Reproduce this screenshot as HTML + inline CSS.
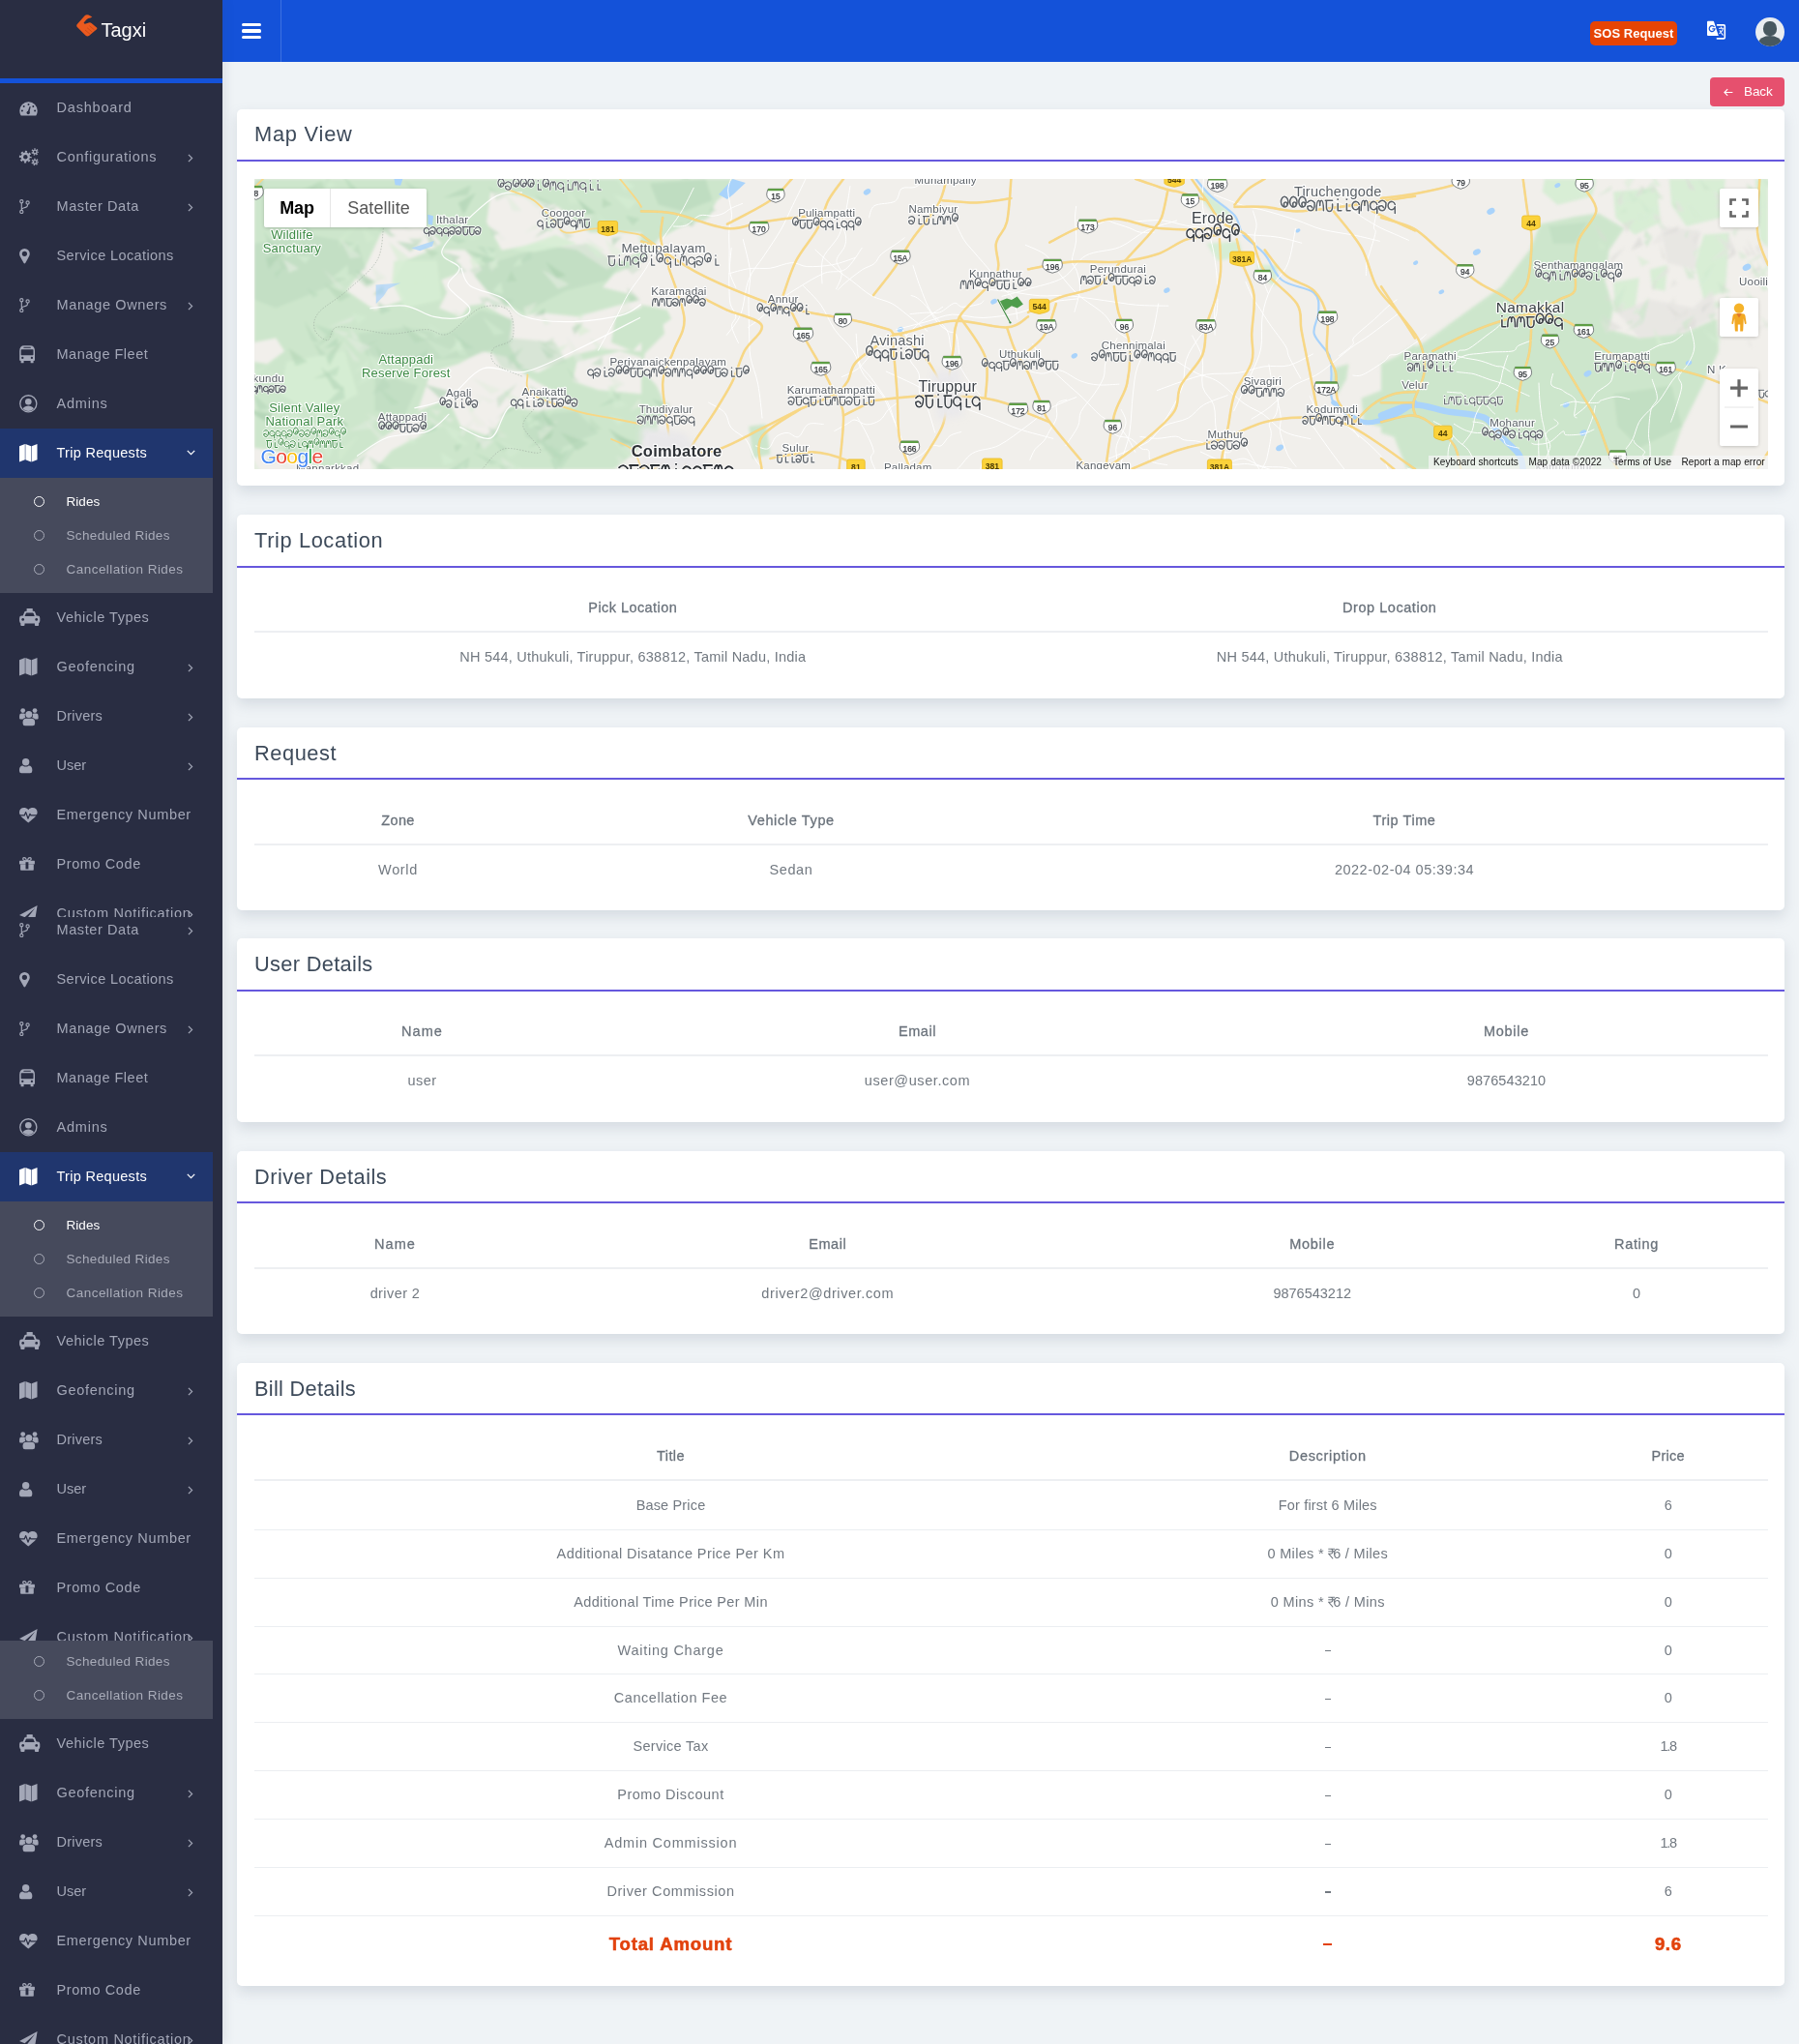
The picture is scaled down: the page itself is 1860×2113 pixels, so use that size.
<!DOCTYPE html>
<html><head><meta charset="utf-8"><title>Tagxi</title>
<style>
*{box-sizing:border-box}
html,body{margin:0;padding:0}
body{width:1860px;height:2113px;overflow:hidden;background:#eff3f6;font-family:"Liberation Sans",sans-serif;font-size:15px;color:#6c757d}
#page{will-change:transform;opacity:.999;position:relative;width:1860px;height:2113px;overflow:hidden;background:#eff3f6}
/* sidebar */
#sb{position:absolute;left:0;top:0;width:230px;height:2113px;background:#292d42;overflow:hidden;box-shadow:0 0 12px rgba(60,70,90,.16)}
.seg{position:absolute;left:0;width:230px;overflow:hidden}
.segin{position:absolute;left:0;width:230px;height:960px}
.act{position:absolute;left:0;top:443px;width:220px;height:51px;background:#20366e}
.subbg{position:absolute;left:0;top:494px;width:220px;height:119px;background:#464a5c}
.mi{position:absolute;left:58.5px;height:24px;line-height:24px;font-size:14.5px;color:#a3a7b7;white-space:nowrap}
.mi.on{color:#fff}
.ic{position:absolute;left:19.5px;width:24px;height:24px;color:#a3a7b7}
.ic.on{color:#fff}
.ic svg{position:absolute;left:0;top:0;overflow:visible}
.chev{position:absolute}
.si{position:absolute;left:68.5px;height:20px;line-height:20px;font-size:13.5px;color:#a9acb9;white-space:nowrap}
.si.on{color:#fff}
.circ{position:absolute;left:35px;width:11px;height:11px;border:1.3px solid #a9acb9;border-radius:50%}
.logoline{position:absolute;left:0;top:81px;width:230px;height:5px;background:#1452d9}
.logot{position:absolute;left:104.5px;top:18.5px;font-size:20px;line-height:24px;color:#fff;white-space:nowrap}
/* header */
#hd{position:absolute;left:230px;top:0;width:1630px;height:64px;background:#1452d9}
/* cards */
.card{position:absolute;left:245px;width:1600px;background:#fff;border-radius:5px;box-shadow:0 6px 14px rgba(120,132,150,.22)}
.ct{position:absolute;left:18px;height:28px;line-height:28px;font-size:21.8px;color:#3d4a5a;white-space:nowrap}
.cl{position:absolute;left:0;width:1600px;height:2.2px;background:#6658dd}
.th,.td,.tt{position:absolute;height:49px;line-height:49px;text-align:center;white-space:nowrap}
.th{font-size:14.5px;color:#6a727b;-webkit-text-stroke:.28px #6a727b}
.td{font-size:14.5px;color:#727981}
.tt{font-weight:bold;font-size:18.6px;color:#e2420d;height:55px;line-height:55px;-webkit-text-stroke:.55px #e2420d}
.hb{position:absolute;left:18px;width:1565px;height:2px;background:#edeff2}
.rb{position:absolute;left:18px;width:1565px;height:1px;background:#ebeef1}
.tk{display:inline-block;vertical-align:-1.5px;margin:0 -3.2px 0 0}
#map{position:absolute;left:18px;top:71.7px;width:1565px;height:300px;overflow:hidden;background:#f1efeb}
.ds{position:absolute;left:50%;margin-left:-3.2px;top:24.6px;width:6.4px;height:1.3px;background:#727981}
.dt{position:absolute;left:50%;margin-left:-4.5px;top:26.6px;width:9px;height:2.4px;background:#e2420d}

</style></head>
<body>
<div id="page">
<div class="card" style="top:113px;height:388.7px"><div class="ct" style="top:12.4px;letter-spacing:0.79px;">Map View</div><div class="cl" style="top:51.7px"></div><div id="map"><svg width="1565" height="300" viewBox="0 0 1565 300" style="position:absolute;left:0;top:0">
<defs><filter id="bl" x="-5%" y="-5%" width="110%" height="110%"><feGaussianBlur stdDeviation="1.6"/></filter><filter id="bl2" x="-5%" y="-5%" width="110%" height="110%"><feGaussianBlur stdDeviation="3.5"/></filter></defs>
<rect width="1565" height="300" fill="#f1efeb"/>
<g filter="url(#bl)">
<polygon points="0.0,0.0 495.0,0.0 478.0,22.0 470.0,40.0 440.0,50.0 418.0,62.0 400.0,86.0 372.0,98.0 360.0,112.0 392.0,120.0 400.0,130.0 420.0,134.0 424.0,160.0 404.0,180.0 400.0,196.0 416.0,214.0 426.0,236.0 410.0,262.0 392.0,284.0 372.0,300.0 0.0,300.0" fill="#cde6cc" />
<polygon points="95.6,115.6 115.6,88.9 133.4,51.1 177.9,50.0 193.4,66.7 177.9,75.6 155.6,84.5 144.5,104.5 155.6,124.5 124.5,135.6" fill="#f1efeb" />
<polygon points="193.4,104.5 222.3,93.4 240.1,115.6 277.9,142.3 293.5,137.9 333.5,142.3 400.0,124.5 400.0,177.9 355.8,175.7 329.1,182.3 293.5,200.1 275.7,195.7 262.4,169.0 266.8,146.7 235.7,129.0 206.8,133.4" fill="#f1efeb" />
<polygon points="182.3,200.1 211.2,191.2 235.7,177.9 262.4,184.5 282.4,204.6 333.5,233.5 293.5,240.1 262.4,235.7 244.6,266.8 213.5,255.7 200.1,226.8 169.0,240.1" fill="#f1efeb" />
<polygon points="244.6,13.3 277.9,17.8 311.3,26.7 346.9,55.6 400.0,55.6 400.0,73.4 364.6,93.4 333.5,73.4 293.5,66.7 255.7,73.4 240.1,44.5" fill="#f1efeb" />
<polygon points="193.4,73.4 213.5,88.9 200.1,115.6 191.2,133.4 213.5,142.3 226.8,124.5 222.3,104.5 235.7,93.4 217.9,73.4" fill="#f1efeb" />
<polygon points="97.8,295.7 133.4,266.8 169.0,244.6 177.9,262.4 142.3,280.2 124.5,299.9 95.6,299.9" fill="#f1efeb" />
<polygon points="0.0,277.9 44.5,284.6 66.7,299.9 0.0,299.9" fill="#f1efeb" />
<polygon points="0.0,169.0 22.2,164.5 31.1,177.9 13.3,191.2 0.0,189.0" fill="#f1efeb" />
<polygon points="333.5,189.0 378.0,177.9 400.0,184.5 400.0,222.3 355.8,217.9 329.1,209.0" fill="#f1efeb" />
<polygon points="222.3,93.4 289.0,73.4 344.6,66.7 378.0,88.9 364.6,104.5 322.4,115.6 277.9,137.9 244.6,120.1" fill="#b5d7b9" opacity=".42"/>
<polygon points="106.7,160.1 155.6,153.4 200.1,160.1 233.5,135.6 266.8,144.5 266.8,169.0 222.3,184.5 155.6,189.0 115.6,182.3" fill="#b5d7b9" opacity=".42"/>
<polygon points="244.6,177.9 266.8,164.5 311.3,169.0 322.4,189.0 277.9,200.1 255.7,195.7" fill="#b5d7b9" opacity=".42"/>
<polygon points="0.0,66.7 57.8,57.8 106.7,66.7 115.6,93.4 66.7,115.6 22.2,133.4 0.0,124.5" fill="#b5d7b9" opacity=".42"/>
<polygon points="124.5,200.1 169.0,213.5 155.6,244.6 124.5,240.1" fill="#b5d7b9" opacity=".42"/>
<polygon points="277.9,244.6 333.5,240.1 355.8,262.4 311.3,280.2 280.2,266.8" fill="#b5d7b9" opacity=".42"/>
<polygon points="144.5,84.5 189.0,84.5 193.4,124.5 155.6,133.4 142.3,106.7" fill="#d6edd4" opacity=".9"/>
<polygon points="33.4,189.0 93.4,177.9 106.7,222.3 66.7,244.6 26.7,222.3" fill="#d6edd4" opacity=".9"/>
<polygon points="266.8,73.4 311.3,57.8 333.5,66.7 289.0,75.6" fill="#d6edd4" opacity=".9"/>
<polygon points="68.5,193.8 93.0,217.4 82.3,217.4" fill="#b5d7b9" opacity="0.69"/>
<polygon points="78.6,154.7 98.5,159.3 92.9,162.9" fill="#e4ebe0" opacity="0.61"/>
<polygon points="194.8,305.7 222.7,287.6 220.5,298.4" fill="#b5d7b9" opacity="0.59"/>
<polygon points="305.5,278.7 319.9,278.4 312.4,288.6" fill="#b5d7b9" opacity="0.51"/>
<polygon points="260.7,106.3 265.5,94.9 271.2,105.4" fill="#a9cfae" opacity="0.43"/>
<polygon points="380.2,59.5 370.8,69.3 369.1,60.8" fill="#b5d7b9" opacity="0.64"/>
<polygon points="108.1,265.3 87.9,291.6 86.5,280.9" fill="#d6edd4" opacity="0.46"/>
<polygon points="217.2,72.7 249.7,82.9 240.0,87.8" fill="#a9cfae" opacity="0.52"/>
<polygon points="256.0,216.2 275.9,229.3 265.8,232.8" fill="#d6edd4" opacity="0.41"/>
<polygon points="70.7,92.6 94.9,114.2 86.0,113.7" fill="#e4ebe0" opacity="0.41"/>
<polygon points="193.0,37.5 221.0,55.5 211.0,57.2" fill="#a9cfae" opacity="0.70"/>
<polygon points="171.7,68.5 191.0,76.6 183.3,80.7" fill="#b5d7b9" opacity="0.61"/>
<polygon points="22.0,78.1 35.5,93.2 28.6,92.9" fill="#b5d7b9" opacity="0.37"/>
<polygon points="158.7,265.5 167.9,272.3 162.4,274.0" fill="#d6edd4" opacity="0.58"/>
<polygon points="169.3,37.4 186.8,51.4 174.4,55.0" fill="#d6edd4" opacity="0.52"/>
<polygon points="60.5,169.1 74.7,182.3 68.3,182.6" fill="#b5d7b9" opacity="0.60"/>
<polygon points="120.9,89.8 137.0,102.8 126.5,105.7" fill="#e4ebe0" opacity="0.61"/>
<polygon points="383.6,37.8 398.6,41.1 391.0,48.0" fill="#b5d7b9" opacity="0.63"/>
<polygon points="22.2,25.1 49.3,43.5 39.4,45.0" fill="#e4ebe0" opacity="0.66"/>
<polygon points="288.9,61.5 306.1,45.7 305.1,52.0" fill="#a9cfae" opacity="0.60"/>
<polygon points="411.1,227.2 430.2,233.4 422.1,239.2" fill="#b5d7b9" opacity="0.65"/>
<polygon points="117.3,283.3 108.7,296.9 106.8,290.9" fill="#b5d7b9" opacity="0.60"/>
<polygon points="388.8,142.4 385.9,154.4 379.7,147.0" fill="#e4ebe0" opacity="0.46"/>
<polygon points="253.5,82.6 245.8,95.9 241.7,86.8" fill="#e4ebe0" opacity="0.46"/>
<polygon points="86.8,27.8 103.4,7.7 105.6,18.4" fill="#b5d7b9" opacity="0.63"/>
<polygon points="342.8,137.1 336.1,146.9 334.8,142.3" fill="#d6edd4" opacity="0.58"/>
<polygon points="28.6,77.1 14.8,92.9 12.0,81.4" fill="#a9cfae" opacity="0.49"/>
<polygon points="147.0,64.4 169.3,67.4 161.4,75.6" fill="#b5d7b9" opacity="0.66"/>
<polygon points="384.8,179.9 366.7,200.2 364.7,188.9" fill="#e4ebe0" opacity="0.44"/>
<polygon points="287.1,243.8 304.6,247.7 298.3,253.1" fill="#b5d7b9" opacity="0.40"/>
<polygon points="257.6,12.5 276.9,32.9 267.0,33.0" fill="#d6edd4" opacity="0.39"/>
<polygon points="103.6,97.0 95.3,105.9 94.6,101.1" fill="#d6edd4" opacity="0.53"/>
<polygon points="106.1,213.0 120.3,196.7 121.9,205.6" fill="#d6edd4" opacity="0.57"/>
<polygon points="128.1,55.4 138.6,43.5 141.3,56.2" fill="#b5d7b9" opacity="0.36"/>
<polygon points="379.6,273.1 400.8,284.8 392.4,287.8" fill="#e4ebe0" opacity="0.50"/>
<polygon points="220.3,291.5 214.3,305.3 210.3,298.5" fill="#d6edd4" opacity="0.35"/>
<polygon points="72.1,175.3 85.7,163.7 86.2,172.2" fill="#b5d7b9" opacity="0.66"/>
<polygon points="128.4,166.0 107.3,181.0 109.4,174.4" fill="#b5d7b9" opacity="0.50"/>
<polygon points="305.1,49.5 325.2,37.8 323.8,47.3" fill="#e4ebe0" opacity="0.59"/>
<polygon points="314.7,37.9 335.7,52.2 329.2,52.2" fill="#d6edd4" opacity="0.63"/>
<polygon points="313.5,50.0 330.2,59.1 322.8,62.2" fill="#b5d7b9" opacity="0.41"/>
<polygon points="274.8,87.4 284.8,74.9 286.8,82.5" fill="#b5d7b9" opacity="0.44"/>
<polygon points="106.1,47.6 87.0,70.7 87.1,62.3" fill="#d6edd4" opacity="0.36"/>
<polygon points="159.6,154.4 180.0,162.7 173.5,165.3" fill="#d6edd4" opacity="0.65"/>
<polygon points="373.0,264.9 403.4,275.0 393.8,280.1" fill="#a9cfae" opacity="0.67"/>
<polygon points="372.0,-4.9 393.8,7.6 382.9,12.3" fill="#d6edd4" opacity="0.58"/>
<polygon points="83.0,274.2 76.4,289.1 69.8,277.5" fill="#d6edd4" opacity="0.54"/>
<polygon points="367.8,213.2 379.2,229.5 372.4,228.5" fill="#b5d7b9" opacity="0.54"/>
<polygon points="46.7,12.6 77.7,-1.6 74.1,10.5" fill="#b5d7b9" opacity="0.61"/>
<polygon points="98.2,152.1 108.4,166.1 102.0,165.6" fill="#e4ebe0" opacity="0.58"/>
<polygon points="287.5,142.1 300.5,134.0 299.8,140.3" fill="#a9cfae" opacity="0.64"/>
<polygon points="100.6,138.8 116.0,143.0 107.1,150.3" fill="#d6edd4" opacity="0.47"/>
<polygon points="205.2,83.3 220.4,95.4 212.2,97.4" fill="#b5d7b9" opacity="0.35"/>
<polygon points="325.1,170.4 314.4,181.0 313.5,174.3" fill="#d6edd4" opacity="0.61"/>
<polygon points="379.7,140.9 401.7,145.0 394.7,151.0" fill="#b5d7b9" opacity="0.49"/>
<polygon points="294.9,172.8 310.6,184.0 303.5,185.8" fill="#b5d7b9" opacity="0.62"/>
<polygon points="369.6,267.2 393.2,288.0 385.5,286.8" fill="#d6edd4" opacity="0.46"/>
<polygon points="297.6,38.3 312.6,47.1 306.2,49.4" fill="#e4ebe0" opacity="0.42"/>
<polygon points="224.9,206.0 254.9,218.1 245.1,222.5" fill="#d6edd4" opacity="0.35"/>
<polygon points="114.2,242.3 138.6,250.7 132.2,252.5" fill="#e4ebe0" opacity="0.60"/>
<polygon points="292.5,126.9 281.5,143.0 277.9,133.2" fill="#e4ebe0" opacity="0.57"/>
<polygon points="163.2,109.6 186.0,94.0 184.9,104.7" fill="#d6edd4" opacity="0.50"/>
<polygon points="96.6,260.8 124.8,245.5 122.3,257.7" fill="#e4ebe0" opacity="0.47"/>
<polygon points="68.2,-2.2 84.6,5.9 73.0,12.1" fill="#d6edd4" opacity="0.51"/>
<polygon points="89.9,-6.2 106.1,10.7 98.9,10.3" fill="#b5d7b9" opacity="0.58"/>
<polygon points="294.9,33.4 309.3,38.1 304.8,40.5" fill="#a9cfae" opacity="0.62"/>
<polygon points="93.5,162.2 120.8,173.5 109.1,180.4" fill="#e4ebe0" opacity="0.59"/>
<polygon points="385.4,111.8 399.4,125.2 388.0,127.5" fill="#a9cfae" opacity="0.36"/>
<polygon points="251.0,256.4 229.1,280.2 230.6,272.3" fill="#b5d7b9" opacity="0.69"/>
<polygon points="380.2,210.9 367.7,225.1 365.3,214.7" fill="#d6edd4" opacity="0.58"/>
<polygon points="181.3,237.9 193.8,239.6 188.8,245.0" fill="#e4ebe0" opacity="0.63"/>
<polygon points="353.1,35.1 373.2,51.8 363.8,53.3" fill="#d6edd4" opacity="0.43"/>
<polygon points="168.6,265.5 188.7,250.0 188.2,259.6" fill="#b5d7b9" opacity="0.54"/>
<polygon points="166.5,63.3 181.6,53.1 180.7,59.8" fill="#e4ebe0" opacity="0.67"/>
<polygon points="190.4,53.2 219.6,63.8 211.0,67.3" fill="#b5d7b9" opacity="0.58"/>
<polygon points="101.5,201.8 117.7,185.6 118.3,194.2" fill="#d6edd4" opacity="0.45"/>
<polygon points="279.3,242.2 295.9,253.1 284.1,257.8" fill="#d6edd4" opacity="0.58"/>
<polygon points="128.5,215.3 150.1,232.3 141.5,233.2" fill="#b5d7b9" opacity="0.55"/>
<polygon points="388.0,240.4 398.1,226.9 400.0,233.9" fill="#e4ebe0" opacity="0.63"/>
<polygon points="283.5,212.6 309.1,229.2 295.8,234.0" fill="#b5d7b9" opacity="0.52"/>
<polygon points="330.3,147.1 347.8,157.0 336.1,162.6" fill="#d6edd4" opacity="0.62"/>
<polygon points="241.4,7.6 260.7,17.4 250.3,22.7" fill="#b5d7b9" opacity="0.37"/>
<polygon points="313.5,26.7 301.0,44.0 297.5,33.4" fill="#a9cfae" opacity="0.49"/>
<polygon points="176.2,212.2 202.6,219.8 192.4,227.4" fill="#b5d7b9" opacity="0.69"/>
<polygon points="116.4,174.1 132.7,199.8 125.3,196.8" fill="#d6edd4" opacity="0.47"/>
<polygon points="300.9,241.2 309.0,248.2 301.9,249.9" fill="#b5d7b9" opacity="0.41"/>
<polygon points="159.4,61.4 174.3,62.2 168.3,69.7" fill="#b5d7b9" opacity="0.54"/>
<polygon points="419.1,245.7 397.8,264.4 399.5,257.1" fill="#e4ebe0" opacity="0.68"/>
<polygon points="138.6,64.8 161.9,83.1 149.2,86.2" fill="#d6edd4" opacity="0.61"/>
<polygon points="339.8,63.4 362.3,81.0 354.3,81.2" fill="#d6edd4" opacity="0.68"/>
<polygon points="282.5,278.0 309.3,259.5 306.4,267.6" fill="#a9cfae" opacity="0.60"/>
<polygon points="195.2,19.6 224.2,6.2 220.8,16.6" fill="#b5d7b9" opacity="0.67"/>
<polygon points="-3.5,220.0 15.8,236.9 5.1,238.9" fill="#a9cfae" opacity="0.37"/>
<polygon points="205.5,159.1 221.4,183.6 211.3,181.9" fill="#d6edd4" opacity="0.44"/>
<polygon points="266.0,187.6 279.4,192.9 272.5,197.4" fill="#b5d7b9" opacity="0.46"/>
<polygon points="134.9,99.1 117.6,114.2 118.7,107.9" fill="#d6edd4" opacity="0.38"/>
<polygon points="87.5,60.4 110.4,80.6 98.9,82.2" fill="#e4ebe0" opacity="0.52"/>
<polygon points="360.6,195.7 383.1,212.8 372.9,214.9" fill="#e4ebe0" opacity="0.61"/>
<polygon points="291.5,266.9 318.9,286.6 308.1,288.4" fill="#b5d7b9" opacity="0.67"/>
<polygon points="40.6,208.2 54.2,223.8 44.5,224.5" fill="#d6edd4" opacity="0.44"/>
<polygon points="111.5,248.0 137.3,269.2 128.5,268.7" fill="#e4ebe0" opacity="0.54"/>
<polygon points="340.2,147.9 331.2,161.3 328.2,153.4" fill="#a9cfae" opacity="0.50"/>
<polygon points="322.4,194.2 335.7,209.6 330.0,208.7" fill="#b5d7b9" opacity="0.45"/>
<polygon points="175.2,47.4 190.0,69.1 180.9,67.7" fill="#a9cfae" opacity="0.45"/>
<polygon points="343.5,61.3 362.7,74.2 353.5,77.1" fill="#d6edd4" opacity="0.44"/>
<polygon points="64.7,261.1 91.0,273.8 82.9,275.9" fill="#a9cfae" opacity="0.62"/>
<polygon points="91.7,166.2 77.4,193.3 74.2,183.5" fill="#b5d7b9" opacity="0.65"/>
<polygon points="279.5,56.2 296.2,43.1 295.0,49.0" fill="#d6edd4" opacity="0.41"/>
<polygon points="82.2,181.4 93.4,166.2 96.8,176.4" fill="#d6edd4" opacity="0.42"/>
<polygon points="242.5,49.1 253.8,56.2 246.5,59.2" fill="#b5d7b9" opacity="0.58"/>
<polygon points="250.5,247.9 275.4,227.7 272.7,235.0" fill="#a9cfae" opacity="0.62"/>
<polygon points="61.4,149.8 81.6,156.7 74.2,161.4" fill="#b5d7b9" opacity="0.51"/>
<polygon points="236.5,80.4 226.7,94.3 222.6,82.4" fill="#d6edd4" opacity="0.62"/>
<polygon points="346.8,164.3 367.4,177.0 357.8,180.5" fill="#d6edd4" opacity="0.43"/>
<polygon points="197.5,259.4 221.8,273.9 213.4,275.7" fill="#d6edd4" opacity="0.51"/>
<polygon points="449.3,17.0 477.9,32.3 465.0,37.9" fill="#b5d7b9" opacity="0.51"/>
<polygon points="374.0,285.6 388.9,294.1 378.4,299.0" fill="#e4ebe0" opacity="0.40"/>
<polygon points="253.6,271.7 275.2,281.2 263.7,288.2" fill="#d6edd4" opacity="0.53"/>
<polygon points="227.2,266.0 247.3,270.7 237.4,279.5" fill="#e4ebe0" opacity="0.69"/>
<polygon points="232.5,121.8 243.8,123.8 236.5,130.6" fill="#b5d7b9" opacity="0.42"/>
<polygon points="154.3,113.3 167.9,123.4 162.1,124.5" fill="#d6edd4" opacity="0.55"/>
<polygon points="117.0,286.2 145.2,302.4 133.1,306.9" fill="#b5d7b9" opacity="0.50"/>
<polygon points="17.2,285.1 43.3,302.7 35.7,302.3" fill="#e4ebe0" opacity="0.52"/>
<polygon points="360.1,19.4 370.2,26.5 359.8,29.8" fill="#a9cfae" opacity="0.46"/>
<polygon points="350.0,36.8 342.3,45.1 340.9,38.5" fill="#e4ebe0" opacity="0.65"/>
<polygon points="179.7,149.3 197.0,161.2 187.0,164.7" fill="#d6edd4" opacity="0.38"/>
<polygon points="246.2,116.3 254.9,106.2 257.2,118.9" fill="#d6edd4" opacity="0.61"/>
<polygon points="152.7,149.9 177.4,166.2 166.1,169.7" fill="#b5d7b9" opacity="0.57"/>
<polygon points="175.9,164.4 206.9,178.6 194.2,184.9" fill="#d6edd4" opacity="0.38"/>
<polygon points="78.5,240.2 97.7,254.8 88.4,257.0" fill="#a9cfae" opacity="0.57"/>
<polygon points="396.0,55.7 403.7,64.4 397.9,64.9" fill="#d6edd4" opacity="0.58"/>
<polygon points="129.1,194.6 146.5,204.1 135.4,209.6" fill="#d6edd4" opacity="0.56"/>
<polygon points="409.7,1.0 431.0,15.4 420.9,18.4" fill="#d6edd4" opacity="0.49"/>
<polygon points="301.3,85.8 322.0,99.7 312.1,102.8" fill="#a9cfae" opacity="0.63"/>
<polygon points="61.1,206.7 88.1,192.9 85.2,203.1" fill="#b5d7b9" opacity="0.50"/>
<polygon points="318.0,37.2 305.9,56.2 300.9,43.9" fill="#d6edd4" opacity="0.69"/>
<polygon points="197.5,75.8 213.4,80.5 207.3,84.9" fill="#b5d7b9" opacity="0.64"/>
<polygon points="79.8,102.5 96.5,88.8 97.5,102.2" fill="#d6edd4" opacity="0.65"/>
<polygon points="167.2,240.4 179.8,248.9 170.6,252.5" fill="#e4ebe0" opacity="0.44"/>
<polygon points="286.4,253.3 303.7,260.4 297.8,263.1" fill="#b5d7b9" opacity="0.51"/>
<polygon points="266.8,90.8 275.0,81.3 276.9,88.9" fill="#d6edd4" opacity="0.55"/>
<polygon points="385.2,147.7 403.1,162.4 394.9,163.6" fill="#a9cfae" opacity="0.57"/>
<polygon points="71.3,235.4 92.0,214.3 93.7,227.1" fill="#b5d7b9" opacity="0.59"/>
<polygon points="343.5,4.9 354.9,10.6 346.2,15.1" fill="#d6edd4" opacity="0.49"/>
<polygon points="289.7,16.7 310.1,25.8 301.0,30.9" fill="#a9cfae" opacity="0.40"/>
<polygon points="316.4,262.1 345.5,273.1 333.4,280.7" fill="#a9cfae" opacity="0.55"/>
<polygon points="296.9,93.7 325.6,108.9 313.9,113.6" fill="#e4ebe0" opacity="0.65"/>
<polygon points="241.9,92.4 249.2,82.2 252.3,91.3" fill="#d6edd4" opacity="0.62"/>
<polygon points="253.3,123.0 267.6,125.0 258.9,133.7" fill="#b5d7b9" opacity="0.57"/>
<polygon points="228.9,14.2 216.2,36.7 210.7,24.7" fill="#a9cfae" opacity="0.56"/>
<polygon points="9.7,54.6 28.6,78.9 19.2,77.4" fill="#b5d7b9" opacity="0.65"/>
<polygon points="63.5,174.5 81.4,154.6 81.0,162.1" fill="#a9cfae" opacity="0.46"/>
<polygon points="54.4,113.5 66.7,119.7 61.0,122.5" fill="#b5d7b9" opacity="0.51"/>
<polygon points="314.1,231.5 302.2,252.0 300.7,245.0" fill="#d6edd4" opacity="0.36"/>
<polygon points="371.1,16.4 396.4,23.2 386.2,31.4" fill="#d6edd4" opacity="0.63"/>
<polygon points="108.2,64.2 100.0,76.4 97.6,69.7" fill="#d6edd4" opacity="0.65"/>
<polygon points="82.5,261.1 94.4,263.6 85.0,271.1" fill="#d6edd4" opacity="0.63"/>
<polygon points="122.8,120.1 132.8,109.5 134.8,119.3" fill="#a9cfae" opacity="0.65"/>
<polygon points="397.6,31.1 412.6,15.3 415.2,28.0" fill="#a9cfae" opacity="0.68"/>
<polygon points="374.8,84.3 400.4,91.9 390.9,98.6" fill="#b5d7b9" opacity="0.37"/>
<polygon points="-4.4,285.8 11.9,309.3 1.4,308.1" fill="#d6edd4" opacity="0.47"/>
<polygon points="235.1,142.3 259.1,159.0 248.4,161.8" fill="#d6edd4" opacity="0.50"/>
<polygon points="161.1,188.8 178.9,176.7 178.7,190.3" fill="#b5d7b9" opacity="0.67"/>
<polygon points="241.2,255.7 257.7,262.1 247.2,269.1" fill="#b5d7b9" opacity="0.40"/>
<polygon points="113.7,39.5 126.2,47.7 118.7,50.6" fill="#a9cfae" opacity="0.53"/>
<polygon points="64.0,70.1 55.0,79.2 54.1,73.3" fill="#d6edd4" opacity="0.51"/>
<polygon points="369.1,203.5 376.4,195.1 377.4,199.9" fill="#d6edd4" opacity="0.57"/>
<polygon points="247.6,270.5 262.8,278.6 256.1,281.5" fill="#b5d7b9" opacity="0.47"/>
<polygon points="254.7,287.7 269.4,296.9 259.7,301.0" fill="#e4ebe0" opacity="0.60"/>
<polygon points="-10.4,14.2 9.2,-0.7 8.2,7.5" fill="#b5d7b9" opacity="0.69"/>
<polygon points="146.8,278.8 162.8,267.1 161.7,273.1" fill="#d6edd4" opacity="0.43"/>
<polygon points="-7.8,238.2 19.3,243.3 10.7,250.6" fill="#a9cfae" opacity="0.68"/>
<polygon points="194.6,244.4 206.7,248.8 201.4,252.3" fill="#e4ebe0" opacity="0.68"/>
<polygon points="229.6,69.6 250.3,71.8 242.7,80.4" fill="#b5d7b9" opacity="0.49"/>
<polygon points="237.2,121.2 257.3,128.5 248.6,134.3" fill="#b5d7b9" opacity="0.43"/>
<polygon points="245.3,289.0 277.4,298.4 268.1,303.2" fill="#d6edd4" opacity="0.38"/>
<polygon points="225.7,282.2 252.3,293.4 244.8,295.1" fill="#b5d7b9" opacity="0.56"/>
<polygon points="82.1,23.0 62.7,40.5 62.3,30.4" fill="#d6edd4" opacity="0.43"/>
<polygon points="431.5,8.9 449.3,-8.5 449.9,0.9" fill="#a9cfae" opacity="0.43"/>
<polygon points="422.6,247.7 401.7,269.4 402.2,260.6" fill="#a9cfae" opacity="0.52"/>
<polygon points="296.5,171.7 309.5,163.7 308.9,171.3" fill="#b5d7b9" opacity="0.38"/>
<polygon points="156.9,42.2 169.7,48.6 158.4,54.1" fill="#e4ebe0" opacity="0.67"/>
<polygon points="362.5,61.7 382.8,77.3 370.1,81.1" fill="#d6edd4" opacity="0.36"/>
<polygon points="35.9,241.9 51.0,246.6 40.4,254.3" fill="#d6edd4" opacity="0.51"/>
<polygon points="279.5,256.4 300.3,236.1 299.7,244.7" fill="#b5d7b9" opacity="0.46"/>
<polygon points="160.7,27.6 171.2,32.0 164.0,36.4" fill="#b5d7b9" opacity="0.70"/>
<polygon points="30.6,70.7 40.5,78.4 32.3,80.8" fill="#d6edd4" opacity="0.69"/>
<polygon points="128.5,47.4 146.5,59.0 140.3,59.8" fill="#b5d7b9" opacity="0.58"/>
<polygon points="435.6,38.5 448.6,38.4 440.7,48.3" fill="#a9cfae" opacity="0.39"/>
<polygon points="219.2,234.8 240.5,255.1 229.8,256.0" fill="#e4ebe0" opacity="0.42"/>
<polygon points="253.1,294.9 265.8,297.3 256.7,305.2" fill="#b5d7b9" opacity="0.37"/>
<polygon points="204.7,134.4 217.7,140.3 210.3,144.6" fill="#e4ebe0" opacity="0.60"/>
<polygon points="219.2,48.7 234.6,58.9 223.5,63.3" fill="#d6edd4" opacity="0.39"/>
<polygon points="335.7,273.8 316.2,301.2 312.9,288.5" fill="#b5d7b9" opacity="0.43"/>
<polygon points="35.3,175.0 55.1,188.8 42.6,193.3" fill="#a9cfae" opacity="0.44"/>
<polygon points="442.1,11.1 464.1,36.0 455.7,34.0" fill="#d6edd4" opacity="0.41"/>
<polygon points="333.6,20.5 352.8,35.2 344.2,36.8" fill="#a9cfae" opacity="0.64"/>
<polygon points="65.5,264.4 83.7,269.6 75.6,276.0" fill="#e4ebe0" opacity="0.68"/>
<polygon points="194.1,253.1 216.1,263.4 205.9,268.9" fill="#d6edd4" opacity="0.61"/>
<polygon points="46.1,41.9 61.7,55.7 54.8,56.2" fill="#b5d7b9" opacity="0.59"/>
<polygon points="373.0,139.5 386.6,124.0 389.4,135.9" fill="#e4ebe0" opacity="0.47"/>
<polygon points="235.0,227.3 224.1,242.2 222.5,235.4" fill="#d6edd4" opacity="0.60"/>
<polygon points="273.1,13.2 302.6,24.9 292.2,30.2" fill="#d6edd4" opacity="0.43"/>
<polygon points="366.0,257.8 390.0,272.6 379.6,276.0" fill="#a9cfae" opacity="0.57"/>
<polygon points="28.0,288.6 36.2,274.8 41.0,285.7" fill="#a9cfae" opacity="0.44"/>
<polygon points="155.1,1.2 178.4,17.1 167.4,20.3" fill="#b5d7b9" opacity="0.49"/>
<polygon points="124.4,171.5 141.5,194.0 134.0,192.0" fill="#a9cfae" opacity="0.51"/>
<polygon points="445.4,28.4 429.9,42.8 428.9,32.9" fill="#b5d7b9" opacity="0.59"/>
<polygon points="315.2,248.6 295.3,272.5 293.2,260.6" fill="#e4ebe0" opacity="0.41"/>
<polygon points="230.2,244.9 214.4,267.6 213.6,259.7" fill="#e4ebe0" opacity="0.59"/>
<polygon points="17.8,189.4 -3.8,209.6 -3.7,199.5" fill="#d6edd4" opacity="0.37"/>
<polygon points="75.5,16.6 84.4,10.4 84.4,16.2" fill="#e4ebe0" opacity="0.49"/>
<polygon points="31.1,91.0 21.9,102.2 21.0,96.7" fill="#b5d7b9" opacity="0.51"/>
<polygon points="393.3,137.3 409.4,128.8 407.7,134.7" fill="#e4ebe0" opacity="0.35"/>
<polygon points="111.2,50.9 126.8,61.7 115.9,65.7" fill="#d6edd4" opacity="0.48"/>
<polygon points="322.4,162.6 342.7,189.2 331.9,187.8" fill="#e4ebe0" opacity="0.56"/>
<polygon points="241.2,246.1 261.9,267.6 252.8,267.0" fill="#e4ebe0" opacity="0.38"/>
<polygon points="323.1,9.4 335.7,25.3 325.6,25.7" fill="#d6edd4" opacity="0.44"/>
<polygon points="121.6,222.4 135.4,202.5 140.1,215.5" fill="#b5d7b9" opacity="0.42"/>
<polygon points="85.5,14.5 96.7,21.0 86.4,25.3" fill="#a9cfae" opacity="0.51"/>
<polygon points="247.3,53.3 259.9,62.1 254.5,63.3" fill="#e4ebe0" opacity="0.48"/>
<polygon points="347.9,192.1 359.9,183.2 360.1,193.1" fill="#b5d7b9" opacity="0.52"/>
<polygon points="271.8,211.5 252.1,237.1 250.5,226.5" fill="#b5d7b9" opacity="0.48"/>
<polygon points="236.7,68.6 249.7,79.1 242.6,80.8" fill="#d6edd4" opacity="0.58"/>
<polygon points="148.7,45.1 158.6,35.8 159.8,44.2" fill="#b5d7b9" opacity="0.48"/>
<polygon points="154.5,51.1 166.4,34.9 169.6,44.9" fill="#b5d7b9" opacity="0.61"/>
<polygon points="355.1,235.8 379.0,221.2 376.7,229.4" fill="#b5d7b9" opacity="0.56"/>
<polygon points="30.1,82.9 46.0,92.6 36.0,96.9" fill="#e4ebe0" opacity="0.66"/>
<polygon points="43.0,79.0 58.4,80.7 52.4,87.4" fill="#d6edd4" opacity="0.64"/>
<polygon points="32.0,236.9 16.7,263.7 12.1,251.8" fill="#d6edd4" opacity="0.45"/>
<polygon points="14.9,281.9 26.3,290.8 14.2,294.0" fill="#a9cfae" opacity="0.66"/>
<polygon points="51.2,146.3 67.0,169.4 59.5,167.2" fill="#a9cfae" opacity="0.39"/>
<polygon points="193.0,282.2 207.6,291.9 195.5,296.5" fill="#d6edd4" opacity="0.58"/>
<polygon points="201.3,179.0 212.1,165.6 215.4,177.2" fill="#d6edd4" opacity="0.63"/>
<polygon points="201.2,156.2 227.0,175.5 218.9,175.0" fill="#b5d7b9" opacity="0.67"/>
<polygon points="99.3,36.4 108.0,25.9 110.6,35.7" fill="#b5d7b9" opacity="0.69"/>
<polygon points="367.2,244.2 382.7,249.3 376.2,253.9" fill="#d6edd4" opacity="0.66"/>
<polygon points="278.3,174.1 264.0,194.0 261.4,184.3" fill="#b5d7b9" opacity="0.44"/>
<polygon points="405.4,14.2 420.0,0.4 419.4,6.1" fill="#b5d7b9" opacity="0.55"/>
<polygon points="292.5,166.1 315.1,180.0 307.0,181.7" fill="#b5d7b9" opacity="0.38"/>
<polygon points="294.5,281.0 309.5,274.6 307.6,280.2" fill="#b5d7b9" opacity="0.36"/>
<polygon points="346.8,246.5 359.2,258.3 347.6,260.6" fill="#b5d7b9" opacity="0.38"/>
<polygon points="67.2,5.0 49.7,25.5 48.6,16.2" fill="#b5d7b9" opacity="0.67"/>
<polygon points="175.9,242.8 195.8,255.1 188.2,257.1" fill="#e4ebe0" opacity="0.56"/>
<polygon points="227.3,221.9 249.6,229.5 243.3,232.0" fill="#e4ebe0" opacity="0.55"/>
<polygon points="75.1,153.9 104.5,141.4 100.0,147.8" fill="#e4ebe0" opacity="0.66"/>
<polygon points="445.6,42.3 455.8,46.4 451.1,49.4" fill="#a9cfae" opacity="0.53"/>
<polygon points="93.2,170.0 109.5,189.0 102.8,187.6" fill="#e4ebe0" opacity="0.59"/>
<polygon points="14.6,197.5 27.6,214.2 21.6,213.0" fill="#e4ebe0" opacity="0.57"/>
<polygon points="54.9,251.3 73.4,257.5 63.7,264.6" fill="#e4ebe0" opacity="0.65"/>
<polygon points="100.3,97.8 124.0,107.6 115.5,111.9" fill="#b5d7b9" opacity="0.51"/>
<polygon points="369.6,221.1 385.0,234.5 372.1,237.7" fill="#d6edd4" opacity="0.49"/>
<polygon points="296.2,239.9 312.2,255.1 304.2,255.8" fill="#a9cfae" opacity="0.67"/>
<polygon points="72.2,108.6 99.9,120.5 88.4,126.7" fill="#b5d7b9" opacity="0.61"/>
<polygon points="215.4,273.8 208.7,282.6 206.4,275.5" fill="#a9cfae" opacity="0.43"/>
<polygon points="324.6,279.2 311.6,302.8 305.9,290.5" fill="#b5d7b9" opacity="0.51"/>
<polygon points="104.7,94.2 124.8,105.9 116.1,109.1" fill="#a9cfae" opacity="0.63"/>
<polygon points="118.8,287.7 131.5,307.4 123.5,305.9" fill="#d6edd4" opacity="0.51"/>
<polygon points="126.8,126.2 141.4,135.4 130.9,139.9" fill="#b5d7b9" opacity="0.59"/>
<polygon points="296.6,141.3 307.0,149.2 299.7,151.5" fill="#d6edd4" opacity="0.40"/>
<polygon points="400.0,0.0 495.6,0.0 488.9,13.3 473.4,26.7 466.7,42.2 433.4,46.7 413.3,35.6 400.0,33.4" fill="#cde6cc" />
<polygon points="408.9,4.4 466.7,0.0 473.4,22.2 444.5,33.4 417.8,26.7" fill="#b5d7b9" opacity=".6"/>
<polygon points="373.3,142.3 404.4,131.2 426.7,135.6 431.1,144.5 408.9,160.1 391.1,177.9 368.9,169.0" fill="#cde6cc" />
<polygon points="511.2,255.7 529.0,253.5 533.4,284.6 515.6,289.0" fill="#cde6cc" />
<polygon points="382.2,244.6 413.3,235.7 417.8,262.4 386.7,269.0" fill="#cde6cc" />
</g>
<g filter="url(#bl)">
<polygon points="1165.0,191.2 1209.5,169.0 1258.4,133.4 1289.5,111.2 1318.4,73.4 1329.5,46.7 1365.1,38.9 1389.6,35.6 1416.3,51.1 1400.7,73.4 1396.2,104.5 1405.1,133.4 1400.7,155.6 1431.8,164.5 1476.3,160.1 1511.9,144.5 1514.1,177.9 1498.5,211.2 1476.3,255.7 1460.7,299.9 1191.7,299.9 1178.3,266.8 1165.0,262.4" fill="#cde6cc" />
<polygon points="1115.7,195.7 1131.3,191.2 1129.1,206.8 1120.2,222.3 1113.5,220.1" fill="#cde6cc" />
<polygon points="1144.6,226.8 1178.0,213.5 1200.0,200.1 1200.0,262.4 1178.0,260.1 1146.9,251.3" fill="#cde6cc" />
<polygon points="1164.6,200.1 1189.1,177.9 1200.0,171.2 1200.0,200.1 1178.0,213.5" fill="#cde6cc" />
<polygon points="977.9,8.9 1000.1,26.7 1013.5,40.0 1009.0,51.1 991.2,35.6 977.9,20.0" fill="#d6edd4" />
<polygon points="984.5,66.7 1017.9,64.5 1022.3,80.0 995.7,84.5" fill="#d6edd4" />
<polygon points="1035.7,88.9 1057.9,88.9 1055.7,111.2 1044.6,104.5" fill="#d6edd4" />
<polygon points="1334.0,0.0 1387.3,0.0 1382.9,17.8 1347.3,26.7 1331.8,13.3" fill="#d6edd4" opacity=".95"/>
<polygon points="1405.1,13.3 1449.6,8.9 1454.0,44.5 1427.4,57.8 1407.4,40.0" fill="#d6edd4" opacity=".95"/>
<polygon points="1462.9,0.0 1520.8,0.0 1516.3,40.0 1480.7,48.9 1465.2,26.7" fill="#d6edd4" opacity=".95"/>
<polygon points="1498.5,57.8 1525.2,55.6 1520.8,115.6 1498.5,124.5 1489.6,88.9" fill="#d6edd4" opacity=".95"/>
<polygon points="1405.1,106.7 1431.8,102.3 1427.4,133.4 1407.4,137.9" fill="#d6edd4" opacity=".95"/>
<polygon points="1551.9,0.0 1565.0,0.0 1565.0,71.2 1556.3,62.3" fill="#d6edd4" opacity=".95"/>
<polygon points="1442.9,93.4 1460.7,88.9 1458.5,115.6 1445.2,113.4" fill="#d6edd4" opacity=".95"/>
<polygon points="1409.6,137.9 1442.9,124.5 1487.4,133.4 1507.4,115.6 1511.9,142.3 1476.3,160.1 1431.8,164.5" fill="#e6e5e1" opacity=".8"/>
<polygon points="1454.0,48.9 1494.1,53.4 1489.6,93.4 1460.7,86.7" fill="#e6e5e1" opacity=".8"/>
<polygon points="1505.9,84.8 1523.6,67.2 1524.8,78.0" fill="#e3e2de" opacity="0.46"/>
<polygon points="1470.1,21.5 1478.2,33.3 1470.6,33.2" fill="#e3e2de" opacity="0.78"/>
<polygon points="1461.4,130.5 1468.0,122.3 1470.2,130.8" fill="#e3e2de" opacity="0.45"/>
<polygon points="1556.1,106.0 1564.7,114.6 1558.9,115.5" fill="#cde6cc" opacity="0.59"/>
<polygon points="1554.1,85.4 1565.4,102.2 1557.9,101.3" fill="#cde6cc" opacity="0.47"/>
<polygon points="1534.8,50.9 1530.8,59.8 1527.3,53.7" fill="#cde6cc" opacity="0.48"/>
<polygon points="1404.3,123.0 1414.5,137.7 1406.1,137.4" fill="#cde6cc" opacity="0.68"/>
<polygon points="1540.2,113.9 1552.6,126.9 1547.4,126.3" fill="#d6edd4" opacity="0.78"/>
<polygon points="1507.0,132.7 1511.6,125.2 1513.2,129.1" fill="#d6edd4" opacity="0.48"/>
<polygon points="1431.6,33.6 1438.8,42.2 1430.5,42.9" fill="#d6edd4" opacity="0.76"/>
<polygon points="1496.9,154.5 1517.7,169.3 1510.6,169.8" fill="#d6edd4" opacity="0.54"/>
<polygon points="1445.8,59.0 1439.8,70.6 1436.7,64.4" fill="#cde6cc" opacity="0.77"/>
<polygon points="1444.2,31.6 1460.1,51.9 1453.0,50.3" fill="#cde6cc" opacity="0.40"/>
<polygon points="1521.5,107.8 1519.5,118.2 1515.0,113.5" fill="#dcdbd7" opacity="0.57"/>
<polygon points="1524.6,18.0 1538.7,28.3 1529.5,31.4" fill="#dcdbd7" opacity="0.75"/>
<polygon points="1452.5,64.6 1459.5,84.4 1455.4,81.2" fill="#dcdbd7" opacity="0.57"/>
<polygon points="1549.4,19.6 1558.5,37.5 1550.9,35.7" fill="#e3e2de" opacity="0.54"/>
<polygon points="1453.0,59.2 1473.2,47.9 1471.0,54.7" fill="#dcdbd7" opacity="0.61"/>
<polygon points="1410.6,35.7 1418.2,29.8 1418.3,34.4" fill="#cde6cc" opacity="0.56"/>
<polygon points="1417.4,126.7 1412.8,141.7 1406.5,133.6" fill="#e3e2de" opacity="0.60"/>
<polygon points="1433.5,15.8 1446.6,1.7 1448.3,11.0" fill="#cde6cc" opacity="0.45"/>
<polygon points="1531.6,144.7 1521.4,160.7 1521.0,155.6" fill="#d6edd4" opacity="0.68"/>
<polygon points="1510.7,126.2 1519.3,130.5 1510.1,134.4" fill="#cde6cc" opacity="0.60"/>
<polygon points="1395.8,119.8 1402.9,125.0 1399.1,126.1" fill="#dcdbd7" opacity="0.62"/>
<polygon points="1534.1,74.3 1544.0,80.5 1537.3,83.3" fill="#cde6cc" opacity="0.52"/>
<polygon points="1424.1,22.0 1436.2,6.6 1437.0,13.0" fill="#dcdbd7" opacity="0.61"/>
<polygon points="1521.7,134.1 1536.9,145.0 1528.7,147.6" fill="#e3e2de" opacity="0.63"/>
<polygon points="1554.5,31.6 1564.8,23.3 1564.7,28.4" fill="#d6edd4" opacity="0.59"/>
<polygon points="1431.3,19.7 1444.9,34.6 1438.9,33.9" fill="#cde6cc" opacity="0.45"/>
<polygon points="1511.3,138.4 1507.0,147.9 1502.8,140.2" fill="#cde6cc" opacity="0.57"/>
<polygon points="1478.6,-4.7 1489.7,11.6 1483.5,10.4" fill="#dcdbd7" opacity="0.79"/>
<polygon points="1392.1,140.7 1414.1,154.0 1405.5,156.4" fill="#dcdbd7" opacity="0.56"/>
<polygon points="1560.7,66.4 1555.3,76.7 1552.0,70.3" fill="#e3e2de" opacity="0.74"/>
<polygon points="1509.3,93.6 1495.0,112.3 1493.7,104.3" fill="#d6edd4" opacity="0.66"/>
<polygon points="1526.0,48.1 1533.0,35.5 1537.3,44.7" fill="#e3e2de" opacity="0.68"/>
<polygon points="1477.3,88.9 1490.4,102.6 1482.7,103.2" fill="#cde6cc" opacity="0.68"/>
<polygon points="1449.3,5.0 1446.1,15.2 1443.8,11.7" fill="#dcdbd7" opacity="0.68"/>
<polygon points="1459.6,129.6 1474.7,140.9 1468.8,141.6" fill="#dcdbd7" opacity="0.69"/>
<polygon points="1419.5,12.5 1432.4,21.7 1423.9,24.7" fill="#cde6cc" opacity="0.47"/>
<polygon points="1438.2,52.1 1444.8,60.8 1436.9,61.0" fill="#cde6cc" opacity="0.76"/>
<polygon points="1389.0,64.3 1397.8,70.4 1391.6,72.7" fill="#d6edd4" opacity="0.48"/>
<polygon points="1509.0,57.5 1530.0,69.5 1522.1,71.9" fill="#e3e2de" opacity="0.63"/>
<polygon points="1427.6,41.6 1418.5,56.0 1414.5,46.3" fill="#dcdbd7" opacity="0.49"/>
<polygon points="1417.6,149.9 1425.0,145.2 1424.6,149.2" fill="#cde6cc" opacity="0.75"/>
<polygon points="1445.9,152.7 1458.2,173.6 1450.7,171.6" fill="#d6edd4" opacity="0.67"/>
<polygon points="1522.8,54.4 1532.1,76.4 1524.1,73.6" fill="#e3e2de" opacity="0.71"/>
<polygon points="1557.0,141.3 1568.1,154.0 1563.2,153.4" fill="#cde6cc" opacity="0.41"/>
<polygon points="1444.7,67.6 1453.7,55.6 1456.5,64.0" fill="#e3e2de" opacity="0.43"/>
<polygon points="1493.0,-0.8 1506.0,10.7 1499.7,11.5" fill="#cde6cc" opacity="0.71"/>
<polygon points="1452.7,24.1 1439.4,42.7 1439.0,36.3" fill="#d6edd4" opacity="0.56"/>
<polygon points="1521.6,83.9 1529.0,71.1 1531.9,77.8" fill="#dcdbd7" opacity="0.71"/>
<polygon points="1569.3,84.0 1561.9,98.9 1559.8,93.4" fill="#d6edd4" opacity="0.68"/>
<polygon points="1532.5,33.9 1542.3,38.3 1533.7,42.9" fill="#d6edd4" opacity="0.48"/>
<polygon points="1429.2,-5.7 1420.2,11.4 1415.8,2.4" fill="#d6edd4" opacity="0.45"/>
<polygon points="1522.5,156.9 1509.9,172.0 1509.4,165.7" fill="#cde6cc" opacity="0.46"/>
<polygon points="1496.7,54.1 1489.4,68.2 1486.4,61.8" fill="#e3e2de" opacity="0.71"/>
<polygon points="1417.5,70.1 1402.5,88.2 1402.3,81.3" fill="#dcdbd7" opacity="0.53"/>
<polygon points="1555.7,-3.9 1573.6,5.0 1565.8,8.8" fill="#cde6cc" opacity="0.65"/>
<polygon points="1423.1,73.9 1432.2,59.3 1435.9,68.2" fill="#dcdbd7" opacity="0.76"/>
<polygon points="1446.5,35.0 1455.6,40.5 1447.7,43.8" fill="#e3e2de" opacity="0.66"/>
<polygon points="1468.6,157.4 1490.9,143.9 1489.3,153.6" fill="#dcdbd7" opacity="0.61"/>
<polygon points="1501.5,160.0 1497.0,168.6 1494.8,164.2" fill="#cde6cc" opacity="0.48"/>
<polygon points="1475.3,152.8 1471.8,163.6 1469.9,160.2" fill="#cde6cc" opacity="0.70"/>
<polygon points="1448.2,10.0 1457.0,20.3 1450.6,20.7" fill="#cde6cc" opacity="0.60"/>
<polygon points="1383.8,44.3 1399.0,63.9 1392.8,62.1" fill="#dcdbd7" opacity="0.52"/>
<polygon points="1442.1,122.0 1436.6,147.0 1430.1,138.8" fill="#cde6cc" opacity="0.77"/>
<polygon points="1418.5,110.0 1410.1,134.8 1404.5,125.9" fill="#cde6cc" opacity="0.48"/>
<polygon points="1388.1,18.2 1403.5,7.1 1401.9,11.8" fill="#cde6cc" opacity="0.59"/>
<polygon points="1466.5,22.6 1472.2,30.3 1468.2,30.2" fill="#cde6cc" opacity="0.68"/>
<polygon points="1443.1,-7.8 1454.6,7.8 1448.8,6.7" fill="#d6edd4" opacity="0.72"/>
<polygon points="1542.4,4.8 1552.5,11.8 1546.3,14.0" fill="#cde6cc" opacity="0.80"/>
<polygon points="1541.7,88.3 1558.1,76.7 1556.3,81.6" fill="#cde6cc" opacity="0.55"/>
<polygon points="1553.8,71.5 1567.2,89.2 1562.1,87.3" fill="#dcdbd7" opacity="0.62"/>
<polygon points="1483.2,51.5 1480.9,61.8 1478.6,58.6" fill="#cde6cc" opacity="0.65"/>
<polygon points="1508.0,125.5 1496.9,139.2 1496.0,133.1" fill="#dcdbd7" opacity="0.76"/>
<polygon points="1424.4,140.5 1429.9,132.7 1431.6,137.7" fill="#d6edd4" opacity="0.68"/>
<polygon points="1392.2,84.6 1404.3,104.2 1397.6,102.2" fill="#cde6cc" opacity="0.54"/>
<polygon points="1432.2,6.1 1441.3,14.2 1435.6,15.4" fill="#cde6cc" opacity="0.55"/>
<polygon points="1464.7,147.8 1482.3,133.5 1481.7,141.1" fill="#e3e2de" opacity="0.69"/>
<polygon points="1548.7,158.2 1569.5,144.6 1567.3,151.0" fill="#e3e2de" opacity="0.46"/>
<polygon points="1512.8,106.1 1526.4,116.5 1516.4,119.6" fill="#cde6cc" opacity="0.60"/>
<polygon points="1520.2,13.4 1514.2,34.0 1511.3,28.2" fill="#e3e2de" opacity="0.64"/>
<polygon points="1444.4,107.5 1462.8,89.4 1462.2,97.0" fill="#e3e2de" opacity="0.70"/>
<polygon points="1510.5,87.1 1499.6,102.3 1499.0,96.7" fill="#cde6cc" opacity="0.49"/>
<polygon points="1416.3,10.8 1411.7,27.8 1408.6,22.7" fill="#dcdbd7" opacity="0.57"/>
<polygon points="1546.7,144.2 1553.0,136.1 1554.7,141.8" fill="#dcdbd7" opacity="0.48"/>
<polygon points="1533.4,24.0 1542.1,11.8 1544.7,19.5" fill="#d6edd4" opacity="0.63"/>
<polygon points="1499.5,65.5 1488.9,82.2 1487.4,75.8" fill="#d6edd4" opacity="0.51"/>
<polygon points="1542.1,61.0 1553.5,80.2 1548.5,77.8" fill="#e3e2de" opacity="0.72"/>
<polygon points="1543.3,162.7 1548.7,174.3 1545.0,172.8" fill="#e3e2de" opacity="0.46"/>
<polygon points="1489.2,140.4 1479.9,157.2 1476.1,148.7" fill="#cde6cc" opacity="0.77"/>
<polygon points="1480.2,23.8 1497.5,38.8 1488.0,40.6" fill="#d6edd4" opacity="0.71"/>
<polygon points="1515.0,126.8 1530.6,147.3 1524.2,145.3" fill="#dcdbd7" opacity="0.68"/>
<polygon points="1391.5,144.9 1406.9,156.2 1397.5,159.2" fill="#e3e2de" opacity="0.47"/>
<polygon points="1555.8,107.1 1566.5,112.2 1561.2,115.1" fill="#d6edd4" opacity="0.70"/>
<polygon points="1409.2,29.0 1413.8,20.1 1416.3,25.1" fill="#e3e2de" opacity="0.43"/>
<polygon points="1411.0,171.6 1416.7,164.4 1417.8,168.7" fill="#cde6cc" opacity="0.42"/>
<polygon points="1477.7,153.5 1487.0,141.2 1489.0,148.2" fill="#e3e2de" opacity="0.51"/>
<polygon points="1450.9,102.6 1446.4,116.0 1444.6,112.1" fill="#dcdbd7" opacity="0.55"/>
<polygon points="1544.1,98.6 1556.7,89.8 1555.8,94.7" fill="#dcdbd7" opacity="0.69"/>
<polygon points="1463.9,112.0 1467.8,103.4 1471.2,109.1" fill="#e3e2de" opacity="0.63"/>
<polygon points="1533.2,15.8 1545.5,31.0 1539.1,30.3" fill="#d6edd4" opacity="0.45"/>
<polygon points="1483.3,90.8 1491.5,97.3 1486.3,98.8" fill="#cde6cc" opacity="0.56"/>
<polygon points="1414.9,23.4 1429.2,13.5 1428.8,21.0" fill="#d6edd4" opacity="0.61"/>
<polygon points="1517.5,128.9 1523.2,119.7 1525.4,125.2" fill="#cde6cc" opacity="0.57"/>
<polygon points="1508.4,11.8 1518.9,19.8 1511.9,22.0" fill="#e3e2de" opacity="0.62"/>
<polygon points="1429.7,79.2 1443.0,86.3 1434.3,90.7" fill="#d6edd4" opacity="0.62"/>
<polygon points="1543.5,82.7 1559.4,102.1 1551.5,101.2" fill="#cde6cc" opacity="0.59"/>
<polygon points="1539.1,68.2 1548.3,79.0 1543.1,78.9" fill="#dcdbd7" opacity="0.49"/>
<polygon points="1418.6,157.7 1436.1,141.0 1436.1,149.2" fill="#cde6cc" opacity="0.43"/>
<polygon points="1405.1,222.3 1465.2,213.5 1476.3,255.7 1431.8,277.9 1409.6,255.7" fill="#b5d7b9" opacity=".45"/>
<polygon points="1338.4,48.9 1378.5,44.5 1365.1,66.7 1342.9,66.7" fill="#b5d7b9" opacity=".4"/>
</g>
<path d="M973.4 0.0 C976.0 3.0 982.3 11.5 989.0 17.8 C995.7 24.1 1007.9 31.1 1013.5 37.8 C1019.0 44.5 1017.2 51.1 1022.3 57.8 C1027.5 64.5 1037.9 70.0 1044.6 77.8 C1051.3 85.6 1053.8 97.8 1062.4 104.5 C1070.9 111.2 1089.4 112.3 1095.7 117.8 C1102.0 123.4 1100.2 130.8 1100.2 137.9 C1100.2 144.9 1093.9 152.7 1095.7 160.1 C1097.6 167.5 1108.3 175.7 1111.3 182.3 C1114.2 189.0 1112.8 192.0 1113.5 200.1 C1114.2 208.3 1110.2 222.7 1115.7 231.2 C1121.3 239.8 1136.5 249.0 1146.9 251.3 C1157.2 253.5 1169.1 247.9 1178.0 244.6 C1186.8 241.2 1196.3 233.5 1200.0 231.2" fill="none" stroke="#a9d3fb" stroke-width="2.2" stroke-linecap="round"/>
<path d="M1165.0 244.6 C1170.6 242.7 1187.2 234.2 1198.4 233.5 C1209.5 232.7 1219.5 237.9 1231.7 240.1 C1243.9 242.4 1262.1 242.4 1271.7 246.8 C1281.4 251.3 1283.6 260.5 1289.5 266.8 C1295.4 273.1 1303.6 279.1 1307.3 284.6 C1311.0 290.1 1311.0 297.4 1311.7 299.9" fill="none" stroke="#a9d3fb" stroke-width="6.5" stroke-linecap="round"/>
<path d="M1115.7 231.2 C1120.9 234.6 1136.5 249.0 1146.9 251.3 C1157.2 253.5 1169.1 247.9 1178.0 244.6 C1186.8 241.2 1196.3 233.5 1200.0 231.2" fill="none" stroke="#a9d3fb" stroke-width="5" stroke-linecap="round"/>
<polygon points="144.5,0.0 153.4,0.0 151.2,6.7 145.6,6.2" fill="#a9d3fb" />
<polygon points="179.2,36.7 185.0,38.2 184.1,47.8 179.7,46.7" fill="#a9d3fb" />
<polygon points="162.3,71.6 185.7,64.0 184.1,69.4 171.2,74.3" fill="#a9d3fb" opacity=".8"/>
<polygon points="125.6,109.4 151.2,107.6 138.3,113.8 133.4,121.2 125.8,129.0" fill="#a9d3fb" opacity=".7"/>
<polygon points="494.5,0.0 507.8,4.0 495.6,15.6 488.9,21.1 480.0,16.0" fill="#a9d3fb" />
<ellipse cx="633.5" cy="13.3" rx="4.0" ry="2.8" fill="#a9d3fb" transform="rotate(-30 633.5 13.3)"/>
<ellipse cx="667.9" cy="155.6" rx="3.4" ry="2.4" fill="#a9d3fb" transform="rotate(-30 667.9 155.6)"/>
<ellipse cx="764.6" cy="126.7" rx="3.6" ry="2.5" fill="#a9d3fb" transform="rotate(-30 764.6 126.7)"/>
<ellipse cx="943.4" cy="115.2" rx="3.4" ry="2.4" fill="#a9d3fb" transform="rotate(-30 943.4 115.2)"/>
<ellipse cx="847.8" cy="182.8" rx="3.4" ry="2.4" fill="#a9d3fb" transform="rotate(-30 847.8 182.8)"/>
<ellipse cx="1079.0" cy="53.4" rx="2.6" ry="1.8" fill="#a9d3fb" transform="rotate(-30 1079.0 53.4)"/>
<ellipse cx="1278.4" cy="33.4" rx="4.4" ry="3.1" fill="#a9d3fb" transform="rotate(-30 1278.4 33.4)"/>
<ellipse cx="1263.9" cy="75.6" rx="4.2" ry="2.9" fill="#a9d3fb" transform="rotate(-30 1263.9 75.6)"/>
<ellipse cx="1378.5" cy="201.2" rx="4.2" ry="2.9" fill="#a9d3fb" transform="rotate(-30 1378.5 201.2)"/>
<ellipse cx="1543.0" cy="91.2" rx="4.6" ry="3.2" fill="#a9d3fb" transform="rotate(-30 1543.0 91.2)"/>
<ellipse cx="1060.1" cy="277.9" rx="4.2" ry="2.9" fill="#a9d3fb" transform="rotate(-30 1060.1 277.9)"/>
<ellipse cx="1374.0" cy="262.4" rx="3.8" ry="2.7" fill="#a9d3fb" transform="rotate(-30 1374.0 262.4)"/>
<ellipse cx="1356.2" cy="233.5" rx="3.6" ry="2.5" fill="#a9d3fb" transform="rotate(-30 1356.2 233.5)"/>
<ellipse cx="1347.3" cy="6.7" rx="3.2" ry="2.2" fill="#a9d3fb" transform="rotate(-30 1347.3 6.7)"/>
<ellipse cx="1227.3" cy="116.7" rx="3.0" ry="2.1" fill="#a9d3fb" transform="rotate(-30 1227.3 116.7)"/>
<ellipse cx="1200.6" cy="86.7" rx="2.8" ry="2.0" fill="#a9d3fb" transform="rotate(-30 1200.6 86.7)"/>
<ellipse cx="1483.0" cy="190.1" rx="3.4" ry="2.4" fill="#a9d3fb" transform="rotate(-30 1483.0 190.1)"/>
<g fill="none" stroke="#fff" stroke-width="1" stroke-linejoin="round" opacity=".95">
<path d="M622.1 159.8 C622.7 164.8 623.0 182.0 625.6 189.6 C628.1 197.3 632.8 199.0 637.6 205.7 C642.4 212.5 650.4 222.4 654.5 230.2 C658.7 238.0 659.9 245.5 662.5 252.4 C665.1 259.2 667.2 263.2 670.1 271.2 C673.0 279.2 678.0 295.6 679.6 300.5"/>
<path d="M840.2 228.1 C838.5 228.8 831.5 229.3 829.7 232.4 C827.9 235.5 830.8 242.0 829.5 246.7 C828.2 251.4 824.3 256.6 822.1 260.6 C819.9 264.6 818.7 267.7 816.2 270.9 C813.7 274.0 809.5 276.2 807.1 279.5 C804.7 282.9 802.6 288.9 801.7 290.8"/>
<path d="M1112.6 20.5 C1114.3 21.4 1119.1 23.4 1122.9 25.4 C1126.7 27.4 1131.3 30.0 1135.4 32.5 C1139.5 35.1 1142.9 37.8 1147.6 40.8 C1152.3 43.7 1158.5 47.5 1163.6 50.2 C1168.7 52.8 1173.3 54.5 1178.3 56.7 C1183.3 58.9 1191.2 62.4 1193.8 63.5"/>
<path d="M954.2 42.9 C949.0 44.6 932.8 48.5 922.9 53.1 C912.9 57.7 905.1 66.1 894.6 70.5 C884.1 74.8 869.5 73.9 859.7 79.2 C849.9 84.5 846.1 96.4 835.9 102.2 C825.8 108.0 809.4 110.9 798.8 114.1 C788.3 117.3 777.0 120.2 772.6 121.4"/>
<path d="M664.5 231.5 C663.0 232.7 658.3 235.6 655.4 238.6 C652.4 241.6 650.6 246.9 646.8 249.4 C643.1 251.9 637.3 254.0 632.9 253.9 C628.6 253.8 624.0 249.1 620.8 249.0 C617.6 248.8 617.1 250.8 613.5 252.8 C610.0 254.8 601.7 259.5 599.4 260.8"/>
<path d="M902.1 44.6 C908.1 44.3 927.7 42.2 937.9 42.8 C948.1 43.4 953.9 46.5 963.5 48.2 C973.1 49.9 985.2 51.5 995.3 53.0 C1005.5 54.5 1014.0 56.1 1024.5 57.3 C1035.0 58.5 1048.5 58.6 1058.3 60.2 C1068.0 61.7 1079.0 65.3 1083.1 66.3"/>
<path d="M621.1 81.5 C617.2 82.7 605.9 87.2 597.6 88.7 C589.4 90.2 578.6 90.9 571.6 90.6 C564.6 90.2 562.0 86.3 555.6 86.6 C549.3 86.8 540.7 91.2 533.5 92.2 C526.2 93.2 519.1 91.6 511.9 92.6 C504.6 93.6 493.7 97.1 490.0 98.0"/>
<path d="M454.4 8.9 C452.1 13.3 446.2 26.2 440.7 35.2 C435.2 44.2 427.4 53.1 421.4 62.8 C415.3 72.5 410.2 83.9 404.4 93.3 C398.6 102.6 391.6 110.4 386.6 118.7 C381.6 127.0 379.5 133.0 374.3 142.8 C369.1 152.6 358.4 171.8 355.2 177.6"/>
<path d="M672.5 60.6 C671.2 61.5 668.9 63.4 664.9 66.2 C660.9 69.1 652.4 74.0 648.4 77.6 C644.4 81.1 644.2 84.9 640.8 87.6 C637.5 90.3 633.4 90.6 628.3 93.9 C623.3 97.3 614.6 104.2 610.5 107.7 C606.3 111.2 604.4 113.6 603.2 114.7"/>
<path d="M614.1 32.1 C612.8 33.5 607.0 36.4 606.5 40.9 C606.1 45.3 610.8 54.0 611.4 58.9 C612.0 63.8 611.6 66.1 610.1 70.3 C608.5 74.5 602.4 79.5 601.9 84.2 C601.5 88.8 607.3 93.3 607.2 98.4 C607.2 103.4 602.4 111.6 601.4 114.2"/>
<path d="M754.1 125.5 C753.3 126.1 753.3 128.1 749.6 129.3 C745.9 130.4 736.3 132.4 731.9 132.3 C727.6 132.1 727.5 127.4 723.6 128.4 C719.8 129.3 713.5 136.3 708.6 137.9 C703.8 139.5 699.7 137.8 694.6 138.1 C689.4 138.4 680.4 139.4 677.6 139.7"/>
<path d="M616.0 7.2 C615.4 11.0 613.7 23.0 612.3 29.8 C611.0 36.5 609.5 42.7 607.9 47.9 C606.4 53.0 606.1 55.6 603.1 60.7 C600.0 65.8 592.4 73.6 589.6 78.4 C586.9 83.3 587.1 85.1 586.6 90.0 C586.2 95.0 586.9 105.3 587.0 108.4"/>
<path d="M752.0 294.1 C751.3 296.8 749.9 305.7 748.0 310.2 C746.1 314.7 742.5 315.5 740.6 321.2 C738.6 326.9 738.6 337.6 736.2 344.2 C733.8 350.9 727.8 355.3 726.4 360.9 C724.9 366.5 728.6 373.5 727.7 377.9 C726.7 382.2 721.7 385.3 720.5 386.7"/>
<path d="M915.4 266.3 C918.4 266.6 926.9 268.3 933.1 268.3 C939.3 268.3 948.0 265.9 952.8 266.1 C957.5 266.4 957.4 269.0 961.7 269.9 C966.0 270.9 971.6 269.8 978.5 271.9 C985.4 274.0 997.8 280.7 1003.1 282.3 C1008.5 283.9 1009.2 281.5 1010.4 281.3"/>
<path d="M680.9 89.3 C682.2 93.0 685.3 103.6 688.3 111.4 C691.3 119.2 694.3 128.5 698.9 136.0 C703.6 143.6 712.5 149.8 716.1 156.7 C719.8 163.5 717.9 169.2 721.1 177.1 C724.3 184.9 730.4 195.9 735.3 203.7 C740.3 211.5 748.2 220.5 750.7 223.9"/>
<path d="M1048.8 191.4 C1049.4 194.4 1050.8 204.2 1052.1 209.5 C1053.3 214.9 1054.9 217.2 1056.5 223.3 C1058.0 229.4 1060.5 239.7 1061.2 246.1 C1061.9 252.5 1059.4 255.2 1060.5 261.6 C1061.7 268.0 1065.3 278.4 1068.1 284.4 C1070.8 290.4 1075.6 295.4 1077.2 297.6"/>
<path d="M1118.6 246.2 C1121.9 248.9 1132.3 257.4 1138.1 262.2 C1144.0 267.1 1148.8 270.8 1153.6 275.3 C1158.4 279.9 1163.6 284.6 1167.2 289.6 C1170.7 294.5 1171.5 300.7 1175.0 305.1 C1178.5 309.5 1182.4 311.7 1188.2 315.9 C1194.0 320.1 1206.4 327.8 1210.0 330.2"/>
<path d="M505.0 25.2 C503.0 26.1 496.1 28.7 492.8 30.4 C489.5 32.1 488.1 34.2 485.1 35.5 C482.1 36.8 478.9 37.8 474.7 38.2 C470.5 38.6 464.7 36.3 460.0 37.9 C455.3 39.6 451.0 46.0 446.5 47.9 C441.9 49.7 435.1 48.9 432.8 49.0"/>
<path d="M1009.9 292.3 C1012.2 291.8 1018.7 288.4 1023.9 289.2 C1029.1 290.0 1034.6 295.5 1041.2 296.9 C1047.8 298.4 1057.5 297.3 1063.5 298.1 C1069.4 298.8 1071.8 300.3 1076.9 301.4 C1081.9 302.6 1088.7 303.7 1093.9 305.0 C1099.2 306.3 1106.1 308.5 1108.5 309.2"/>
<path d="M1181.4 124.7 C1179.8 125.9 1175.2 129.0 1171.6 132.1 C1168.1 135.2 1162.9 140.5 1160.1 143.1 C1157.2 145.8 1158.4 144.6 1154.6 148.0 C1150.7 151.4 1140.1 159.9 1136.9 163.8 C1133.7 167.7 1138.1 168.1 1135.5 171.3 C1132.8 174.5 1123.5 181.1 1121.1 183.1"/>
<path d="M579.6 72.9 C583.4 76.4 596.2 88.5 602.5 93.9 C608.9 99.4 611.8 100.9 617.8 105.3 C623.7 109.8 631.2 116.8 638.1 120.7 C645.0 124.6 652.9 125.4 659.0 128.7 C665.1 131.9 668.3 135.3 674.5 140.1 C680.7 144.9 692.7 154.6 696.3 157.5"/>
<path d="M567.3 110.3 C570.4 113.6 580.1 122.5 585.6 130.1 C591.1 137.8 594.8 148.4 600.4 156.3 C605.9 164.1 613.8 169.6 618.8 177.3 C623.8 185.0 625.2 195.1 630.3 202.7 C635.3 210.4 643.5 215.0 648.9 223.3 C654.3 231.6 660.3 247.8 662.6 252.7"/>
<path d="M797.0 68.1 C800.6 69.9 812.8 74.1 818.6 78.9 C824.3 83.7 826.2 90.3 831.7 97.0 C837.2 103.8 843.8 112.4 851.5 119.5 C859.2 126.5 871.3 133.2 878.0 139.4 C884.7 145.7 886.1 151.9 891.7 157.1 C897.4 162.3 908.7 168.4 912.1 170.6"/>
<path d="M991.9 16.1 C997.1 18.0 1014.1 24.9 1023.0 27.7 C1032.0 30.5 1036.4 30.2 1045.5 32.8 C1054.7 35.3 1068.3 39.5 1078.0 42.7 C1087.8 45.9 1093.7 49.5 1104.0 52.2 C1114.3 54.8 1129.7 56.6 1139.7 58.7 C1149.6 60.7 1159.8 63.5 1163.8 64.4"/>
<path d="M652.9 198.9 C657.8 201.1 672.7 207.7 682.0 212.3 C691.4 217.0 700.6 222.7 709.1 226.8 C717.7 230.8 723.8 233.0 733.2 236.6 C742.6 240.2 756.0 244.8 765.6 248.5 C775.1 252.2 780.4 255.3 790.5 258.6 C800.6 261.9 820.3 266.8 826.2 268.4"/>
<path d="M849.7 28.0 C849.5 30.2 848.5 35.3 848.5 41.3 C848.5 47.3 850.2 56.7 849.6 64.0 C849.1 71.2 845.2 79.6 845.3 84.8 C845.5 90.0 849.1 90.5 850.4 95.3 C851.8 100.2 854.0 106.7 853.6 113.7 C853.1 120.8 848.8 133.7 847.9 137.7"/>
<path d="M892.2 164.3 C890.2 168.3 882.8 181.5 880.5 188.2 C878.1 195.0 880.1 199.4 878.1 205.0 C876.1 210.6 872.6 215.8 868.7 221.7 C864.8 227.6 857.6 234.8 854.7 240.4 C851.9 246.0 854.2 249.6 851.6 255.5 C848.9 261.4 840.8 272.6 838.6 276.0"/>
<path d="M1024.8 106.0 C1026.1 109.0 1030.1 118.8 1032.6 123.6 C1035.2 128.3 1037.1 130.2 1039.9 134.6 C1042.8 139.0 1045.2 143.5 1049.6 149.8 C1053.9 156.2 1062.7 167.0 1066.1 172.8 C1069.5 178.5 1067.2 178.6 1069.9 184.2 C1072.5 189.8 1079.9 202.8 1081.9 206.5"/>
<path d="M1059.0 226.5 C1058.5 229.3 1058.0 238.7 1056.4 243.1 C1054.8 247.5 1050.2 249.4 1049.3 252.8 C1048.5 256.2 1051.6 258.1 1051.3 263.5 C1051.1 268.8 1048.7 280.1 1047.7 284.9 C1046.7 289.8 1047.0 289.0 1045.4 292.7 C1043.7 296.5 1038.9 305.1 1037.6 307.6"/>
<path d="M925.2 302.5 C923.2 305.2 917.7 313.9 913.2 319.1 C908.6 324.2 900.8 329.3 897.8 333.6 C894.8 338.0 897.3 340.8 895.0 345.0 C892.7 349.2 888.1 354.1 884.2 358.8 C880.3 363.6 875.5 368.9 871.5 373.7 C867.6 378.5 862.4 385.2 860.5 387.5"/>
<path d="M934.8 128.5 C933.6 134.6 930.8 154.1 927.2 165.1 C923.6 176.0 916.3 184.5 913.1 194.1 C909.9 203.8 909.7 211.5 908.3 223.0 C906.9 234.5 906.7 251.3 904.7 263.2 C902.6 275.1 897.8 285.0 895.8 294.3 C893.9 303.5 893.4 314.5 892.9 318.6"/>
<path d="M1094.7 180.8 C1090.5 182.8 1077.8 190.6 1069.4 192.8 C1060.9 194.9 1052.7 192.6 1043.9 193.9 C1035.2 195.2 1026.8 199.1 1016.9 200.4 C1006.9 201.8 994.2 200.5 984.4 202.1 C974.6 203.6 966.6 206.9 958.1 209.7 C949.5 212.5 937.1 217.3 932.9 218.8"/>
<path d="M969.5 161.6 C971.3 165.6 978.3 176.5 980.1 185.4 C981.9 194.3 978.5 206.7 980.4 214.8 C982.4 222.8 989.6 226.3 991.9 233.8 C994.3 241.4 992.7 252.0 994.5 259.9 C996.4 267.8 1001.5 273.6 1002.9 281.2 C1004.3 288.8 1003.0 301.4 1003.0 305.5"/>
<path d="M1032.3 32.6 C1032.9 35.0 1035.8 42.3 1036.1 47.0 C1036.4 51.8 1033.9 55.5 1034.1 60.9 C1034.4 66.2 1036.7 74.5 1037.4 79.1 C1038.0 83.8 1037.0 84.2 1038.1 88.9 C1039.2 93.6 1042.1 102.3 1043.8 107.2 C1045.5 112.1 1047.5 116.3 1048.2 118.1"/>
<path d="M743.7 112.9 C749.5 113.4 767.2 115.0 778.7 116.3 C790.1 117.6 802.3 120.1 812.6 120.8 C822.8 121.5 829.0 119.8 840.0 120.6 C851.0 121.4 866.5 124.0 878.4 125.6 C890.4 127.1 900.3 129.2 911.5 130.2 C922.6 131.1 939.7 131.1 945.3 131.2"/>
<path d="M628.4 71.0 C625.6 74.7 617.6 89.0 611.2 93.3 C604.7 97.7 597.6 94.2 589.7 97.2 C581.7 100.3 571.0 107.1 563.4 111.7 C555.9 116.3 551.1 119.2 544.2 124.7 C537.4 130.2 528.1 139.7 522.5 144.5 C516.8 149.3 512.3 152.0 510.3 153.5"/>
<path d="M1184.5 137.9 C1179.2 141.9 1161.1 155.7 1152.6 161.8 C1144.0 168.0 1141.9 168.4 1133.4 174.8 C1124.8 181.3 1111.1 194.1 1101.2 200.6 C1091.3 207.2 1082.3 208.4 1073.8 214.2 C1065.3 220.0 1057.6 229.6 1050.4 235.3 C1043.2 241.0 1034.0 246.2 1030.7 248.4"/>
<path d="M1006.5 223.5 C1002.3 225.2 988.3 229.5 981.5 233.5 C974.6 237.4 972.1 243.6 965.2 247.3 C958.3 251.0 946.9 251.5 940.2 255.5 C933.4 259.5 930.7 267.0 924.8 271.2 C918.8 275.3 911.8 277.3 904.7 280.3 C897.7 283.3 886.3 287.8 882.6 289.3"/>
<path d="M981.9 -6.7 C981.6 -0.8 979.5 17.8 980.4 28.3 C981.3 38.8 985.3 47.7 987.3 56.2 C989.3 64.8 991.1 70.5 992.5 79.5 C993.9 88.4 995.5 100.8 995.6 109.9 C995.6 118.9 993.2 125.2 992.8 133.8 C992.4 142.4 993.0 157.0 993.1 161.6"/>
<path d="M1162.1 25.1 C1162.0 26.1 1161.8 27.3 1161.0 31.4 C1160.3 35.4 1157.8 45.6 1157.5 49.6 C1157.1 53.6 1159.9 50.9 1159.1 55.5 C1158.3 60.2 1154.3 72.4 1152.8 77.4 C1151.3 82.4 1150.6 81.8 1150.0 85.6 C1149.4 89.4 1149.4 97.7 1149.3 100.1"/>
<path d="M896.1 238.2 C896.9 240.6 901.8 246.5 901.0 252.8 C900.2 259.0 892.9 269.6 891.4 275.6 C889.8 281.7 892.0 285.3 891.5 289.2 C891.1 293.1 889.3 294.6 888.8 299.2 C888.3 303.9 888.2 312.1 888.6 317.2 C888.9 322.2 890.5 327.5 890.9 329.6"/>
<path d="M1018.1 265.1 C1020.6 269.4 1028.9 283.9 1033.2 291.2 C1037.6 298.5 1041.0 301.7 1044.2 308.6 C1047.4 315.5 1049.1 325.6 1052.6 332.5 C1056.2 339.4 1062.3 342.8 1065.7 350.0 C1069.1 357.1 1070.5 367.5 1073.1 375.3 C1075.7 383.2 1080.1 393.7 1081.5 397.3"/>
<path d="M996.0 123.8 C995.5 127.4 996.2 138.5 992.9 145.2 C989.7 152.0 981.4 157.4 976.4 164.3 C971.5 171.2 966.3 178.4 963.5 186.6 C960.7 194.9 962.3 205.3 959.7 213.8 C957.2 222.4 952.5 230.5 948.3 238.0 C944.2 245.5 937.1 255.5 934.9 259.0"/>
<path d="M851.6 123.8 C846.2 124.6 829.4 125.7 819.2 128.1 C809.1 130.5 801.8 135.7 790.8 138.3 C779.8 140.9 764.7 143.2 753.1 143.5 C741.5 143.8 730.9 139.5 721.4 140.1 C711.9 140.8 705.7 144.6 696.1 147.2 C686.4 149.8 668.8 154.3 663.4 155.7"/>
<path d="M469.3 230.9 C472.1 232.7 482.4 237.3 486.3 241.6 C490.2 246.0 489.1 252.3 492.9 257.1 C496.6 261.8 504.5 264.3 508.9 270.2 C513.4 276.1 514.5 285.7 519.4 292.4 C524.2 299.0 532.1 304.5 537.8 309.8 C543.5 315.1 551.0 321.7 553.6 324.1"/>
<path d="M723.4 42.1 C725.1 45.4 729.9 56.8 733.3 62.4 C736.8 68.1 739.5 70.1 744.2 75.8 C748.9 81.5 757.9 91.1 761.8 96.5 C765.7 101.9 763.8 103.7 767.5 108.2 C771.2 112.6 780.6 116.9 784.2 123.1 C787.8 129.4 788.2 141.9 789.0 145.6"/>
<path d="M849.9 42.7 C852.7 43.6 861.4 48.2 866.6 48.2 C871.8 48.3 877.6 43.5 881.2 43.0 C884.7 42.5 883.9 43.8 887.8 45.1 C891.8 46.4 900.2 49.0 904.9 50.7 C909.5 52.4 911.3 54.4 915.6 55.1 C919.9 55.8 928.1 55.1 930.6 55.1"/>
<path d="M623.3 246.0 C625.0 249.0 630.4 258.2 633.3 264.0 C636.1 269.8 639.5 276.6 640.2 280.9 C640.9 285.1 636.5 284.5 637.6 289.7 C638.7 294.8 645.0 305.4 646.8 311.8 C648.6 318.1 647.4 323.4 648.4 327.7 C649.4 332.1 652.2 336.1 652.9 337.8"/>
<path d="M572.3 -4.9 C569.7 0.5 561.1 18.1 556.5 27.6 C551.8 37.1 549.4 43.6 544.5 52.2 C539.6 60.8 532.6 70.6 527.1 79.2 C521.5 87.8 515.2 93.6 511.2 103.7 C507.2 113.8 506.7 130.0 502.9 139.7 C499.0 149.3 490.5 158.0 488.1 161.7"/>
<path d="M712.0 132.1 C708.2 134.7 695.3 142.6 688.9 147.7 C682.4 152.9 677.8 158.3 673.1 162.9 C668.4 167.6 665.7 173.1 660.5 175.7 C655.2 178.3 647.6 175.2 641.6 178.6 C635.6 181.9 630.3 191.3 624.5 195.7 C618.7 200.1 609.8 203.4 606.9 204.9"/>
<path d="M977.9 281.9 C982.8 284.0 998.8 292.3 1007.4 294.4 C1015.9 296.6 1021.0 293.5 1029.2 294.9 C1037.3 296.3 1048.5 299.1 1056.2 302.8 C1063.9 306.6 1068.0 314.5 1075.1 317.4 C1082.2 320.2 1089.7 317.0 1098.7 319.9 C1107.8 322.8 1124.3 332.3 1129.4 334.8"/>
<path d="M678.7 120.4 C679.8 120.8 682.6 121.2 685.3 123.0 C688.0 124.9 691.3 127.4 694.8 131.6 C698.3 135.9 702.5 144.1 706.3 148.4 C710.1 152.7 714.4 155.3 717.7 157.4 C720.9 159.5 723.9 157.3 725.7 161.3 C727.6 165.2 728.2 177.7 728.7 180.9"/>
<path d="M493.2 71.1 C492.8 75.3 491.3 89.6 491.0 96.4 C490.6 103.3 490.7 106.7 490.9 112.1 C491.1 117.6 491.0 124.3 492.1 129.2 C493.3 134.2 497.7 138.2 498.0 142.0 C498.2 145.9 493.1 147.7 493.5 152.3 C494.0 156.9 499.4 166.9 500.6 169.8"/>
<path d="M588.7 253.6 C586.0 253.6 577.0 251.4 572.6 253.6 C568.2 255.8 566.0 265.2 562.4 266.7 C558.8 268.1 554.9 262.4 551.0 262.4 C547.2 262.4 542.7 263.9 539.4 266.6 C536.1 269.3 534.7 277.2 531.2 278.8 C527.6 280.3 520.3 276.3 518.1 275.8"/>
<path d="M1152.4 313.5 C1150.0 313.3 1143.3 313.3 1138.0 312.0 C1132.7 310.8 1126.1 305.8 1120.6 306.2 C1115.1 306.6 1109.7 313.2 1105.2 314.5 C1100.8 315.7 1098.9 313.7 1093.9 313.7 C1088.8 313.6 1080.8 314.1 1075.0 314.3 C1069.2 314.6 1061.7 315.1 1059.1 315.3"/>
<path d="M1076.5 50.9 C1075.2 57.1 1072.6 77.7 1068.4 87.9 C1064.2 98.2 1055.6 103.8 1051.2 112.6 C1046.8 121.4 1044.0 130.5 1042.3 140.8 C1040.5 151.2 1042.7 164.5 1040.7 174.8 C1038.8 185.0 1035.1 191.3 1030.4 202.2 C1025.7 213.1 1015.5 233.8 1012.6 240.1"/>
<path d="M1046.1 303.2 C1043.7 306.9 1036.7 318.3 1031.6 325.3 C1026.5 332.3 1019.9 339.2 1015.4 345.5 C1011.0 351.8 1008.6 357.4 1004.9 363.1 C1001.2 368.8 997.2 373.5 993.2 379.8 C989.2 386.2 983.9 394.0 980.8 401.2 C977.7 408.4 975.8 419.5 974.8 423.2"/>
<path d="M1093.0 253.5 C1096.7 258.8 1108.7 275.9 1115.6 285.3 C1122.5 294.7 1128.0 301.2 1134.4 310.1 C1140.8 319.1 1147.2 330.8 1154.2 339.1 C1161.1 347.3 1169.0 351.5 1176.2 359.9 C1183.4 368.3 1189.7 380.9 1197.4 389.5 C1205.0 398.2 1218.1 408.1 1222.3 411.8"/>
<path d="M779.1 190.5 C781.0 191.3 784.9 193.8 790.6 195.5 C796.3 197.3 806.3 200.7 813.3 201.1 C820.3 201.5 825.9 196.5 832.6 197.8 C839.4 199.0 847.3 206.2 853.9 208.7 C860.5 211.3 865.4 212.3 872.2 212.9 C878.9 213.4 890.7 212.3 894.4 212.1"/>
<path d="M670.0 155.5 C670.8 157.2 673.9 160.8 675.1 165.9 C676.4 171.0 675.3 180.0 677.3 185.9 C679.3 191.8 685.4 195.5 687.1 201.4 C688.8 207.2 686.2 215.2 687.6 221.0 C689.0 226.7 692.7 228.9 695.4 235.8 C698.2 242.7 702.4 258.0 703.8 262.5"/>
<path d="M850.2 225.4 C845.6 227.4 831.1 232.4 822.6 237.3 C814.1 242.3 808.0 248.8 799.2 255.1 C790.4 261.4 779.2 270.6 769.8 275.4 C760.4 280.1 750.4 279.0 742.6 283.5 C734.7 288.1 731.4 298.0 722.6 302.8 C713.8 307.6 695.3 310.7 689.8 312.3"/>
<path d="M704.7 -8.7 C703.0 -7.4 698.3 -3.9 694.7 -1.1 C691.2 1.7 687.8 6.5 683.6 8.3 C679.3 10.2 672.8 7.5 669.3 9.9 C665.7 12.3 667.1 20.1 662.4 23.0 C657.6 26.0 645.5 24.8 641.0 27.7 C636.6 30.6 636.3 38.3 635.4 40.4"/>
<path d="M494.1 -3.7 C493.4 -1.1 489.8 5.3 489.7 12.0 C489.6 18.7 493.3 29.9 493.5 36.5 C493.7 43.1 491.3 45.2 490.9 51.4 C490.5 57.6 490.9 66.2 491.1 73.7 C491.2 81.2 490.5 89.9 491.7 96.4 C492.8 102.9 496.9 109.9 497.9 112.6"/>
<path d="M505.2 62.2 C506.4 67.8 511.6 86.0 512.6 95.8 C513.5 105.6 511.1 110.7 511.0 121.1 C510.8 131.4 511.3 147.4 511.6 157.9 C511.9 168.4 511.4 175.0 512.9 184.1 C514.4 193.1 518.7 201.6 520.7 212.2 C522.7 222.8 524.4 241.7 525.1 247.6"/>
<path d="M1091.1 224.3 C1092.2 226.3 1095.1 233.6 1097.8 236.7 C1100.5 239.8 1102.9 242.0 1107.2 243.0 C1111.5 244.0 1119.3 241.2 1123.5 242.8 C1127.8 244.3 1130.6 250.0 1132.4 252.3 C1134.3 254.7 1133.0 254.6 1134.6 257.0 C1136.2 259.5 1140.7 265.3 1142.0 267.0"/>
<path d="M731.1 261.4 C729.1 262.1 722.6 263.2 719.1 265.6 C715.6 268.0 713.1 274.1 710.1 275.8 C707.1 277.4 704.4 274.1 701.1 275.6 C697.7 277.1 693.0 282.5 690.1 284.6 C687.2 286.7 686.2 286.8 683.7 288.3 C681.2 289.8 676.7 292.8 675.2 293.7"/>
<path d="M948.8 185.4 C953.0 187.9 966.3 196.7 974.2 200.7 C982.1 204.7 988.0 204.2 996.1 209.4 C1004.2 214.6 1015.1 226.2 1023.0 231.9 C1030.9 237.6 1036.5 238.7 1043.5 243.5 C1050.4 248.4 1056.5 257.0 1064.7 261.2 C1072.8 265.4 1087.7 267.6 1092.3 268.8"/>
<path d="M1061.1 302.3 C1064.1 307.5 1073.3 322.9 1078.9 333.4 C1084.5 343.8 1090.4 355.1 1094.5 365.2 C1098.7 375.3 1098.4 384.5 1103.7 394.1 C1109.1 403.7 1120.7 412.6 1126.6 423.0 C1132.5 433.4 1134.5 446.4 1139.0 456.3 C1143.4 466.1 1151.1 477.7 1153.5 482.0"/>
<path d="M885.5 254.2 C886.4 255.9 887.3 262.4 890.7 264.8 C894.2 267.2 901.9 266.2 906.4 268.6 C910.8 270.9 914.1 276.8 917.2 278.8 C920.2 280.8 922.9 278.4 924.6 280.6 C926.2 282.7 923.7 289.2 927.0 291.7 C930.2 294.2 941.2 295.0 944.0 295.7"/>
<path d="M804.5 170.4 C806.8 173.7 812.8 183.8 818.5 190.6 C824.3 197.4 832.9 205.0 839.2 210.9 C845.5 216.8 850.4 220.5 856.4 226.2 C862.3 231.8 868.3 239.2 875.2 244.9 C882.1 250.6 891.6 254.1 897.6 260.4 C903.5 266.7 908.7 279.0 911.0 282.7"/>
<path d="M1232.9 220.2 C1234.9 220.3 1242.1 220.8 1244.7 221.1 C1247.3 221.3 1246.7 220.2 1248.5 221.5 C1250.4 222.8 1252.1 227.2 1255.8 228.9 C1259.6 230.7 1267.0 230.0 1271.0 231.9 C1275.0 233.8 1277.6 238.5 1279.6 240.4 C1281.6 242.3 1282.4 242.7 1283.0 243.2"/>
<path d="M1484.4 152.6 C1485.2 156.1 1489.0 167.5 1488.8 173.9 C1488.5 180.2 1485.3 185.5 1482.7 190.6 C1480.0 195.6 1473.9 200.1 1472.8 204.2 C1471.6 208.2 1476.3 209.3 1475.7 215.0 C1475.1 220.6 1471.1 232.0 1469.2 238.1 C1467.4 244.2 1465.2 249.3 1464.4 251.5"/>
<path d="M1219.1 250.5 C1221.5 251.9 1229.3 255.5 1233.4 258.8 C1237.4 262.0 1239.8 266.4 1243.4 270.0 C1247.0 273.5 1251.9 276.0 1255.1 280.2 C1258.4 284.5 1260.3 291.8 1263.1 295.4 C1266.0 299.1 1269.2 297.9 1272.1 302.0 C1275.0 306.1 1279.1 316.9 1280.5 319.9"/>
<path d="M1239.3 266.3 C1238.4 269.0 1234.8 274.5 1234.2 282.1 C1233.6 289.7 1234.9 304.0 1235.7 311.8 C1236.5 319.6 1239.7 321.0 1239.0 329.0 C1238.2 336.9 1231.4 351.4 1231.0 359.4 C1230.6 367.4 1235.6 370.9 1236.5 377.0 C1237.3 383.2 1236.2 393.1 1236.1 396.3"/>
<path d="M1343.6 248.3 C1344.3 249.2 1349.0 251.1 1347.7 253.6 C1346.3 256.1 1336.8 259.4 1335.4 263.2 C1334.1 267.1 1340.2 271.6 1339.8 276.5 C1339.4 281.4 1334.5 289.5 1333.0 292.7 C1331.6 295.9 1331.9 293.9 1331.1 295.6 C1330.4 297.3 1329.0 301.9 1328.6 303.2"/>
<path d="M1259.5 251.0 C1261.5 251.4 1268.6 251.7 1271.6 253.3 C1274.6 254.9 1275.2 258.6 1277.5 260.6 C1279.8 262.7 1282.8 264.3 1285.1 265.7 C1287.4 267.1 1289.8 267.5 1291.3 269.1 C1292.9 270.6 1291.7 273.3 1294.5 274.8 C1297.2 276.4 1305.6 277.7 1307.8 278.3"/>
<path d="M1242.7 199.5 C1244.9 199.7 1252.2 200.4 1255.5 200.8 C1258.7 201.2 1258.5 200.9 1262.2 202.0 C1266.0 203.2 1272.8 205.9 1277.8 207.6 C1282.9 209.3 1287.8 210.2 1292.6 212.2 C1297.5 214.1 1302.7 217.3 1307.0 219.4 C1311.4 221.5 1316.6 223.8 1318.5 224.6"/>
<path d="M1342.7 201.0 C1342.4 203.0 1339.6 210.2 1341.0 213.0 C1342.4 215.7 1348.7 216.4 1351.1 217.6 C1353.4 218.8 1352.4 218.5 1354.9 220.3 C1357.3 222.0 1364.1 224.3 1365.7 228.3 C1367.4 232.3 1364.4 241.2 1364.7 244.3 C1365.0 247.4 1367.0 246.5 1367.5 246.9"/>
<path d="M1320.8 166.8 C1318.4 167.7 1309.9 170.7 1306.6 172.5 C1303.3 174.4 1305.7 176.9 1301.1 177.9 C1296.5 179.0 1284.4 178.6 1278.7 179.0 C1273.1 179.5 1271.5 179.9 1267.2 180.4 C1262.9 180.9 1258.0 180.8 1253.0 182.2 C1248.0 183.6 1239.8 187.7 1237.2 188.8"/>
<path d="M1191.6 299.0 C1196.3 300.3 1211.2 304.9 1219.7 306.6 C1228.2 308.4 1235.2 309.2 1242.5 309.5 C1249.9 309.8 1256.3 307.4 1263.7 308.4 C1271.1 309.5 1278.6 314.9 1286.7 315.8 C1294.8 316.7 1305.7 312.6 1312.2 313.9 C1318.7 315.2 1323.6 322.1 1325.8 323.7"/>
<path d="M1474.2 199.8 C1472.8 201.3 1469.6 203.8 1466.0 208.6 C1462.4 213.5 1456.7 223.8 1452.7 228.9 C1448.7 234.0 1445.5 235.7 1441.9 239.5 C1438.4 243.2 1434.4 246.6 1431.6 251.5 C1428.9 256.3 1427.5 264.0 1425.3 268.6 C1423.0 273.2 1419.2 277.3 1418.0 279.1"/>
<path d="M1233.8 185.1 C1235.2 184.8 1239.0 183.0 1242.1 183.0 C1245.2 183.0 1248.0 184.3 1252.4 185.2 C1256.7 186.0 1262.9 186.7 1268.1 188.1 C1273.3 189.5 1280.0 192.4 1283.7 193.4 C1287.3 194.4 1287.5 193.2 1290.0 194.2 C1292.5 195.2 1297.2 198.6 1298.7 199.4"/>
<path d="M1413.8 186.4 C1412.4 188.6 1407.5 195.6 1405.5 199.6 C1403.5 203.6 1404.7 206.8 1401.9 210.2 C1399.0 213.6 1391.4 217.5 1388.4 220.0 C1385.4 222.6 1386.1 223.0 1384.1 225.6 C1382.0 228.2 1379.4 232.4 1376.2 235.6 C1373.1 238.8 1367.0 243.1 1365.1 244.6"/>
<path d="M1385.3 258.9 C1383.2 259.7 1377.6 262.7 1372.7 263.7 C1367.8 264.6 1359.4 265.0 1356.1 264.6 C1352.8 264.2 1355.7 259.7 1352.9 261.0 C1350.0 262.3 1343.6 270.0 1339.0 272.2 C1334.4 274.4 1328.2 274.1 1325.1 274.3 C1322.0 274.4 1321.2 273.3 1320.4 273.0"/>
<path d="M1211.8 160.4 C1210.7 161.3 1210.0 162.6 1205.3 166.0 C1200.6 169.3 1188.8 177.7 1183.6 180.4 C1178.4 183.1 1176.6 180.8 1174.0 182.2 C1171.3 183.6 1172.5 185.3 1167.9 188.7 C1163.3 192.0 1151.8 199.8 1146.4 202.2 C1141.0 204.6 1137.2 202.9 1135.4 203.0"/>
<path d="M1477.1 160.7 C1475.4 162.0 1470.9 166.4 1466.8 168.3 C1462.8 170.1 1457.4 170.0 1452.7 171.8 C1448.1 173.6 1442.4 177.4 1439.0 179.2 C1435.7 180.9 1436.0 182.3 1432.7 182.4 C1429.3 182.5 1424.2 179.2 1418.9 179.7 C1413.5 180.1 1403.5 184.2 1400.5 185.1"/>
<path d="M1217.4 300.2 C1213.7 301.1 1201.5 303.6 1195.1 306.0 C1188.6 308.4 1186.0 311.0 1178.8 314.6 C1171.5 318.2 1159.7 324.6 1151.5 327.9 C1143.3 331.1 1136.6 332.4 1129.6 334.1 C1122.6 335.8 1116.8 335.9 1109.6 338.0 C1102.4 340.1 1090.3 345.3 1086.5 346.8"/>
<path d="M1296.1 181.8 C1295.3 184.2 1292.9 190.6 1291.3 196.1 C1289.6 201.5 1289.5 208.9 1286.2 214.5 C1282.8 220.1 1275.1 224.5 1271.1 229.6 C1267.2 234.6 1264.6 239.5 1262.5 244.7 C1260.5 249.9 1261.1 255.8 1258.8 260.9 C1256.5 265.9 1250.4 272.6 1248.7 274.9"/>
<path d="M1327.8 264.2 C1327.9 268.6 1327.3 284.0 1328.5 290.9 C1329.8 297.8 1333.6 299.2 1335.5 305.7 C1337.4 312.2 1338.6 323.4 1339.7 329.8 C1340.8 336.3 1341.1 339.4 1342.2 344.5 C1343.2 349.6 1344.4 353.7 1345.9 360.4 C1347.5 367.1 1350.6 380.6 1351.6 384.6"/>
<path d="M1328.0 210.6 C1328.1 213.6 1328.4 222.4 1328.9 228.5 C1329.4 234.5 1330.3 241.7 1331.1 246.7 C1331.9 251.8 1332.5 252.2 1333.6 258.6 C1334.8 265.0 1336.6 277.5 1338.1 285.2 C1339.6 292.8 1341.5 299.5 1342.8 304.5 C1344.1 309.6 1345.3 313.5 1345.8 315.3"/>
<path d="M1294.4 143.3 C1293.0 144.8 1289.5 149.5 1286.1 152.6 C1282.7 155.7 1279.2 158.0 1274.0 161.8 C1268.9 165.7 1260.1 173.0 1255.2 175.7 C1250.3 178.5 1246.8 175.7 1244.5 178.2 C1242.1 180.7 1243.7 187.2 1241.0 190.7 C1238.3 194.1 1230.6 197.3 1228.5 198.6"/>
<path d="M1240.0 253.1 C1242.3 254.3 1248.8 258.8 1253.5 260.3 C1258.3 261.9 1263.3 263.0 1268.6 262.4 C1273.9 261.8 1280.7 256.5 1285.2 256.8 C1289.8 257.0 1290.3 262.9 1296.1 263.9 C1301.8 264.9 1313.8 262.6 1319.7 262.6 C1325.7 262.5 1329.8 263.4 1331.8 263.6"/>
<path d="M1445.1 206.9 C1445.9 210.1 1450.6 221.2 1450.4 226.5 C1450.2 231.8 1445.4 232.4 1444.0 238.6 C1442.5 244.8 1441.7 257.2 1441.5 263.6 C1441.4 269.9 1442.8 271.0 1443.0 276.8 C1443.2 282.6 1443.2 292.2 1442.6 298.2 C1441.9 304.2 1439.8 310.5 1439.3 312.9"/>
<path d="M1426.0 269.9 C1426.3 270.6 1426.3 272.2 1428.3 274.2 C1430.2 276.2 1436.3 280.0 1437.6 282.0 C1438.8 284.0 1434.9 283.5 1435.8 286.3 C1436.6 289.1 1440.6 294.9 1442.8 298.8 C1444.9 302.8 1446.2 307.6 1448.5 309.9 C1450.9 312.1 1455.6 312.1 1457.0 312.5"/>
<path d="M1386.4 234.2 C1386.0 236.2 1385.3 241.4 1383.8 245.9 C1382.4 250.5 1379.5 257.0 1377.7 261.7 C1375.8 266.4 1375.0 269.0 1372.6 274.2 C1370.2 279.3 1365.4 287.4 1363.3 292.6 C1361.2 297.7 1362.1 300.5 1359.9 304.8 C1357.6 309.2 1351.4 316.5 1349.7 318.9"/>
<path d="M1350.1 234.1 C1352.3 233.5 1359.8 230.7 1363.6 230.2 C1367.5 229.7 1368.7 231.0 1373.0 231.2 C1377.2 231.4 1386.0 231.7 1389.2 231.3 C1392.4 230.9 1389.0 230.0 1392.1 229.0 C1395.2 228.0 1403.0 225.3 1408.0 225.1 C1413.0 224.9 1419.7 227.4 1422.0 227.8"/>
<path d="M119.4 133.8 C125.5 133.3 144.9 129.7 155.9 131.2 C166.9 132.6 176.1 140.4 185.6 142.4 C195.1 144.4 206.8 144.8 213.0 143.2 C219.1 141.7 224.6 138.4 222.5 133.0 C220.4 127.6 202.0 117.5 200.2 110.7 C198.5 103.9 212.9 98.4 212.0 92.0 C211.0 85.6 189.0 84.1 194.6 72.2 C200.2 60.2 231.9 30.0 245.6 20.3 C259.4 10.6 271.9 15.0 277.1 14.0" stroke-width="1.2"/>
<path d="M213.9 92.1 C215.4 95.1 215.9 105.1 223.1 110.4 C230.3 115.6 248.2 118.2 257.2 123.4 C266.2 128.6 266.2 137.5 277.3 141.5 C288.3 145.6 306.7 147.8 323.5 147.7 C340.3 147.7 365.5 144.3 378.2 141.2 C390.9 138.2 396.2 131.5 399.8 129.6" stroke-width="1.2"/>
<path d="M165.4 236.9 C171.4 235.1 189.3 232.7 201.1 225.9 C212.9 219.0 223.2 200.4 236.3 196.0 C249.3 191.6 263.2 202.6 279.4 199.4 C295.5 196.2 313.0 186.1 332.9 176.7 C352.9 167.4 388.0 148.8 399.0 143.2" stroke-width="1.2"/>
<path d="M212.2 256.4 C217.6 258.3 235.8 271.3 244.3 267.9 C252.8 264.6 254.8 243.3 263.1 236.2 C271.5 229.2 289.3 227.2 294.5 225.4" stroke-width="1.2"/>
<path d="M106.0 286.4 C111.3 283.2 125.5 271.6 137.6 267.3 C149.8 263.1 168.4 264.9 179.0 260.9 C189.6 256.8 197.7 245.9 201.4 242.9" stroke-width="1.2"/>
</g>
<g fill="none" stroke="#9aa79c" stroke-width=".7" stroke-dasharray="1.5 1.5" opacity=".8">
<path d="M133.4 51.1 C132.3 56.7 133.0 73.7 126.7 84.5 C120.4 95.2 105.6 106.7 95.6 115.6 C85.6 124.5 72.3 131.2 66.7 137.9 C61.1 144.5 60.8 150.8 62.3 155.6 C63.7 160.5 71.9 167.1 75.6 166.8 C79.3 166.4 78.6 155.3 84.5 153.4 C90.4 151.6 101.5 154.5 111.2 155.6 C120.8 156.8 131.2 160.1 142.3 160.1 C153.4 160.1 168.2 155.6 177.9 155.6 C187.5 155.6 190.8 163.8 200.1 160.1 C209.4 156.4 223.1 137.5 233.5 133.4 C243.8 129.3 256.8 130.4 262.4 135.6 C267.9 140.8 269.4 157.9 266.8 164.5 C264.2 171.2 249.8 171.2 246.8 175.7 C243.8 180.1 243.8 186.4 249.0 191.2 C254.2 196.0 273.1 202.3 277.9 204.6"/>
<path d="M289.0 237.9 C287.2 240.9 276.8 248.3 277.9 255.7 C279.0 263.1 299.1 278.5 295.7 282.4 C292.4 286.3 267.9 276.1 257.9 279.0 C247.9 282.0 239.4 296.5 235.7 299.9"/>
</g>
<g fill="none" stroke="#f3c95e" stroke-width="2.6" stroke-linejoin="round" stroke-linecap="round" opacity=".55">
<path d="M400.0 57.8 C409.3 64.1 433.4 83.8 455.6 95.6 C477.8 107.5 513.8 121.9 533.4 129.0 C553.0 136.0 558.6 134.9 573.4 137.9 C588.3 140.8 608.6 143.8 622.3 146.7 C636.1 149.7 648.3 153.4 655.7 155.6 C663.1 157.9 655.7 161.6 666.8 160.1 C677.9 158.6 703.9 147.9 722.4 146.7 C740.9 145.6 765.1 154.2 778.0 153.4 C790.9 152.7 796.3 144.2 800.0 142.3"/>
<path d="M546.7 120.1 C549.0 114.1 554.2 96.0 560.1 84.5 C566.0 73.0 576.8 61.5 582.3 51.1 C587.9 40.8 589.0 30.8 593.4 22.2 C597.9 13.7 606.4 3.7 609.0 0.0"/>
<path d="M400.0 33.4 C405.6 33.7 418.5 32.6 433.4 35.6 C448.2 38.5 473.7 49.7 488.9 51.1 C504.1 52.6 511.2 46.5 524.5 44.5 C537.9 42.4 557.5 40.0 569.0 38.9 C580.5 37.8 589.4 38.0 593.4 37.8"/>
<path d="M488.9 46.7 C496.3 42.6 522.3 30.0 533.4 22.2 C544.5 14.5 551.9 3.7 555.6 0.0"/>
<path d="M555.6 137.9 C557.9 142.3 563.8 154.9 569.0 164.5 C574.2 174.2 581.6 186.0 586.8 195.7 C592.0 205.3 596.4 214.2 600.1 222.3 C603.8 230.5 608.3 231.6 609.0 244.6 C609.7 257.5 605.3 290.7 604.6 299.9"/>
<path d="M400.0 299.9 C404.4 297.8 413.7 290.1 426.7 286.8 C439.7 283.5 461.5 285.0 477.8 280.2 C494.1 275.3 510.1 265.0 524.5 257.9 C539.0 250.9 551.9 243.8 564.5 237.9 C577.1 232.0 592.0 227.2 600.1 222.3 C608.3 217.5 609.7 214.6 613.5 209.0 C617.2 203.4 615.3 196.4 622.3 189.0 C629.4 181.6 648.3 169.4 655.7 164.5 C663.1 159.7 665.0 160.8 666.8 160.1"/>
<path d="M428.9 93.4 C431.5 101.9 443.7 130.4 444.5 144.5 C445.2 158.6 437.1 166.8 433.4 177.9 C429.6 189.0 423.0 194.6 422.2 211.2 C421.5 227.9 430.4 263.1 428.9 277.9 C427.4 292.7 415.9 296.3 413.3 299.9"/>
<path d="M466.7 124.5 C470.4 126.4 479.3 131.2 488.9 135.6 C498.6 140.1 521.5 144.2 524.5 151.2 C527.5 158.2 511.9 167.9 506.7 177.9 C501.5 187.9 498.9 200.1 493.4 211.2 C487.8 222.3 480.4 233.5 473.4 244.6 C466.3 255.7 456.0 268.7 451.1 277.9 C446.3 287.2 445.6 296.3 444.5 299.9"/>
<path d="M400.0 64.5 C403.7 66.0 417.4 68.6 422.2 73.4 C427.1 78.2 427.8 90.1 428.9 93.4"/>
<path d="M422.2 40.0 C421.9 43.0 420.0 52.3 420.0 57.8 C420.0 63.4 421.9 70.8 422.2 73.4"/>
<path d="M640.1 120.1 C643.8 115.2 655.7 100.8 662.4 91.2 C669.0 81.5 672.7 73.0 680.2 62.3 C687.6 51.5 700.9 37.1 706.8 26.7 C712.8 16.3 714.2 4.4 715.7 0.0"/>
<path d="M782.4 0.0 C781.7 7.4 780.6 33.4 778.0 44.5 C775.4 55.6 768.7 57.4 766.9 66.7 C765.0 76.0 773.2 87.5 766.9 100.1 C760.6 112.7 736.5 129.3 729.1 142.3 C721.7 155.3 724.6 164.5 722.4 177.9 C720.2 191.2 717.6 209.4 715.7 222.3 C713.9 235.3 716.5 242.8 711.3 255.7 C706.1 268.6 689.0 292.6 684.6 299.9"/>
<path d="M640.1 229.0 C648.3 228.3 669.8 224.9 689.0 224.6 C708.3 224.2 737.3 224.2 755.8 226.8 C774.2 229.4 792.6 237.9 800.0 240.1"/>
<path d="M660.1 169.0 C660.9 177.9 663.5 206.0 664.6 222.3 C665.7 238.7 664.6 253.9 666.8 266.8 C669.0 279.7 676.1 294.4 677.9 299.9"/>
<path d="M609.0 244.6 L640.1 229.0"/>
<path d="M666.8 160.1 C671.3 164.2 686.1 175.7 693.5 184.5 C700.9 193.4 707.6 207.2 711.3 213.5 C715.0 219.8 715.0 220.9 715.7 222.3"/>
<path d="M711.3 22.2 C717.2 22.6 735.0 24.8 746.9 24.5 C758.7 24.1 776.5 20.8 782.4 20.0"/>
<path d="M778.0 153.4 C779.5 157.5 783.2 170.1 786.9 177.9 C790.6 185.7 797.8 196.4 800.0 200.1"/>
<path d="M729.1 142.3 C733.5 149.3 751.3 170.5 755.8 184.5 C760.2 198.6 755.8 219.8 755.8 226.8"/>
<path d="M524.5 299.9 C524.5 294.4 517.8 277.2 524.5 266.8 C531.2 256.5 557.9 242.7 564.5 237.9"/>
<path d="M533.4 289.0 C540.8 287.9 564.5 282.0 577.9 282.4 C591.2 282.7 606.0 288.3 613.5 291.3 C620.9 294.2 620.9 298.5 622.3 299.9"/>
<path d="M997.9 62.3 C998.1 67.8 999.7 85.2 999.0 95.6 C998.3 106.0 995.8 115.2 993.4 124.5 C991.0 133.8 986.8 141.6 984.5 151.2 C982.3 160.8 984.5 171.9 980.1 182.3 C975.7 192.7 962.7 203.8 957.9 213.5 C953.0 223.1 956.8 231.2 951.2 240.1 C945.6 249.0 936.4 256.8 924.5 266.8 C912.7 276.8 887.5 294.4 880.0 299.9"/>
<path d="M1015.7 62.3 C1016.8 66.7 1019.4 79.3 1022.3 88.9 C1025.3 98.6 1032.0 108.2 1033.5 120.1 C1034.9 131.9 1031.6 148.6 1031.2 160.1 C1030.9 171.6 1034.2 178.6 1031.2 189.0 C1028.3 199.4 1017.5 211.2 1013.5 222.3 C1009.4 233.5 1009.0 244.6 1006.8 255.7 C1004.6 266.8 1001.2 283.5 1000.1 289.0"/>
<path d="M1033.5 66.7 C1035.3 71.5 1037.2 85.2 1044.6 95.6 C1052.0 106.0 1071.6 119.0 1077.9 129.0 C1084.2 139.0 1080.5 145.6 1082.4 155.6 C1084.2 165.6 1086.8 177.9 1089.0 189.0 C1091.3 200.1 1093.9 213.1 1095.7 222.3 C1097.6 231.6 1099.4 240.9 1100.2 244.6"/>
<path d="M1044.6 73.4 C1048.3 77.8 1058.3 93.0 1066.8 100.1 C1075.3 107.1 1088.7 108.6 1095.7 115.6 C1102.8 122.7 1106.8 131.9 1109.1 142.3 C1111.3 152.7 1107.6 168.2 1109.1 177.9 C1110.5 187.5 1116.1 191.6 1118.0 200.1 C1119.8 208.6 1116.8 220.5 1120.2 229.0 C1123.5 237.5 1135.0 247.5 1138.0 251.3"/>
<path d="M822.2 65.6 C827.1 63.2 840.0 55.2 851.1 51.1 C862.3 47.1 876.0 41.3 888.9 41.1 C901.9 40.9 917.1 48.2 929.0 50.0 C940.8 51.9 948.6 52.1 960.1 52.3 C971.6 52.4 991.6 51.3 997.9 51.1"/>
<path d="M800.0 93.4 C807.4 92.1 828.9 86.9 844.5 85.6 C860.0 84.3 878.6 86.9 893.4 85.6 C908.2 84.3 921.5 81.7 933.4 77.8 C945.3 73.9 953.8 65.6 964.5 62.3 C975.3 58.9 992.3 58.6 997.9 57.8"/>
<path d="M800.0 137.9 C805.6 135.3 821.5 126.7 833.4 122.3 C845.2 117.8 860.8 117.3 871.2 111.2 C881.5 105.1 891.5 89.9 895.6 85.6"/>
<path d="M888.9 111.2 C889.7 115.6 890.8 128.2 893.4 137.9 C896.0 147.5 903.0 156.8 904.5 169.0 C906.0 181.2 904.9 198.6 902.3 211.2 C899.7 223.8 892.6 229.8 888.9 244.6 C885.2 259.4 881.5 290.7 880.0 299.9"/>
<path d="M828.9 129.0 C827.1 134.1 822.6 151.9 817.8 160.1 C813.0 168.2 803.0 174.9 800.0 177.9"/>
<path d="M800.0 200.1 C802.2 205.3 809.6 222.7 813.3 231.2 C817.0 239.8 814.1 239.8 822.2 251.3 C830.4 262.7 855.6 291.8 862.3 299.9"/>
<path d="M800.0 242.4 L822.2 251.3"/>
<path d="M906.7 299.9 C914.9 296.6 940.1 285.3 955.6 280.2 C971.2 275.0 985.3 273.9 1000.1 269.0 C1014.9 264.2 1029.8 255.0 1044.6 251.3 C1059.4 247.5 1074.2 246.1 1089.0 246.8 C1103.9 247.5 1115.0 246.8 1133.5 255.7 C1152.0 264.6 1188.9 292.6 1200.0 299.9"/>
<path d="M1013.5 28.9 C1018.6 28.9 1033.8 28.2 1044.6 28.9 C1055.3 29.6 1065.0 33.4 1077.9 33.4 C1090.9 33.4 1102.1 31.5 1122.4 28.9 C1142.7 26.3 1187.1 19.6 1200.0 17.8"/>
<path d="M1115.7 33.4 C1120.5 39.7 1137.2 58.2 1144.6 71.2 C1152.0 84.1 1153.9 100.1 1160.2 111.2 C1166.5 122.3 1175.8 129.0 1182.4 137.9 C1189.1 146.7 1197.1 160.1 1200.0 164.5"/>
<path d="M969.0 0.0 C971.6 3.7 979.4 14.8 984.5 22.2 C989.7 29.6 993.8 38.9 1000.1 44.5 C1006.4 50.0 1016.8 51.9 1022.3 55.6 C1027.9 59.3 1031.6 64.9 1033.5 66.7"/>
<path d="M1013.5 26.7 C1015.7 24.1 1021.6 15.6 1026.8 11.1 C1032.0 6.7 1041.6 1.9 1044.6 0.0"/>
<path d="M911.2 0.0 C916.7 1.9 937.1 8.9 944.5 11.1 C951.9 13.3 949.0 11.5 955.6 13.3 C962.3 15.2 979.7 20.8 984.5 22.2"/>
<path d="M944.5 11.1 C943.4 15.9 940.8 32.6 937.9 40.0 C934.9 47.4 933.0 48.2 926.7 55.6 C920.4 63.0 904.5 79.7 900.1 84.5"/>
<path d="M1155.8 33.4 L1200.0 53.4"/>
<path d="M1133.5 255.7 C1137.2 252.0 1148.3 239.0 1155.8 233.5 C1163.2 227.9 1170.6 224.6 1178.0 222.3 C1185.4 220.1 1196.3 220.5 1200.0 220.1"/>
<path d="M1165.0 20.0 C1170.6 19.3 1186.1 17.8 1198.4 15.6 C1210.6 13.3 1229.1 9.3 1238.4 6.7 C1247.6 4.1 1251.3 1.1 1253.9 0.0"/>
<path d="M1165.0 40.0 C1170.6 41.9 1188.7 46.0 1198.4 51.1 C1208.0 56.3 1215.8 65.2 1222.8 71.2 C1229.9 77.1 1233.6 80.8 1240.6 86.7 C1247.6 92.6 1256.9 101.2 1265.1 106.7 C1273.2 112.3 1280.2 114.5 1289.5 120.1 C1298.8 125.6 1315.5 136.7 1320.6 140.1"/>
<path d="M1165.0 111.2 C1168.0 115.6 1176.1 128.2 1182.8 137.9 C1189.5 147.5 1200.6 158.6 1205.0 169.0 C1209.5 179.4 1210.6 189.7 1209.5 200.1 C1208.4 210.5 1199.8 223.8 1198.4 231.2 C1196.9 238.7 1200.2 242.4 1200.6 244.6"/>
<path d="M1311.7 0.0 C1312.5 5.6 1314.7 23.0 1316.2 33.4 C1317.7 43.7 1320.6 50.0 1320.6 62.3 C1320.6 74.5 1319.2 96.3 1316.2 106.7 C1313.2 117.1 1305.1 121.5 1302.9 124.5"/>
<path d="M1376.2 11.1 C1378.1 14.8 1388.5 24.8 1387.3 33.4 C1386.2 41.9 1373.3 53.0 1369.6 62.3 C1365.9 71.5 1365.9 80.0 1365.1 88.9 C1364.4 97.8 1367.7 109.7 1365.1 115.6 C1362.5 121.5 1357.0 120.4 1349.5 124.5 C1342.1 128.6 1325.5 137.5 1320.6 140.1"/>
<path d="M1218.4 177.9 C1224.3 174.9 1242.1 165.3 1253.9 160.1 C1265.8 154.9 1278.4 150.1 1289.5 146.7 C1300.6 143.4 1309.5 140.1 1320.6 140.1 C1331.8 140.1 1345.1 141.9 1356.2 146.7 C1367.3 151.6 1377.7 162.3 1387.3 169.0 C1397.0 175.7 1402.9 182.7 1414.0 186.8 C1425.1 190.8 1440.0 190.5 1454.0 193.4 C1468.1 196.4 1480.0 198.3 1498.5 204.6 C1517.0 210.9 1553.9 226.8 1565.0 231.2"/>
<path d="M1320.6 140.1 C1320.3 146.4 1320.3 166.0 1318.4 177.9 C1316.6 189.7 1311.7 200.9 1309.5 211.2 C1307.3 221.6 1305.8 235.3 1305.1 240.1"/>
<path d="M1334.0 155.6 C1336.6 160.5 1343.6 174.2 1349.5 184.5 C1355.5 194.9 1363.3 207.2 1369.6 217.9 C1375.9 228.6 1382.2 237.9 1387.3 249.0 C1392.5 260.1 1397.0 276.1 1400.7 284.6 C1404.4 293.1 1408.1 297.4 1409.6 299.9"/>
<path d="M1165.0 231.2 L1198.4 231.2"/>
<path d="M1165.0 251.3 C1170.6 250.1 1189.1 243.8 1198.4 244.6 C1207.6 245.3 1213.5 250.5 1220.6 255.7 C1227.6 260.9 1236.2 268.3 1240.6 275.7 C1245.0 283.1 1246.2 295.9 1247.3 299.9"/>
<path d="M1165.0 289.0 L1178.3 299.9"/>
<path d="M1556.3 0.0 C1556.0 9.3 1552.7 40.8 1554.1 55.6 C1555.6 70.4 1563.2 83.4 1565.0 88.9"/>
<path d="M1554.1 299.9 L1565.0 282.4"/>
</g>
<g fill="none" stroke="#f8d784" stroke-width="1.9" stroke-linejoin="round" stroke-linecap="round">
<path d="M400.0 57.8 C409.3 64.1 433.4 83.8 455.6 95.6 C477.8 107.5 513.8 121.9 533.4 129.0 C553.0 136.0 558.6 134.9 573.4 137.9 C588.3 140.8 608.6 143.8 622.3 146.7 C636.1 149.7 648.3 153.4 655.7 155.6 C663.1 157.9 655.7 161.6 666.8 160.1 C677.9 158.6 703.9 147.9 722.4 146.7 C740.9 145.6 765.1 154.2 778.0 153.4 C790.9 152.7 796.3 144.2 800.0 142.3"/>
<path d="M546.7 120.1 C549.0 114.1 554.2 96.0 560.1 84.5 C566.0 73.0 576.8 61.5 582.3 51.1 C587.9 40.8 589.0 30.8 593.4 22.2 C597.9 13.7 606.4 3.7 609.0 0.0"/>
<path d="M400.0 33.4 C405.6 33.7 418.5 32.6 433.4 35.6 C448.2 38.5 473.7 49.7 488.9 51.1 C504.1 52.6 511.2 46.5 524.5 44.5 C537.9 42.4 557.5 40.0 569.0 38.9 C580.5 37.8 589.4 38.0 593.4 37.8"/>
<path d="M488.9 46.7 C496.3 42.6 522.3 30.0 533.4 22.2 C544.5 14.5 551.9 3.7 555.6 0.0"/>
<path d="M555.6 137.9 C557.9 142.3 563.8 154.9 569.0 164.5 C574.2 174.2 581.6 186.0 586.8 195.7 C592.0 205.3 596.4 214.2 600.1 222.3 C603.8 230.5 608.3 231.6 609.0 244.6 C609.7 257.5 605.3 290.7 604.6 299.9"/>
<path d="M400.0 299.9 C404.4 297.8 413.7 290.1 426.7 286.8 C439.7 283.5 461.5 285.0 477.8 280.2 C494.1 275.3 510.1 265.0 524.5 257.9 C539.0 250.9 551.9 243.8 564.5 237.9 C577.1 232.0 592.0 227.2 600.1 222.3 C608.3 217.5 609.7 214.6 613.5 209.0 C617.2 203.4 615.3 196.4 622.3 189.0 C629.4 181.6 648.3 169.4 655.7 164.5 C663.1 159.7 665.0 160.8 666.8 160.1"/>
<path d="M428.9 93.4 C431.5 101.9 443.7 130.4 444.5 144.5 C445.2 158.6 437.1 166.8 433.4 177.9 C429.6 189.0 423.0 194.6 422.2 211.2 C421.5 227.9 430.4 263.1 428.9 277.9 C427.4 292.7 415.9 296.3 413.3 299.9"/>
<path d="M466.7 124.5 C470.4 126.4 479.3 131.2 488.9 135.6 C498.6 140.1 521.5 144.2 524.5 151.2 C527.5 158.2 511.9 167.9 506.7 177.9 C501.5 187.9 498.9 200.1 493.4 211.2 C487.8 222.3 480.4 233.5 473.4 244.6 C466.3 255.7 456.0 268.7 451.1 277.9 C446.3 287.2 445.6 296.3 444.5 299.9"/>
<path d="M400.0 64.5 C403.7 66.0 417.4 68.6 422.2 73.4 C427.1 78.2 427.8 90.1 428.9 93.4"/>
<path d="M422.2 40.0 C421.9 43.0 420.0 52.3 420.0 57.8 C420.0 63.4 421.9 70.8 422.2 73.4"/>
<path d="M640.1 120.1 C643.8 115.2 655.7 100.8 662.4 91.2 C669.0 81.5 672.7 73.0 680.2 62.3 C687.6 51.5 700.9 37.1 706.8 26.7 C712.8 16.3 714.2 4.4 715.7 0.0"/>
<path d="M782.4 0.0 C781.7 7.4 780.6 33.4 778.0 44.5 C775.4 55.6 768.7 57.4 766.9 66.7 C765.0 76.0 773.2 87.5 766.9 100.1 C760.6 112.7 736.5 129.3 729.1 142.3 C721.7 155.3 724.6 164.5 722.4 177.9 C720.2 191.2 717.6 209.4 715.7 222.3 C713.9 235.3 716.5 242.8 711.3 255.7 C706.1 268.6 689.0 292.6 684.6 299.9"/>
<path d="M640.1 229.0 C648.3 228.3 669.8 224.9 689.0 224.6 C708.3 224.2 737.3 224.2 755.8 226.8 C774.2 229.4 792.6 237.9 800.0 240.1"/>
<path d="M660.1 169.0 C660.9 177.9 663.5 206.0 664.6 222.3 C665.7 238.7 664.6 253.9 666.8 266.8 C669.0 279.7 676.1 294.4 677.9 299.9"/>
<path d="M609.0 244.6 L640.1 229.0"/>
<path d="M666.8 160.1 C671.3 164.2 686.1 175.7 693.5 184.5 C700.9 193.4 707.6 207.2 711.3 213.5 C715.0 219.8 715.0 220.9 715.7 222.3"/>
<path d="M711.3 22.2 C717.2 22.6 735.0 24.8 746.9 24.5 C758.7 24.1 776.5 20.8 782.4 20.0"/>
<path d="M778.0 153.4 C779.5 157.5 783.2 170.1 786.9 177.9 C790.6 185.7 797.8 196.4 800.0 200.1"/>
<path d="M729.1 142.3 C733.5 149.3 751.3 170.5 755.8 184.5 C760.2 198.6 755.8 219.8 755.8 226.8"/>
<path d="M524.5 299.9 C524.5 294.4 517.8 277.2 524.5 266.8 C531.2 256.5 557.9 242.7 564.5 237.9"/>
<path d="M533.4 289.0 C540.8 287.9 564.5 282.0 577.9 282.4 C591.2 282.7 606.0 288.3 613.5 291.3 C620.9 294.2 620.9 298.5 622.3 299.9"/>
<path d="M997.9 62.3 C998.1 67.8 999.7 85.2 999.0 95.6 C998.3 106.0 995.8 115.2 993.4 124.5 C991.0 133.8 986.8 141.6 984.5 151.2 C982.3 160.8 984.5 171.9 980.1 182.3 C975.7 192.7 962.7 203.8 957.9 213.5 C953.0 223.1 956.8 231.2 951.2 240.1 C945.6 249.0 936.4 256.8 924.5 266.8 C912.7 276.8 887.5 294.4 880.0 299.9"/>
<path d="M1015.7 62.3 C1016.8 66.7 1019.4 79.3 1022.3 88.9 C1025.3 98.6 1032.0 108.2 1033.5 120.1 C1034.9 131.9 1031.6 148.6 1031.2 160.1 C1030.9 171.6 1034.2 178.6 1031.2 189.0 C1028.3 199.4 1017.5 211.2 1013.5 222.3 C1009.4 233.5 1009.0 244.6 1006.8 255.7 C1004.6 266.8 1001.2 283.5 1000.1 289.0"/>
<path d="M1033.5 66.7 C1035.3 71.5 1037.2 85.2 1044.6 95.6 C1052.0 106.0 1071.6 119.0 1077.9 129.0 C1084.2 139.0 1080.5 145.6 1082.4 155.6 C1084.2 165.6 1086.8 177.9 1089.0 189.0 C1091.3 200.1 1093.9 213.1 1095.7 222.3 C1097.6 231.6 1099.4 240.9 1100.2 244.6"/>
<path d="M1044.6 73.4 C1048.3 77.8 1058.3 93.0 1066.8 100.1 C1075.3 107.1 1088.7 108.6 1095.7 115.6 C1102.8 122.7 1106.8 131.9 1109.1 142.3 C1111.3 152.7 1107.6 168.2 1109.1 177.9 C1110.5 187.5 1116.1 191.6 1118.0 200.1 C1119.8 208.6 1116.8 220.5 1120.2 229.0 C1123.5 237.5 1135.0 247.5 1138.0 251.3"/>
<path d="M822.2 65.6 C827.1 63.2 840.0 55.2 851.1 51.1 C862.3 47.1 876.0 41.3 888.9 41.1 C901.9 40.9 917.1 48.2 929.0 50.0 C940.8 51.9 948.6 52.1 960.1 52.3 C971.6 52.4 991.6 51.3 997.9 51.1"/>
<path d="M800.0 93.4 C807.4 92.1 828.9 86.9 844.5 85.6 C860.0 84.3 878.6 86.9 893.4 85.6 C908.2 84.3 921.5 81.7 933.4 77.8 C945.3 73.9 953.8 65.6 964.5 62.3 C975.3 58.9 992.3 58.6 997.9 57.8"/>
<path d="M800.0 137.9 C805.6 135.3 821.5 126.7 833.4 122.3 C845.2 117.8 860.8 117.3 871.2 111.2 C881.5 105.1 891.5 89.9 895.6 85.6"/>
<path d="M888.9 111.2 C889.7 115.6 890.8 128.2 893.4 137.9 C896.0 147.5 903.0 156.8 904.5 169.0 C906.0 181.2 904.9 198.6 902.3 211.2 C899.7 223.8 892.6 229.8 888.9 244.6 C885.2 259.4 881.5 290.7 880.0 299.9"/>
<path d="M828.9 129.0 C827.1 134.1 822.6 151.9 817.8 160.1 C813.0 168.2 803.0 174.9 800.0 177.9"/>
<path d="M800.0 200.1 C802.2 205.3 809.6 222.7 813.3 231.2 C817.0 239.8 814.1 239.8 822.2 251.3 C830.4 262.7 855.6 291.8 862.3 299.9"/>
<path d="M800.0 242.4 L822.2 251.3"/>
<path d="M906.7 299.9 C914.9 296.6 940.1 285.3 955.6 280.2 C971.2 275.0 985.3 273.9 1000.1 269.0 C1014.9 264.2 1029.8 255.0 1044.6 251.3 C1059.4 247.5 1074.2 246.1 1089.0 246.8 C1103.9 247.5 1115.0 246.8 1133.5 255.7 C1152.0 264.6 1188.9 292.6 1200.0 299.9"/>
<path d="M1013.5 28.9 C1018.6 28.9 1033.8 28.2 1044.6 28.9 C1055.3 29.6 1065.0 33.4 1077.9 33.4 C1090.9 33.4 1102.1 31.5 1122.4 28.9 C1142.7 26.3 1187.1 19.6 1200.0 17.8"/>
<path d="M1115.7 33.4 C1120.5 39.7 1137.2 58.2 1144.6 71.2 C1152.0 84.1 1153.9 100.1 1160.2 111.2 C1166.5 122.3 1175.8 129.0 1182.4 137.9 C1189.1 146.7 1197.1 160.1 1200.0 164.5"/>
<path d="M969.0 0.0 C971.6 3.7 979.4 14.8 984.5 22.2 C989.7 29.6 993.8 38.9 1000.1 44.5 C1006.4 50.0 1016.8 51.9 1022.3 55.6 C1027.9 59.3 1031.6 64.9 1033.5 66.7"/>
<path d="M1013.5 26.7 C1015.7 24.1 1021.6 15.6 1026.8 11.1 C1032.0 6.7 1041.6 1.9 1044.6 0.0"/>
<path d="M911.2 0.0 C916.7 1.9 937.1 8.9 944.5 11.1 C951.9 13.3 949.0 11.5 955.6 13.3 C962.3 15.2 979.7 20.8 984.5 22.2"/>
<path d="M944.5 11.1 C943.4 15.9 940.8 32.6 937.9 40.0 C934.9 47.4 933.0 48.2 926.7 55.6 C920.4 63.0 904.5 79.7 900.1 84.5"/>
<path d="M1155.8 33.4 L1200.0 53.4"/>
<path d="M1133.5 255.7 C1137.2 252.0 1148.3 239.0 1155.8 233.5 C1163.2 227.9 1170.6 224.6 1178.0 222.3 C1185.4 220.1 1196.3 220.5 1200.0 220.1"/>
<path d="M1165.0 20.0 C1170.6 19.3 1186.1 17.8 1198.4 15.6 C1210.6 13.3 1229.1 9.3 1238.4 6.7 C1247.6 4.1 1251.3 1.1 1253.9 0.0"/>
<path d="M1165.0 40.0 C1170.6 41.9 1188.7 46.0 1198.4 51.1 C1208.0 56.3 1215.8 65.2 1222.8 71.2 C1229.9 77.1 1233.6 80.8 1240.6 86.7 C1247.6 92.6 1256.9 101.2 1265.1 106.7 C1273.2 112.3 1280.2 114.5 1289.5 120.1 C1298.8 125.6 1315.5 136.7 1320.6 140.1"/>
<path d="M1165.0 111.2 C1168.0 115.6 1176.1 128.2 1182.8 137.9 C1189.5 147.5 1200.6 158.6 1205.0 169.0 C1209.5 179.4 1210.6 189.7 1209.5 200.1 C1208.4 210.5 1199.8 223.8 1198.4 231.2 C1196.9 238.7 1200.2 242.4 1200.6 244.6"/>
<path d="M1311.7 0.0 C1312.5 5.6 1314.7 23.0 1316.2 33.4 C1317.7 43.7 1320.6 50.0 1320.6 62.3 C1320.6 74.5 1319.2 96.3 1316.2 106.7 C1313.2 117.1 1305.1 121.5 1302.9 124.5"/>
<path d="M1376.2 11.1 C1378.1 14.8 1388.5 24.8 1387.3 33.4 C1386.2 41.9 1373.3 53.0 1369.6 62.3 C1365.9 71.5 1365.9 80.0 1365.1 88.9 C1364.4 97.8 1367.7 109.7 1365.1 115.6 C1362.5 121.5 1357.0 120.4 1349.5 124.5 C1342.1 128.6 1325.5 137.5 1320.6 140.1"/>
<path d="M1218.4 177.9 C1224.3 174.9 1242.1 165.3 1253.9 160.1 C1265.8 154.9 1278.4 150.1 1289.5 146.7 C1300.6 143.4 1309.5 140.1 1320.6 140.1 C1331.8 140.1 1345.1 141.9 1356.2 146.7 C1367.3 151.6 1377.7 162.3 1387.3 169.0 C1397.0 175.7 1402.9 182.7 1414.0 186.8 C1425.1 190.8 1440.0 190.5 1454.0 193.4 C1468.1 196.4 1480.0 198.3 1498.5 204.6 C1517.0 210.9 1553.9 226.8 1565.0 231.2"/>
<path d="M1320.6 140.1 C1320.3 146.4 1320.3 166.0 1318.4 177.9 C1316.6 189.7 1311.7 200.9 1309.5 211.2 C1307.3 221.6 1305.8 235.3 1305.1 240.1"/>
<path d="M1334.0 155.6 C1336.6 160.5 1343.6 174.2 1349.5 184.5 C1355.5 194.9 1363.3 207.2 1369.6 217.9 C1375.9 228.6 1382.2 237.9 1387.3 249.0 C1392.5 260.1 1397.0 276.1 1400.7 284.6 C1404.4 293.1 1408.1 297.4 1409.6 299.9"/>
<path d="M1165.0 231.2 L1198.4 231.2"/>
<path d="M1165.0 251.3 C1170.6 250.1 1189.1 243.8 1198.4 244.6 C1207.6 245.3 1213.5 250.5 1220.6 255.7 C1227.6 260.9 1236.2 268.3 1240.6 275.7 C1245.0 283.1 1246.2 295.9 1247.3 299.9"/>
<path d="M1165.0 289.0 L1178.3 299.9"/>
<path d="M1556.3 0.0 C1556.0 9.3 1552.7 40.8 1554.1 55.6 C1555.6 70.4 1563.2 83.4 1565.0 88.9"/>
<path d="M1554.1 299.9 L1565.0 282.4"/>
</g>
<g fill="none" stroke="#f8d784" stroke-width="1.8" stroke-linejoin="round" stroke-linecap="round">
<path d="M262.4 11.1 C266.8 13.0 280.9 16.7 289.0 22.2 C297.2 27.8 305.7 38.9 311.3 44.5 C316.8 50.0 315.0 54.5 322.4 55.6 C329.8 56.7 342.8 50.8 355.8 51.1 C368.7 51.5 392.6 56.7 400.0 57.8"/>
<path d="M378.0 0.0 C381.0 3.7 392.1 17.4 395.8 22.2 C399.4 27.1 399.3 27.8 400.0 28.9"/>
<path d="M282.4 202.3 C283.1 205.7 278.3 216.0 286.8 222.3 C295.3 228.6 320.2 236.1 333.5 240.1 C346.9 244.2 355.8 244.6 366.9 246.8 C378.0 249.0 394.5 252.4 400.0 253.5"/>
<path d="M369.1 269.0 C372.8 270.9 386.2 275.0 391.3 280.2 C396.5 285.3 398.6 296.6 400.0 299.9"/>
<path d="M0.0 8.9 L8.9 0.0"/>
</g>
<g filter="url(#bl2)"><polygon points="400.0,255.7 444.5,262.4 473.4,299.9 400.0,299.9" fill="#e9e8ea" /><polygon points="700.2,200.1 729.1,195.7 733.5,244.6 706.8,249.0" fill="#eae9eb" /></g>
<g font-family="&quot;Liberation Sans&quot;,sans-serif">
<text x="38.9" y="61.8" font-size="13" text-anchor="middle" fill="#3c8a44" font-weight="normal" letter-spacing="0.2" stroke="#fff" stroke-width="2.4" stroke-linejoin="round" paint-order="stroke" stroke-opacity=".9">Wildlife</text>
<text x="38.9" y="76.0" font-size="13" text-anchor="middle" fill="#3c8a44" font-weight="normal" letter-spacing="0.2" stroke="#fff" stroke-width="2.4" stroke-linejoin="round" paint-order="stroke" stroke-opacity=".9">Sanctuary</text>
<text x="204.6" y="46.2" font-size="11.5" text-anchor="middle" fill="#5b6167" font-weight="normal" letter-spacing="0.2" stroke="#fff" stroke-width="2.4" stroke-linejoin="round" paint-order="stroke" stroke-opacity=".9">Ithalar</text>
<path d="M180.6 52.7A2.7 3.0 0 1 0 180.6 54.4V59.1M181.9 51.2Q184.6 48.1 187.2 51.5Q187.2 57.2 184.6 57.2Q181.9 57.2 181.9 54.2Q184.6 52.7 185.4 55.0M193.9 52.7A2.7 3.0 0 1 0 193.9 54.4V59.1M200.6 52.7A2.7 3.0 0 1 0 200.6 54.4V59.1M201.9 51.2Q204.6 48.1 207.2 51.5Q207.2 57.2 204.6 57.2Q201.9 57.2 201.9 54.2Q204.6 52.7 205.4 55.0M208.6 51.2Q211.2 48.1 213.9 51.5Q213.9 57.2 211.2 57.2Q208.6 57.2 208.6 54.2Q211.2 52.7 212.0 55.0M215.2 49.6H220.6M216.0 49.6V54.6A1.9 2.7 0 0 0 220.6 54.6V52.3M221.9 49.6H227.2M222.7 49.6V54.6A1.9 2.7 0 0 0 227.2 54.6V52.3M228.6 51.2Q231.2 48.1 233.9 51.5Q233.9 57.2 231.2 57.2Q228.6 57.2 228.6 54.2Q231.2 52.7 232.0 55.0" fill="none" stroke="#fff" stroke-width="2.85" stroke-linejoin="round" stroke-linecap="round" opacity=".85"/><path d="M180.6 52.7A2.7 3.0 0 1 0 180.6 54.4V59.1M181.9 51.2Q184.6 48.1 187.2 51.5Q187.2 57.2 184.6 57.2Q181.9 57.2 181.9 54.2Q184.6 52.7 185.4 55.0M193.9 52.7A2.7 3.0 0 1 0 193.9 54.4V59.1M200.6 52.7A2.7 3.0 0 1 0 200.6 54.4V59.1M201.9 51.2Q204.6 48.1 207.2 51.5Q207.2 57.2 204.6 57.2Q201.9 57.2 201.9 54.2Q204.6 52.7 205.4 55.0M208.6 51.2Q211.2 48.1 213.9 51.5Q213.9 57.2 211.2 57.2Q208.6 57.2 208.6 54.2Q211.2 52.7 212.0 55.0M215.2 49.6H220.6M216.0 49.6V54.6A1.9 2.7 0 0 0 220.6 54.6V52.3M221.9 49.6H227.2M222.7 49.6V54.6A1.9 2.7 0 0 0 227.2 54.6V52.3M228.6 51.2Q231.2 48.1 233.9 51.5Q233.9 57.2 231.2 57.2Q228.6 57.2 228.6 54.2Q231.2 52.7 232.0 55.0" fill="none" stroke="#5b6167" stroke-width="1.25" stroke-linejoin="round" stroke-linecap="round"/>
<text x="319.5" y="38.5" font-size="11.5" text-anchor="middle" fill="#5b6167" font-weight="normal" letter-spacing="0.2" stroke="#fff" stroke-width="2.4" stroke-linejoin="round" paint-order="stroke" stroke-opacity=".9">Coonoor</text>
<path d="M298.2 45.1A2.8 3.2 0 1 0 298.2 46.9V52.0M302.3 44.3V50.0H305.1M302.0 41.1h.6M306.4 43.5Q309.2 40.2 311.9 43.9Q311.9 50.0 309.2 50.0Q306.4 50.0 306.4 46.7Q309.2 45.1 310.0 47.5M313.3 41.9H318.8M314.1 41.9V47.1A1.9 2.8 0 0 0 318.8 47.1V44.7M322.9 45.9A1.2 1.8 0 1 1 324.3 46.7A2.8 4.0 0 1 1 325.7 44.7M332.6 45.1A2.8 3.2 0 1 0 332.6 46.9V52.0M333.9 50.0Q333.9 41.9 335.9 41.9Q336.7 41.9 336.7 45.9Q336.7 41.9 337.8 41.9Q339.4 41.9 339.4 50.0M340.8 41.9H346.3M341.6 41.9V47.1A1.9 2.8 0 0 0 346.3 47.1V44.7" fill="none" stroke="#fff" stroke-width="2.85" stroke-linejoin="round" stroke-linecap="round" opacity=".85"/><path d="M298.2 45.1A2.8 3.2 0 1 0 298.2 46.9V52.0M302.3 44.3V50.0H305.1M302.0 41.1h.6M306.4 43.5Q309.2 40.2 311.9 43.9Q311.9 50.0 309.2 50.0Q306.4 50.0 306.4 46.7Q309.2 45.1 310.0 47.5M313.3 41.9H318.8M314.1 41.9V47.1A1.9 2.8 0 0 0 318.8 47.1V44.7M322.9 45.9A1.2 1.8 0 1 1 324.3 46.7A2.8 4.0 0 1 1 325.7 44.7M332.6 45.1A2.8 3.2 0 1 0 332.6 46.9V52.0M333.9 50.0Q333.9 41.9 335.9 41.9Q336.7 41.9 336.7 45.9Q336.7 41.9 337.8 41.9Q339.4 41.9 339.4 50.0M340.8 41.9H346.3M341.6 41.9V47.1A1.9 2.8 0 0 0 346.3 47.1V44.7" fill="none" stroke="#5b6167" stroke-width="1.25" stroke-linejoin="round" stroke-linecap="round"/>
<text x="156.8" y="190.8" font-size="13" text-anchor="middle" fill="#3c8a44" font-weight="normal" letter-spacing="0.2" stroke="#fff" stroke-width="2.4" stroke-linejoin="round" paint-order="stroke" stroke-opacity=".9">Attappadi</text>
<text x="156.8" y="204.6" font-size="13" text-anchor="middle" fill="#3c8a44" font-weight="normal" letter-spacing="0.2" stroke="#fff" stroke-width="2.4" stroke-linejoin="round" paint-order="stroke" stroke-opacity=".9">Reserve Forest</text>
<text x="211.2" y="225.2" font-size="11.5" text-anchor="middle" fill="#5b6167" font-weight="normal" letter-spacing="0.2" stroke="#fff" stroke-width="2.4" stroke-linejoin="round" paint-order="stroke" stroke-opacity=".9">Agali</text>
<path d="M194.6 232.4A1.2 1.7 0 1 1 195.9 233.2A2.7 3.8 0 1 1 197.2 231.3M198.6 230.2Q201.2 227.1 203.9 230.5Q203.9 236.2 201.2 236.2Q198.6 236.2 198.6 233.2Q201.2 231.7 202.0 234.0M207.9 230.9V236.2H210.6M207.6 227.9h.6M214.6 230.9V236.2H217.2M214.3 227.9h.6M221.2 232.4A1.2 1.7 0 1 1 222.6 233.2A2.7 3.8 0 1 1 223.9 231.3M225.2 230.2Q227.9 227.1 230.6 230.5Q230.6 236.2 227.9 236.2Q225.2 236.2 225.2 233.2Q227.9 231.7 228.7 234.0" fill="none" stroke="#fff" stroke-width="2.85" stroke-linejoin="round" stroke-linecap="round" opacity=".85"/><path d="M194.6 232.4A1.2 1.7 0 1 1 195.9 233.2A2.7 3.8 0 1 1 197.2 231.3M198.6 230.2Q201.2 227.1 203.9 230.5Q203.9 236.2 201.2 236.2Q198.6 236.2 198.6 233.2Q201.2 231.7 202.0 234.0M207.9 230.9V236.2H210.6M207.6 227.9h.6M214.6 230.9V236.2H217.2M214.3 227.9h.6M221.2 232.4A1.2 1.7 0 1 1 222.6 233.2A2.7 3.8 0 1 1 223.9 231.3M225.2 230.2Q227.9 227.1 230.6 230.5Q230.6 236.2 227.9 236.2Q225.2 236.2 225.2 233.2Q227.9 231.7 228.7 234.0" fill="none" stroke="#5b6167" stroke-width="1.25" stroke-linejoin="round" stroke-linecap="round"/>
<text x="299.5" y="223.7" font-size="11.5" text-anchor="middle" fill="#5b6167" font-weight="normal" letter-spacing="0.2" stroke="#fff" stroke-width="2.4" stroke-linejoin="round" paint-order="stroke" stroke-opacity=".9">Anaikatti</text>
<path d="M270.8 230.3A2.8 3.2 0 1 0 270.8 232.1V237.2M277.8 230.3A2.8 3.2 0 1 0 277.8 232.1V237.2M282.0 229.5V235.2H284.8M281.7 226.3h.6M289.0 229.5V235.2H291.8M288.7 226.3h.6M293.2 228.7Q296.0 225.5 298.8 229.1Q298.8 235.2 296.0 235.2Q293.2 235.2 293.2 231.9Q296.0 230.3 296.8 232.7M303.0 229.5V235.2H305.8M302.7 226.3h.6M307.2 227.1H312.8M308.0 227.1V232.3A2.0 2.8 0 0 0 312.8 232.3V229.9M314.2 228.7Q317.0 225.5 319.8 229.1Q319.8 235.2 317.0 235.2Q314.2 235.2 314.2 231.9Q317.0 230.3 317.8 232.7M324.0 231.1A1.3 1.8 0 1 1 325.4 231.9A2.8 4.0 0 1 1 326.8 229.9M328.2 228.7Q331.0 225.5 333.8 229.1Q333.8 235.2 331.0 235.2Q328.2 235.2 328.2 231.9Q331.0 230.3 331.8 232.7" fill="none" stroke="#fff" stroke-width="2.85" stroke-linejoin="round" stroke-linecap="round" opacity=".85"/><path d="M270.8 230.3A2.8 3.2 0 1 0 270.8 232.1V237.2M277.8 230.3A2.8 3.2 0 1 0 277.8 232.1V237.2M282.0 229.5V235.2H284.8M281.7 226.3h.6M289.0 229.5V235.2H291.8M288.7 226.3h.6M293.2 228.7Q296.0 225.5 298.8 229.1Q298.8 235.2 296.0 235.2Q293.2 235.2 293.2 231.9Q296.0 230.3 296.8 232.7M303.0 229.5V235.2H305.8M302.7 226.3h.6M307.2 227.1H312.8M308.0 227.1V232.3A2.0 2.8 0 0 0 312.8 232.3V229.9M314.2 228.7Q317.0 225.5 319.8 229.1Q319.8 235.2 317.0 235.2Q314.2 235.2 314.2 231.9Q317.0 230.3 317.8 232.7M324.0 231.1A1.3 1.8 0 1 1 325.4 231.9A2.8 4.0 0 1 1 326.8 229.9M328.2 228.7Q331.0 225.5 333.8 229.1Q333.8 235.2 331.0 235.2Q328.2 235.2 328.2 231.9Q331.0 230.3 331.8 232.7" fill="none" stroke="#5b6167" stroke-width="1.25" stroke-linejoin="round" stroke-linecap="round"/>
<text x="153.0" y="250.1" font-size="11.5" text-anchor="middle" fill="#5b6167" font-weight="normal" letter-spacing="0.2" stroke="#fff" stroke-width="2.4" stroke-linejoin="round" paint-order="stroke" stroke-opacity=".9">Attappadi</text>
<path d="M131.5 257.3A1.3 1.7 0 1 1 133.0 258.1A2.9 3.8 0 1 1 134.4 256.2M138.7 257.3A1.3 1.7 0 1 1 140.1 258.1A2.9 3.8 0 1 1 141.5 256.2M145.8 257.3A1.3 1.7 0 1 1 147.3 258.1A2.9 3.8 0 1 1 148.7 256.2M150.1 253.5H155.8M151.0 253.5V258.5A2.0 2.7 0 0 0 155.8 258.5V256.2M157.3 253.5H163.0M158.1 253.5V258.5A2.0 2.7 0 0 0 163.0 258.5V256.2M164.4 255.1Q167.3 252.0 170.1 255.4Q170.1 261.1 167.3 261.1Q164.4 261.1 164.4 258.1Q167.3 256.6 168.1 258.9M174.4 257.3A1.3 1.7 0 1 1 175.8 258.1A2.9 3.8 0 1 1 177.3 256.2" fill="none" stroke="#fff" stroke-width="2.85" stroke-linejoin="round" stroke-linecap="round" opacity=".85"/><path d="M131.5 257.3A1.3 1.7 0 1 1 133.0 258.1A2.9 3.8 0 1 1 134.4 256.2M138.7 257.3A1.3 1.7 0 1 1 140.1 258.1A2.9 3.8 0 1 1 141.5 256.2M145.8 257.3A1.3 1.7 0 1 1 147.3 258.1A2.9 3.8 0 1 1 148.7 256.2M150.1 253.5H155.8M151.0 253.5V258.5A2.0 2.7 0 0 0 155.8 258.5V256.2M157.3 253.5H163.0M158.1 253.5V258.5A2.0 2.7 0 0 0 163.0 258.5V256.2M164.4 255.1Q167.3 252.0 170.1 255.4Q170.1 261.1 167.3 261.1Q164.4 261.1 164.4 258.1Q167.3 256.6 168.1 258.9M174.4 257.3A1.3 1.7 0 1 1 175.8 258.1A2.9 3.8 0 1 1 177.3 256.2" fill="none" stroke="#5b6167" stroke-width="1.25" stroke-linejoin="round" stroke-linecap="round"/>
<text x="51.8" y="240.6" font-size="13" text-anchor="middle" fill="#3c8a44" font-weight="normal" letter-spacing="0.2" stroke="#fff" stroke-width="2.4" stroke-linejoin="round" paint-order="stroke" stroke-opacity=".9">Silent Valley</text>
<text x="51.8" y="254.6" font-size="13" text-anchor="middle" fill="#3c8a44" font-weight="normal" letter-spacing="0.2" stroke="#fff" stroke-width="2.4" stroke-linejoin="round" paint-order="stroke" stroke-opacity=".9">National Park</text>
<text x="14.7" y="210.3" font-size="11.5" text-anchor="middle" fill="#5b6167" font-weight="normal" letter-spacing="0.2" stroke="#fff" stroke-width="2.4" stroke-linejoin="round" paint-order="stroke" stroke-opacity=".9">kundu</text>
<path d="M2.1 216.4A2.4 2.6 0 1 0 2.1 217.8V222.0M3.3 220.3Q3.3 213.7 5.0 213.7Q5.7 213.7 5.7 217.0Q5.7 213.7 6.6 213.7Q8.1 213.7 8.1 220.3M14.1 216.4A2.4 2.6 0 1 0 14.1 217.8V222.0M15.3 215.1Q17.7 212.4 20.1 215.4Q20.1 220.3 17.7 220.3Q15.3 220.3 15.3 217.7Q17.7 216.4 18.4 218.4M21.3 213.7H26.1M22.0 213.7V218.0A1.7 2.3 0 0 0 26.1 218.0V216.0M27.3 215.1Q29.7 212.4 32.1 215.4Q32.1 220.3 29.7 220.3Q27.3 220.3 27.3 217.7Q29.7 216.4 30.4 218.4" fill="none" stroke="#fff" stroke-width="2.85" stroke-linejoin="round" stroke-linecap="round" opacity=".85"/><path d="M2.1 216.4A2.4 2.6 0 1 0 2.1 217.8V222.0M3.3 220.3Q3.3 213.7 5.0 213.7Q5.7 213.7 5.7 217.0Q5.7 213.7 6.6 213.7Q8.1 213.7 8.1 220.3M14.1 216.4A2.4 2.6 0 1 0 14.1 217.8V222.0M15.3 215.1Q17.7 212.4 20.1 215.4Q20.1 220.3 17.7 220.3Q15.3 220.3 15.3 217.7Q17.7 216.4 18.4 218.4M21.3 213.7H26.1M22.0 213.7V218.0A1.7 2.3 0 0 0 26.1 218.0V216.0M27.3 215.1Q29.7 212.4 32.1 215.4Q32.1 220.3 29.7 220.3Q27.3 220.3 27.3 217.7Q29.7 216.4 30.4 218.4" fill="none" stroke="#5b6167" stroke-width="1.25" stroke-linejoin="round" stroke-linecap="round"/>
<text x="75.6" y="302.8" font-size="11.5" text-anchor="middle" fill="#5b6167" font-weight="normal" letter-spacing="0.2" stroke="#fff" stroke-width="2.4" stroke-linejoin="round" paint-order="stroke" stroke-opacity=".9">Mannarkkad</text>
<text x="423.0" y="75.5" font-size="13.5" text-anchor="middle" fill="#5b6167" font-weight="normal" letter-spacing="0.2" stroke="#fff" stroke-width="2.4" stroke-linejoin="round" paint-order="stroke" stroke-opacity=".9">Mettupalayam</text>
<path d="M365.8 79.9H372.5M366.8 79.9V85.8A2.3 3.2 0 0 0 372.5 85.8V83.1M377.4 82.6V89.0H380.7M377.1 79.0h.6M382.4 89.0Q382.4 79.9 384.7 79.9Q385.7 79.9 385.7 84.5Q385.7 79.9 387.0 79.9Q389.0 79.9 389.0 89.0M397.3 83.5A3.3 3.6 0 1 0 397.3 85.5V91.3M402.3 84.5A1.5 2.0 0 1 1 403.9 85.4A3.3 4.5 0 1 1 405.6 83.1M410.6 82.6V89.0H413.9M410.3 79.0h.6M418.9 84.5A1.5 2.0 0 1 1 420.5 85.4A3.3 4.5 0 1 1 422.2 83.1M430.5 83.5A3.3 3.6 0 1 0 430.5 85.5V91.3M435.4 82.6V89.0H438.7M435.1 79.0h.6M440.4 89.0Q440.4 79.9 442.7 79.9Q443.7 79.9 443.7 84.5Q443.7 79.9 445.0 79.9Q447.0 79.9 447.0 89.0M455.3 83.5A3.3 3.6 0 1 0 455.3 85.5V91.3M457.0 81.7Q460.3 78.1 463.6 82.2Q463.6 89.0 460.3 89.0Q457.0 89.0 457.0 85.4Q460.3 83.5 461.3 86.3M468.6 84.5A1.5 2.0 0 1 1 470.2 85.4A3.3 4.5 0 1 1 471.9 83.1M476.9 82.6V89.0H480.2M476.6 79.0h.6" fill="none" stroke="#fff" stroke-width="2.85" stroke-linejoin="round" stroke-linecap="round" opacity=".85"/><path d="M365.8 79.9H372.5M366.8 79.9V85.8A2.3 3.2 0 0 0 372.5 85.8V83.1M377.4 82.6V89.0H380.7M377.1 79.0h.6M382.4 89.0Q382.4 79.9 384.7 79.9Q385.7 79.9 385.7 84.5Q385.7 79.9 387.0 79.9Q389.0 79.9 389.0 89.0M397.3 83.5A3.3 3.6 0 1 0 397.3 85.5V91.3M402.3 84.5A1.5 2.0 0 1 1 403.9 85.4A3.3 4.5 0 1 1 405.6 83.1M410.6 82.6V89.0H413.9M410.3 79.0h.6M418.9 84.5A1.5 2.0 0 1 1 420.5 85.4A3.3 4.5 0 1 1 422.2 83.1M430.5 83.5A3.3 3.6 0 1 0 430.5 85.5V91.3M435.4 82.6V89.0H438.7M435.1 79.0h.6M440.4 89.0Q440.4 79.9 442.7 79.9Q443.7 79.9 443.7 84.5Q443.7 79.9 445.0 79.9Q447.0 79.9 447.0 89.0M455.3 83.5A3.3 3.6 0 1 0 455.3 85.5V91.3M457.0 81.7Q460.3 78.1 463.6 82.2Q463.6 89.0 460.3 89.0Q457.0 89.0 457.0 85.4Q460.3 83.5 461.3 86.3M468.6 84.5A1.5 2.0 0 1 1 470.2 85.4A3.3 4.5 0 1 1 471.9 83.1M476.9 82.6V89.0H480.2M476.6 79.0h.6" fill="none" stroke="#5b6167" stroke-width="1.25" stroke-linejoin="round" stroke-linecap="round"/>
<text x="438.9" y="120.1" font-size="11.5" text-anchor="middle" fill="#5b6167" font-weight="normal" letter-spacing="0.2" stroke="#fff" stroke-width="2.4" stroke-linejoin="round" paint-order="stroke" stroke-opacity=".9">Karamadai</text>
<path d="M411.6 131.1Q411.6 123.5 413.6 123.5Q414.4 123.5 414.4 127.3Q414.4 123.5 415.5 123.5Q417.2 123.5 417.2 131.1M418.6 131.1Q418.6 123.5 420.6 123.5Q421.4 123.5 421.4 127.3Q421.4 123.5 422.5 123.5Q424.2 123.5 424.2 131.1M425.6 123.5H431.2M426.5 123.5V128.4A2.0 2.7 0 0 0 431.2 128.4V126.1M432.6 125.0Q435.4 121.9 438.2 125.4Q438.2 131.1 435.4 131.1Q432.6 131.1 432.6 128.0Q435.4 126.5 436.3 128.8M439.6 131.1Q439.6 123.5 441.6 123.5Q442.4 123.5 442.4 127.3Q442.4 123.5 443.5 123.5Q445.2 123.5 445.2 131.1M449.4 127.3A1.3 1.7 0 1 1 450.8 128.0A2.8 3.8 0 1 1 452.2 126.1M456.4 127.3A1.3 1.7 0 1 1 457.8 128.0A2.8 3.8 0 1 1 459.2 126.1M460.6 125.0Q463.4 121.9 466.2 125.4Q466.2 131.1 463.4 131.1Q460.6 131.1 460.6 128.0Q463.4 126.5 464.3 128.8" fill="none" stroke="#fff" stroke-width="2.85" stroke-linejoin="round" stroke-linecap="round" opacity=".85"/><path d="M411.6 131.1Q411.6 123.5 413.6 123.5Q414.4 123.5 414.4 127.3Q414.4 123.5 415.5 123.5Q417.2 123.5 417.2 131.1M418.6 131.1Q418.6 123.5 420.6 123.5Q421.4 123.5 421.4 127.3Q421.4 123.5 422.5 123.5Q424.2 123.5 424.2 131.1M425.6 123.5H431.2M426.5 123.5V128.4A2.0 2.7 0 0 0 431.2 128.4V126.1M432.6 125.0Q435.4 121.9 438.2 125.4Q438.2 131.1 435.4 131.1Q432.6 131.1 432.6 128.0Q435.4 126.5 436.3 128.8M439.6 131.1Q439.6 123.5 441.6 123.5Q442.4 123.5 442.4 127.3Q442.4 123.5 443.5 123.5Q445.2 123.5 445.2 131.1M449.4 127.3A1.3 1.7 0 1 1 450.8 128.0A2.8 3.8 0 1 1 452.2 126.1M456.4 127.3A1.3 1.7 0 1 1 457.8 128.0A2.8 3.8 0 1 1 459.2 126.1M460.6 125.0Q463.4 121.9 466.2 125.4Q466.2 131.1 463.4 131.1Q460.6 131.1 460.6 128.0Q463.4 126.5 464.3 128.8" fill="none" stroke="#5b6167" stroke-width="1.25" stroke-linejoin="round" stroke-linecap="round"/>
<text x="546.7" y="128.1" font-size="11.5" text-anchor="middle" fill="#5b6167" font-weight="normal" letter-spacing="0.2" stroke="#fff" stroke-width="2.4" stroke-linejoin="round" paint-order="stroke" stroke-opacity=".9">Annur</text>
<path d="M522.7 135.5A1.2 1.8 0 1 1 524.1 136.3A2.8 4.0 0 1 1 525.4 134.3M532.3 134.7A2.8 3.2 0 1 0 532.3 136.5V141.6M536.4 135.5A1.2 1.8 0 1 1 537.8 136.3A2.8 4.0 0 1 1 539.2 134.3M540.6 139.6Q540.6 131.5 542.5 131.5Q543.3 131.5 543.3 135.5Q543.3 131.5 544.4 131.5Q546.1 131.5 546.1 139.6M552.9 134.7A2.8 3.2 0 1 0 552.9 136.5V141.6M557.1 135.5A1.2 1.8 0 1 1 558.4 136.3A2.8 4.0 0 1 1 559.8 134.3M563.9 135.5A1.2 1.8 0 1 1 565.3 136.3A2.8 4.0 0 1 1 566.7 134.3M570.8 133.9V139.6H573.6M570.5 130.7h.6" fill="none" stroke="#fff" stroke-width="2.85" stroke-linejoin="round" stroke-linecap="round" opacity=".85"/><path d="M522.7 135.5A1.2 1.8 0 1 1 524.1 136.3A2.8 4.0 0 1 1 525.4 134.3M532.3 134.7A2.8 3.2 0 1 0 532.3 136.5V141.6M536.4 135.5A1.2 1.8 0 1 1 537.8 136.3A2.8 4.0 0 1 1 539.2 134.3M540.6 139.6Q540.6 131.5 542.5 131.5Q543.3 131.5 543.3 135.5Q543.3 131.5 544.4 131.5Q546.1 131.5 546.1 139.6M552.9 134.7A2.8 3.2 0 1 0 552.9 136.5V141.6M557.1 135.5A1.2 1.8 0 1 1 558.4 136.3A2.8 4.0 0 1 1 559.8 134.3M563.9 135.5A1.2 1.8 0 1 1 565.3 136.3A2.8 4.0 0 1 1 566.7 134.3M570.8 133.9V139.6H573.6M570.5 130.7h.6" fill="none" stroke="#5b6167" stroke-width="1.25" stroke-linejoin="round" stroke-linecap="round"/>
<text x="591.7" y="39.1" font-size="11.5" text-anchor="middle" fill="#5b6167" font-weight="normal" letter-spacing="0.2" stroke="#fff" stroke-width="2.4" stroke-linejoin="round" paint-order="stroke" stroke-opacity=".9">Puliampatti</text>
<path d="M559.3 46.6A1.3 1.8 0 1 1 560.7 47.4A2.9 4.0 0 1 1 562.1 45.4M563.6 42.5H569.3M564.4 42.5V47.8A2.0 2.8 0 0 0 569.3 47.8V45.4M570.8 42.5H576.5M571.6 42.5V47.8A2.0 2.8 0 0 0 576.5 47.8V45.4M580.9 46.6A1.3 1.8 0 1 1 582.3 47.4A2.9 4.0 0 1 1 583.7 45.4M590.9 45.8A2.9 3.2 0 1 0 590.9 47.6V52.7M598.1 45.8A2.9 3.2 0 1 0 598.1 47.6V52.7M602.5 45.0V50.6H605.3M602.2 41.7h.6M612.5 45.8A2.9 3.2 0 1 0 612.5 47.6V52.7M619.7 45.8A2.9 3.2 0 1 0 619.7 47.6V52.7M624.1 46.6A1.3 1.8 0 1 1 625.5 47.4A2.9 4.0 0 1 1 626.9 45.4" fill="none" stroke="#fff" stroke-width="2.85" stroke-linejoin="round" stroke-linecap="round" opacity=".85"/><path d="M559.3 46.6A1.3 1.8 0 1 1 560.7 47.4A2.9 4.0 0 1 1 562.1 45.4M563.6 42.5H569.3M564.4 42.5V47.8A2.0 2.8 0 0 0 569.3 47.8V45.4M570.8 42.5H576.5M571.6 42.5V47.8A2.0 2.8 0 0 0 576.5 47.8V45.4M580.9 46.6A1.3 1.8 0 1 1 582.3 47.4A2.9 4.0 0 1 1 583.7 45.4M590.9 45.8A2.9 3.2 0 1 0 590.9 47.6V52.7M598.1 45.8A2.9 3.2 0 1 0 598.1 47.6V52.7M602.5 45.0V50.6H605.3M602.2 41.7h.6M612.5 45.8A2.9 3.2 0 1 0 612.5 47.6V52.7M619.7 45.8A2.9 3.2 0 1 0 619.7 47.6V52.7M624.1 46.6A1.3 1.8 0 1 1 625.5 47.4A2.9 4.0 0 1 1 626.9 45.4" fill="none" stroke="#5b6167" stroke-width="1.25" stroke-linejoin="round" stroke-linecap="round"/>
<text x="701.9" y="35.1" font-size="11.5" text-anchor="middle" fill="#5b6167" font-weight="normal" letter-spacing="0.2" stroke="#fff" stroke-width="2.4" stroke-linejoin="round" paint-order="stroke" stroke-opacity=".9">Nambiyur</text>
<path d="M676.7 40.2Q679.7 36.9 682.6 40.6Q682.6 46.6 679.7 46.6Q676.7 46.6 676.7 43.4Q679.7 41.8 680.6 44.2M687.1 41.0V46.6H690.1M686.8 37.7h.6M691.5 38.5H697.5M692.4 38.5V43.8A2.1 2.8 0 0 0 697.5 43.8V41.4M701.9 41.0V46.6H704.9M701.6 37.7h.6M706.4 46.6Q706.4 38.5 708.5 38.5Q709.4 38.5 709.4 42.6Q709.4 38.5 710.6 38.5Q712.3 38.5 712.3 46.6M713.8 46.6Q713.8 38.5 715.9 38.5Q716.8 38.5 716.8 42.6Q716.8 38.5 718.0 38.5Q719.8 38.5 719.8 46.6M724.2 42.6A1.3 1.8 0 1 1 725.7 43.4A3.0 4.0 0 1 1 727.2 41.4" fill="none" stroke="#fff" stroke-width="2.85" stroke-linejoin="round" stroke-linecap="round" opacity=".85"/><path d="M676.7 40.2Q679.7 36.9 682.6 40.6Q682.6 46.6 679.7 46.6Q676.7 46.6 676.7 43.4Q679.7 41.8 680.6 44.2M687.1 41.0V46.6H690.1M686.8 37.7h.6M691.5 38.5H697.5M692.4 38.5V43.8A2.1 2.8 0 0 0 697.5 43.8V41.4M701.9 41.0V46.6H704.9M701.6 37.7h.6M706.4 46.6Q706.4 38.5 708.5 38.5Q709.4 38.5 709.4 42.6Q709.4 38.5 710.6 38.5Q712.3 38.5 712.3 46.6M713.8 46.6Q713.8 38.5 715.9 38.5Q716.8 38.5 716.8 42.6Q716.8 38.5 718.0 38.5Q719.8 38.5 719.8 46.6M724.2 42.6A1.3 1.8 0 1 1 725.7 43.4A3.0 4.0 0 1 1 727.2 41.4" fill="none" stroke="#5b6167" stroke-width="1.25" stroke-linejoin="round" stroke-linecap="round"/>
<text x="766.4" y="101.8" font-size="11.5" text-anchor="middle" fill="#5b6167" font-weight="normal" letter-spacing="0.2" stroke="#fff" stroke-width="2.4" stroke-linejoin="round" paint-order="stroke" stroke-opacity=".9">Kunnathur</text>
<path d="M730.2 113.3Q730.2 105.2 732.2 105.2Q733.1 105.2 733.1 109.3Q733.1 105.2 734.3 105.2Q736.1 105.2 736.1 113.3M737.6 113.3Q737.6 105.2 739.6 105.2Q740.5 105.2 740.5 109.3Q740.5 105.2 741.7 105.2Q743.5 105.2 743.5 113.3M747.9 109.3A1.3 1.8 0 1 1 749.4 110.1A3.0 4.0 0 1 1 750.9 108.1M758.3 108.5A3.0 3.2 0 1 0 758.3 110.3V115.4M762.7 109.3A1.3 1.8 0 1 1 764.2 110.1A3.0 4.0 0 1 1 765.7 108.1M767.2 105.2H773.1M768.1 105.2V110.5A2.1 2.8 0 0 0 773.1 110.5V108.1M774.6 105.2H780.5M775.5 105.2V110.5A2.1 2.8 0 0 0 780.5 110.5V108.1M784.9 107.7V113.3H787.9M784.6 104.4h.6M792.3 109.3A1.3 1.8 0 1 1 793.8 110.1A3.0 4.0 0 1 1 795.3 108.1M799.7 109.3A1.3 1.8 0 1 1 801.2 110.1A3.0 4.0 0 1 1 802.7 108.1" fill="none" stroke="#fff" stroke-width="2.85" stroke-linejoin="round" stroke-linecap="round" opacity=".85"/><path d="M730.2 113.3Q730.2 105.2 732.2 105.2Q733.1 105.2 733.1 109.3Q733.1 105.2 734.3 105.2Q736.1 105.2 736.1 113.3M737.6 113.3Q737.6 105.2 739.6 105.2Q740.5 105.2 740.5 109.3Q740.5 105.2 741.7 105.2Q743.5 105.2 743.5 113.3M747.9 109.3A1.3 1.8 0 1 1 749.4 110.1A3.0 4.0 0 1 1 750.9 108.1M758.3 108.5A3.0 3.2 0 1 0 758.3 110.3V115.4M762.7 109.3A1.3 1.8 0 1 1 764.2 110.1A3.0 4.0 0 1 1 765.7 108.1M767.2 105.2H773.1M768.1 105.2V110.5A2.1 2.8 0 0 0 773.1 110.5V108.1M774.6 105.2H780.5M775.5 105.2V110.5A2.1 2.8 0 0 0 780.5 110.5V108.1M784.9 107.7V113.3H787.9M784.6 104.4h.6M792.3 109.3A1.3 1.8 0 1 1 793.8 110.1A3.0 4.0 0 1 1 795.3 108.1M799.7 109.3A1.3 1.8 0 1 1 801.2 110.1A3.0 4.0 0 1 1 802.7 108.1" fill="none" stroke="#5b6167" stroke-width="1.25" stroke-linejoin="round" stroke-linecap="round"/>
<text x="664.6" y="171.7" font-size="14.5" text-anchor="middle" fill="#5b6167" font-weight="normal" letter-spacing="0.2" stroke="#fff" stroke-width="2.4" stroke-linejoin="round" paint-order="stroke" stroke-opacity=".9">Avinashi</text>
<path d="M635.7 180.9A1.5 2.1 0 1 1 637.4 181.8A3.3 4.8 0 1 1 639.0 179.4M647.3 179.9A3.3 3.8 0 1 0 647.3 182.0V188.1M655.5 179.9A3.3 3.8 0 1 0 655.5 182.0V188.1M657.2 176.1H663.8M658.2 176.1V182.3A2.3 3.4 0 0 0 663.8 182.3V179.4M668.7 178.9V185.7H672.0M668.4 175.1h.6M673.7 178.0Q677.0 174.1 680.3 178.5Q680.3 185.7 677.0 185.7Q673.7 185.7 673.7 181.8Q677.0 179.9 678.0 182.8M681.9 176.1H688.5M682.9 176.1V182.3A2.3 3.4 0 0 0 688.5 182.3V179.4M696.8 179.9A3.3 3.8 0 1 0 696.8 182.0V188.1" fill="none" stroke="#fff" stroke-width="3.1500000000000004" stroke-linejoin="round" stroke-linecap="round" opacity=".85"/><path d="M635.7 180.9A1.5 2.1 0 1 1 637.4 181.8A3.3 4.8 0 1 1 639.0 179.4M647.3 179.9A3.3 3.8 0 1 0 647.3 182.0V188.1M655.5 179.9A3.3 3.8 0 1 0 655.5 182.0V188.1M657.2 176.1H663.8M658.2 176.1V182.3A2.3 3.4 0 0 0 663.8 182.3V179.4M668.7 178.9V185.7H672.0M668.4 175.1h.6M673.7 178.0Q677.0 174.1 680.3 178.5Q680.3 185.7 677.0 185.7Q673.7 185.7 673.7 181.8Q677.0 179.9 678.0 182.8M681.9 176.1H688.5M682.9 176.1V182.3A2.3 3.4 0 0 0 688.5 182.3V179.4M696.8 179.9A3.3 3.8 0 1 0 696.8 182.0V188.1" fill="none" stroke="#5b6167" stroke-width="1.55" stroke-linejoin="round" stroke-linecap="round"/>
<text x="716.8" y="219.7" font-size="16" text-anchor="middle" fill="#3b4046" font-weight="normal" letter-spacing="0.2" stroke="#fff" stroke-width="2.4" stroke-linejoin="round" paint-order="stroke" stroke-opacity=".9">Tiruppur</text>
<path d="M683.8 226.4Q687.7 221.8 691.6 227.0Q691.6 235.7 687.7 235.7Q683.8 235.7 683.8 231.0Q687.7 228.7 688.9 232.2M693.5 224.1H701.3M694.7 224.1V231.6A2.7 4.1 0 0 0 701.3 231.6V228.1M707.1 227.6V235.7H711.0M706.8 222.9h.6M713.0 224.1H720.7M714.1 224.1V231.6A2.7 4.1 0 0 0 720.7 231.6V228.1M730.4 228.7A3.9 4.6 0 1 0 730.4 231.3V238.6M736.3 227.6V235.7H740.2M736.0 222.9h.6M749.9 228.7A3.9 4.6 0 1 0 749.9 231.3V238.6" fill="none" stroke="#fff" stroke-width="3.1500000000000004" stroke-linejoin="round" stroke-linecap="round" opacity=".85"/><path d="M683.8 226.4Q687.7 221.8 691.6 227.0Q691.6 235.7 687.7 235.7Q683.8 235.7 683.8 231.0Q687.7 228.7 688.9 232.2M693.5 224.1H701.3M694.7 224.1V231.6A2.7 4.1 0 0 0 701.3 231.6V228.1M707.1 227.6V235.7H711.0M706.8 222.9h.6M713.0 224.1H720.7M714.1 224.1V231.6A2.7 4.1 0 0 0 720.7 231.6V228.1M730.4 228.7A3.9 4.6 0 1 0 730.4 231.3V238.6M736.3 227.6V235.7H740.2M736.0 222.9h.6M749.9 228.7A3.9 4.6 0 1 0 749.9 231.3V238.6" fill="none" stroke="#3b4046" stroke-width="1.55" stroke-linejoin="round" stroke-linecap="round"/>
<text x="791.5" y="185.0" font-size="11.5" text-anchor="middle" fill="#5b6167" font-weight="normal" letter-spacing="0.2" stroke="#fff" stroke-width="2.4" stroke-linejoin="round" paint-order="stroke" stroke-opacity=".9">Uthukuli</text>
<path d="M755.1 192.5A1.3 1.8 0 1 1 756.6 193.3A2.9 4.0 0 1 1 758.0 191.2M765.3 191.6A2.9 3.2 0 1 0 765.3 193.4V198.5M772.6 191.6A2.9 3.2 0 1 0 772.6 193.4V198.5M774.0 188.4H779.9M774.9 188.4V193.7A2.0 2.8 0 0 0 779.9 193.7V191.2M784.2 192.5A1.3 1.8 0 1 1 785.7 193.3A2.9 4.0 0 1 1 787.1 191.2M788.6 196.5Q788.6 188.4 790.6 188.4Q791.5 188.4 791.5 192.5Q791.5 188.4 792.7 188.4Q794.4 188.4 794.4 196.5M795.9 190.0Q798.8 186.8 801.7 190.4Q801.7 196.5 798.8 196.5Q795.9 196.5 795.9 193.3Q798.8 191.6 799.6 194.1M803.1 196.5Q803.1 188.4 805.2 188.4Q806.0 188.4 806.0 192.5Q806.0 188.4 807.2 188.4Q809.0 188.4 809.0 196.5M813.3 192.5A1.3 1.8 0 1 1 814.8 193.3A2.9 4.0 0 1 1 816.2 191.2M817.7 188.4H823.5M818.6 188.4V193.7A2.0 2.8 0 0 0 823.5 193.7V191.2M825.0 188.4H830.8M825.8 188.4V193.7A2.0 2.8 0 0 0 830.8 193.7V191.2" fill="none" stroke="#fff" stroke-width="2.85" stroke-linejoin="round" stroke-linecap="round" opacity=".85"/><path d="M755.1 192.5A1.3 1.8 0 1 1 756.6 193.3A2.9 4.0 0 1 1 758.0 191.2M765.3 191.6A2.9 3.2 0 1 0 765.3 193.4V198.5M772.6 191.6A2.9 3.2 0 1 0 772.6 193.4V198.5M774.0 188.4H779.9M774.9 188.4V193.7A2.0 2.8 0 0 0 779.9 193.7V191.2M784.2 192.5A1.3 1.8 0 1 1 785.7 193.3A2.9 4.0 0 1 1 787.1 191.2M788.6 196.5Q788.6 188.4 790.6 188.4Q791.5 188.4 791.5 192.5Q791.5 188.4 792.7 188.4Q794.4 188.4 794.4 196.5M795.9 190.0Q798.8 186.8 801.7 190.4Q801.7 196.5 798.8 196.5Q795.9 196.5 795.9 193.3Q798.8 191.6 799.6 194.1M803.1 196.5Q803.1 188.4 805.2 188.4Q806.0 188.4 806.0 192.5Q806.0 188.4 807.2 188.4Q809.0 188.4 809.0 196.5M813.3 192.5A1.3 1.8 0 1 1 814.8 193.3A2.9 4.0 0 1 1 816.2 191.2M817.7 188.4H823.5M818.6 188.4V193.7A2.0 2.8 0 0 0 823.5 193.7V191.2M825.0 188.4H830.8M825.8 188.4V193.7A2.0 2.8 0 0 0 830.8 193.7V191.2" fill="none" stroke="#5b6167" stroke-width="1.25" stroke-linejoin="round" stroke-linecap="round"/>
<text x="427.8" y="192.5" font-size="11.5" text-anchor="middle" fill="#5b6167" font-weight="normal" letter-spacing="0.25" stroke="#fff" stroke-width="2.4" stroke-linejoin="round" paint-order="stroke" stroke-opacity=".9">Periyanaickenpalayam</text>
<path d="M350.4 199.1A2.9 3.2 0 1 0 350.4 200.9V206.0M351.8 197.5Q354.8 194.3 357.7 197.9Q357.7 204.0 354.8 204.0Q351.8 204.0 351.8 200.8Q354.8 199.1 355.6 201.6M362.1 198.3V204.0H365.0M361.8 195.1h.6M366.4 197.5Q369.4 194.3 372.3 197.9Q372.3 204.0 369.4 204.0Q366.4 204.0 366.4 200.8Q369.4 199.1 370.2 201.6M376.7 200.0A1.3 1.8 0 1 1 378.1 200.8A2.9 4.0 0 1 1 379.6 198.7M384.0 200.0A1.3 1.8 0 1 1 385.4 200.8A2.9 4.0 0 1 1 386.9 198.7M388.4 195.9H394.2M389.2 195.9V201.2A2.0 2.8 0 0 0 394.2 201.2V198.7M395.7 195.9H401.5M396.5 195.9V201.2A2.0 2.8 0 0 0 401.5 201.2V198.7M408.8 199.1A2.9 3.2 0 1 0 408.8 200.9V206.0M410.3 204.0Q410.3 195.9 412.3 195.9Q413.2 195.9 413.2 200.0Q413.2 195.9 414.4 195.9Q416.1 195.9 416.1 204.0M420.5 200.0A1.3 1.8 0 1 1 422.0 200.8A2.9 4.0 0 1 1 423.4 198.7M424.9 197.5Q427.8 194.3 430.7 197.9Q430.7 204.0 427.8 204.0Q424.9 204.0 424.9 200.8Q427.8 199.1 428.7 201.6M432.2 204.0Q432.2 195.9 434.2 195.9Q435.1 195.9 435.1 200.0Q435.1 195.9 436.3 195.9Q438.0 195.9 438.0 204.0M439.5 204.0Q439.5 195.9 441.5 195.9Q442.4 195.9 442.4 200.0Q442.4 195.9 443.6 195.9Q445.3 195.9 445.3 204.0M452.6 199.1A2.9 3.2 0 1 0 452.6 200.9V206.0M457.0 200.0A1.3 1.8 0 1 1 458.5 200.8A2.9 4.0 0 1 1 459.9 198.7M464.3 200.0A1.3 1.8 0 1 1 465.8 200.8A2.9 4.0 0 1 1 467.2 198.7M471.6 200.0A1.3 1.8 0 1 1 473.1 200.8A2.9 4.0 0 1 1 474.5 198.7M476.0 195.9H481.9M476.9 195.9V201.2A2.0 2.8 0 0 0 481.9 201.2V198.7M483.3 197.5Q486.2 194.3 489.2 197.9Q489.2 204.0 486.2 204.0Q483.3 204.0 483.3 200.8Q486.2 199.1 487.1 201.6M493.5 198.3V204.0H496.5M493.2 195.1h.6M497.9 195.9H503.8M498.8 195.9V201.2A2.0 2.8 0 0 0 503.8 201.2V198.7M508.1 200.0A1.3 1.8 0 1 1 509.6 200.8A2.9 4.0 0 1 1 511.1 198.7" fill="none" stroke="#fff" stroke-width="2.85" stroke-linejoin="round" stroke-linecap="round" opacity=".85"/><path d="M350.4 199.1A2.9 3.2 0 1 0 350.4 200.9V206.0M351.8 197.5Q354.8 194.3 357.7 197.9Q357.7 204.0 354.8 204.0Q351.8 204.0 351.8 200.8Q354.8 199.1 355.6 201.6M362.1 198.3V204.0H365.0M361.8 195.1h.6M366.4 197.5Q369.4 194.3 372.3 197.9Q372.3 204.0 369.4 204.0Q366.4 204.0 366.4 200.8Q369.4 199.1 370.2 201.6M376.7 200.0A1.3 1.8 0 1 1 378.1 200.8A2.9 4.0 0 1 1 379.6 198.7M384.0 200.0A1.3 1.8 0 1 1 385.4 200.8A2.9 4.0 0 1 1 386.9 198.7M388.4 195.9H394.2M389.2 195.9V201.2A2.0 2.8 0 0 0 394.2 201.2V198.7M395.7 195.9H401.5M396.5 195.9V201.2A2.0 2.8 0 0 0 401.5 201.2V198.7M408.8 199.1A2.9 3.2 0 1 0 408.8 200.9V206.0M410.3 204.0Q410.3 195.9 412.3 195.9Q413.2 195.9 413.2 200.0Q413.2 195.9 414.4 195.9Q416.1 195.9 416.1 204.0M420.5 200.0A1.3 1.8 0 1 1 422.0 200.8A2.9 4.0 0 1 1 423.4 198.7M424.9 197.5Q427.8 194.3 430.7 197.9Q430.7 204.0 427.8 204.0Q424.9 204.0 424.9 200.8Q427.8 199.1 428.7 201.6M432.2 204.0Q432.2 195.9 434.2 195.9Q435.1 195.9 435.1 200.0Q435.1 195.9 436.3 195.9Q438.0 195.9 438.0 204.0M439.5 204.0Q439.5 195.9 441.5 195.9Q442.4 195.9 442.4 200.0Q442.4 195.9 443.6 195.9Q445.3 195.9 445.3 204.0M452.6 199.1A2.9 3.2 0 1 0 452.6 200.9V206.0M457.0 200.0A1.3 1.8 0 1 1 458.5 200.8A2.9 4.0 0 1 1 459.9 198.7M464.3 200.0A1.3 1.8 0 1 1 465.8 200.8A2.9 4.0 0 1 1 467.2 198.7M471.6 200.0A1.3 1.8 0 1 1 473.1 200.8A2.9 4.0 0 1 1 474.5 198.7M476.0 195.9H481.9M476.9 195.9V201.2A2.0 2.8 0 0 0 481.9 201.2V198.7M483.3 197.5Q486.2 194.3 489.2 197.9Q489.2 204.0 486.2 204.0Q483.3 204.0 483.3 200.8Q486.2 199.1 487.1 201.6M493.5 198.3V204.0H496.5M493.2 195.1h.6M497.9 195.9H503.8M498.8 195.9V201.2A2.0 2.8 0 0 0 503.8 201.2V198.7M508.1 200.0A1.3 1.8 0 1 1 509.6 200.8A2.9 4.0 0 1 1 511.1 198.7" fill="none" stroke="#5b6167" stroke-width="1.25" stroke-linejoin="round" stroke-linecap="round"/>
<text x="425.5" y="241.5" font-size="11.5" text-anchor="middle" fill="#5b6167" font-weight="normal" letter-spacing="0.2" stroke="#fff" stroke-width="2.4" stroke-linejoin="round" paint-order="stroke" stroke-opacity=".9">Thudiyalur</text>
<path d="M396.2 246.5Q399.2 243.3 402.2 246.9Q402.2 253.0 399.2 253.0Q396.2 253.0 396.2 249.8Q399.2 248.1 400.1 250.6M403.8 253.0Q403.8 244.9 405.9 244.9Q406.8 244.9 406.8 249.0Q406.8 244.9 407.9 244.9Q409.8 244.9 409.8 253.0M411.2 253.0Q411.2 244.9 413.4 244.9Q414.2 244.9 414.2 249.0Q414.2 244.9 415.4 244.9Q417.2 244.9 417.2 253.0M418.8 246.5Q421.8 243.3 424.8 246.9Q424.8 253.0 421.8 253.0Q418.8 253.0 418.8 249.8Q421.8 248.1 422.6 250.6M432.2 248.1A3.0 3.2 0 1 0 432.2 249.9V255.0M433.8 244.9H439.8M434.6 244.9V250.2A2.1 2.8 0 0 0 439.8 250.2V247.7M441.2 246.5Q444.2 243.3 447.2 246.9Q447.2 253.0 444.2 253.0Q441.2 253.0 441.2 249.8Q444.2 248.1 445.1 250.6M454.8 248.1A3.0 3.2 0 1 0 454.8 249.9V255.0" fill="none" stroke="#fff" stroke-width="2.85" stroke-linejoin="round" stroke-linecap="round" opacity=".85"/><path d="M396.2 246.5Q399.2 243.3 402.2 246.9Q402.2 253.0 399.2 253.0Q396.2 253.0 396.2 249.8Q399.2 248.1 400.1 250.6M403.8 253.0Q403.8 244.9 405.9 244.9Q406.8 244.9 406.8 249.0Q406.8 244.9 407.9 244.9Q409.8 244.9 409.8 253.0M411.2 253.0Q411.2 244.9 413.4 244.9Q414.2 244.9 414.2 249.0Q414.2 244.9 415.4 244.9Q417.2 244.9 417.2 253.0M418.8 246.5Q421.8 243.3 424.8 246.9Q424.8 253.0 421.8 253.0Q418.8 253.0 418.8 249.8Q421.8 248.1 422.6 250.6M432.2 248.1A3.0 3.2 0 1 0 432.2 249.9V255.0M433.8 244.9H439.8M434.6 244.9V250.2A2.1 2.8 0 0 0 439.8 250.2V247.7M441.2 246.5Q444.2 243.3 447.2 246.9Q447.2 253.0 444.2 253.0Q441.2 253.0 441.2 249.8Q444.2 248.1 445.1 250.6M454.8 248.1A3.0 3.2 0 1 0 454.8 249.9V255.0" fill="none" stroke="#5b6167" stroke-width="1.25" stroke-linejoin="round" stroke-linecap="round"/>
<text x="596.3" y="221.9" font-size="11.5" text-anchor="middle" fill="#5b6167" font-weight="normal" letter-spacing="0.25" stroke="#fff" stroke-width="2.4" stroke-linejoin="round" paint-order="stroke" stroke-opacity=".9">Karumathampatti</text>
<path d="M552.1 226.9Q555.1 223.7 558.1 227.3Q558.1 233.4 555.1 233.4Q552.1 233.4 552.1 230.2Q555.1 228.5 556.0 231.0M559.6 225.3H565.6M560.5 225.3V230.6A2.1 2.8 0 0 0 565.6 230.6V228.1M573.1 228.5A3.0 3.2 0 1 0 573.1 230.3V235.4M574.6 225.3H580.6M575.5 225.3V230.6A2.1 2.8 0 0 0 580.6 230.6V228.1M585.1 227.7V233.4H588.1M584.8 224.5h.6M589.6 225.3H595.6M590.5 225.3V230.6A2.1 2.8 0 0 0 595.6 230.6V228.1M597.1 233.4Q597.1 225.3 599.2 225.3Q600.1 225.3 600.1 229.4Q600.1 225.3 601.3 225.3Q603.1 225.3 603.1 233.4M604.6 225.3H610.6M605.5 225.3V230.6A2.1 2.8 0 0 0 610.6 230.6V228.1M612.1 226.9Q615.1 223.7 618.1 227.3Q618.1 233.4 615.1 233.4Q612.1 233.4 612.1 230.2Q615.1 228.5 616.0 231.0M619.6 225.3H625.6M620.5 225.3V230.6A2.1 2.8 0 0 0 625.6 230.6V228.1M630.1 227.7V233.4H633.1M629.8 224.5h.6M634.6 225.3H640.6M635.5 225.3V230.6A2.1 2.8 0 0 0 640.6 230.6V228.1" fill="none" stroke="#fff" stroke-width="2.85" stroke-linejoin="round" stroke-linecap="round" opacity=".85"/><path d="M552.1 226.9Q555.1 223.7 558.1 227.3Q558.1 233.4 555.1 233.4Q552.1 233.4 552.1 230.2Q555.1 228.5 556.0 231.0M559.6 225.3H565.6M560.5 225.3V230.6A2.1 2.8 0 0 0 565.6 230.6V228.1M573.1 228.5A3.0 3.2 0 1 0 573.1 230.3V235.4M574.6 225.3H580.6M575.5 225.3V230.6A2.1 2.8 0 0 0 580.6 230.6V228.1M585.1 227.7V233.4H588.1M584.8 224.5h.6M589.6 225.3H595.6M590.5 225.3V230.6A2.1 2.8 0 0 0 595.6 230.6V228.1M597.1 233.4Q597.1 225.3 599.2 225.3Q600.1 225.3 600.1 229.4Q600.1 225.3 601.3 225.3Q603.1 225.3 603.1 233.4M604.6 225.3H610.6M605.5 225.3V230.6A2.1 2.8 0 0 0 610.6 230.6V228.1M612.1 226.9Q615.1 223.7 618.1 227.3Q618.1 233.4 615.1 233.4Q612.1 233.4 612.1 230.2Q615.1 228.5 616.0 231.0M619.6 225.3H625.6M620.5 225.3V230.6A2.1 2.8 0 0 0 625.6 230.6V228.1M630.1 227.7V233.4H633.1M629.8 224.5h.6M634.6 225.3H640.6M635.5 225.3V230.6A2.1 2.8 0 0 0 640.6 230.6V228.1" fill="none" stroke="#5b6167" stroke-width="1.25" stroke-linejoin="round" stroke-linecap="round"/>
<text x="436.6" y="287.0" font-size="16.5" text-anchor="middle" fill="#2c3035" font-weight="bold" letter-spacing="0.2" stroke="#fff" stroke-width="2.4" stroke-linejoin="round" paint-order="stroke" stroke-opacity=".9">Coimbatore</text>
<text x="559.4" y="281.9" font-size="11.5" text-anchor="middle" fill="#5b6167" font-weight="normal" letter-spacing="0.2" stroke="#fff" stroke-width="2.4" stroke-linejoin="round" paint-order="stroke" stroke-opacity=".9">Sulur</text>
<path d="M540.1 285.3H545.4M540.9 285.3V290.3A1.9 2.7 0 0 0 545.4 290.3V288.0M549.4 287.6V292.9H552.1M549.1 284.6h.6M556.1 287.6V292.9H558.8M555.8 284.6h.6M560.1 286.9Q562.8 283.8 565.4 287.2Q565.4 292.9 562.8 292.9Q560.1 292.9 560.1 289.9Q562.8 288.4 563.6 290.7M566.8 285.3H572.1M567.6 285.3V290.3A1.9 2.7 0 0 0 572.1 290.3V288.0M576.1 287.6V292.9H578.8M575.8 284.6h.6" fill="none" stroke="#fff" stroke-width="2.85" stroke-linejoin="round" stroke-linecap="round" opacity=".85"/><path d="M540.1 285.3H545.4M540.9 285.3V290.3A1.9 2.7 0 0 0 545.4 290.3V288.0M549.4 287.6V292.9H552.1M549.1 284.6h.6M556.1 287.6V292.9H558.8M555.8 284.6h.6M560.1 286.9Q562.8 283.8 565.4 287.2Q565.4 292.9 562.8 292.9Q560.1 292.9 560.1 289.9Q562.8 288.4 563.6 290.7M566.8 285.3H572.1M567.6 285.3V290.3A1.9 2.7 0 0 0 572.1 290.3V288.0M576.1 287.6V292.9H578.8M575.8 284.6h.6" fill="none" stroke="#5b6167" stroke-width="1.25" stroke-linejoin="round" stroke-linecap="round"/>
<text x="675.7" y="301.9" font-size="11.5" text-anchor="middle" fill="#5b6167" font-weight="normal" letter-spacing="0.2" stroke="#fff" stroke-width="2.4" stroke-linejoin="round" paint-order="stroke" stroke-opacity=".9">Palladam</text>
<text x="714.6" y="4.9" font-size="11.5" text-anchor="middle" fill="#5b6167" font-weight="normal" letter-spacing="0.2" stroke="#fff" stroke-width="2.4" stroke-linejoin="round" paint-order="stroke" stroke-opacity=".9">Munampally</text>
<text x="990.8" y="46.2" font-size="16" text-anchor="middle" fill="#3b4046" font-weight="normal" letter-spacing="0.2" stroke="#fff" stroke-width="2.4" stroke-linejoin="round" paint-order="stroke" stroke-opacity=".9">Erode</text>
<path d="M971.2 55.1A3.7 4.4 0 1 0 971.2 57.5V64.5M980.5 55.1A3.7 4.4 0 1 0 980.5 57.5V64.5M982.4 52.9Q986.1 48.4 989.8 53.4Q989.8 61.7 986.1 61.7Q982.4 61.7 982.4 57.3Q986.1 55.1 987.2 58.4M995.4 56.2A1.7 2.4 0 1 1 997.3 57.3A3.7 5.5 0 1 1 999.2 54.5M1008.5 55.1A3.7 4.4 0 1 0 1008.5 57.5V64.5M1014.1 56.2A1.7 2.4 0 1 1 1016.0 57.3A3.7 5.5 0 1 1 1017.8 54.5" fill="none" stroke="#fff" stroke-width="3.1500000000000004" stroke-linejoin="round" stroke-linecap="round" opacity=".85"/><path d="M971.2 55.1A3.7 4.4 0 1 0 971.2 57.5V64.5M980.5 55.1A3.7 4.4 0 1 0 980.5 57.5V64.5M982.4 52.9Q986.1 48.4 989.8 53.4Q989.8 61.7 986.1 61.7Q982.4 61.7 982.4 57.3Q986.1 55.1 987.2 58.4M995.4 56.2A1.7 2.4 0 1 1 997.3 57.3A3.7 5.5 0 1 1 999.2 54.5M1008.5 55.1A3.7 4.4 0 1 0 1008.5 57.5V64.5M1014.1 56.2A1.7 2.4 0 1 1 1016.0 57.3A3.7 5.5 0 1 1 1017.8 54.5" fill="none" stroke="#3b4046" stroke-width="1.55" stroke-linejoin="round" stroke-linecap="round"/>
<text x="1120.2" y="17.8" font-size="14.5" text-anchor="middle" fill="#5b6167" font-weight="normal" letter-spacing="0.2" stroke="#fff" stroke-width="2.4" stroke-linejoin="round" paint-order="stroke" stroke-opacity=".9">Tiruchengode</text>
<path d="M1064.8 27.5A1.7 2.3 0 1 1 1066.6 28.5A3.7 5.3 0 1 1 1068.5 25.9M1074.0 27.5A1.7 2.3 0 1 1 1075.9 28.5A3.7 5.3 0 1 1 1077.7 25.9M1083.3 27.5A1.7 2.3 0 1 1 1085.1 28.5A3.7 5.3 0 1 1 1086.9 25.9M1088.8 24.3Q1092.5 20.1 1096.2 24.8Q1096.2 32.8 1092.5 32.8Q1088.8 32.8 1088.8 28.5Q1092.5 26.4 1093.6 29.6M1098.0 32.8Q1098.0 22.2 1100.6 22.2Q1101.7 22.2 1101.7 27.5Q1101.7 22.2 1103.2 22.2Q1105.4 22.2 1105.4 32.8M1107.3 22.2H1114.6M1108.4 22.2V29.1A2.6 3.7 0 0 0 1114.6 29.1V25.9M1120.2 25.4V32.8H1123.9M1119.9 21.1h.6M1129.4 25.4V32.8H1133.1M1129.1 21.1h.6M1142.3 26.4A3.7 4.2 0 1 0 1142.3 28.8V35.4M1144.2 32.8Q1144.2 22.2 1146.8 22.2Q1147.9 22.2 1147.9 27.5Q1147.9 22.2 1149.3 22.2Q1151.6 22.2 1151.6 32.8M1160.8 26.4A3.7 4.2 0 1 0 1160.8 28.8V35.4M1162.6 24.3Q1166.3 20.1 1170.0 24.8Q1170.0 32.8 1166.3 32.8Q1162.6 32.8 1162.6 28.5Q1166.3 26.4 1167.4 29.6M1179.3 26.4A3.7 4.2 0 1 0 1179.3 28.8V35.4" fill="none" stroke="#fff" stroke-width="3.1500000000000004" stroke-linejoin="round" stroke-linecap="round" opacity=".85"/><path d="M1064.8 27.5A1.7 2.3 0 1 1 1066.6 28.5A3.7 5.3 0 1 1 1068.5 25.9M1074.0 27.5A1.7 2.3 0 1 1 1075.9 28.5A3.7 5.3 0 1 1 1077.7 25.9M1083.3 27.5A1.7 2.3 0 1 1 1085.1 28.5A3.7 5.3 0 1 1 1086.9 25.9M1088.8 24.3Q1092.5 20.1 1096.2 24.8Q1096.2 32.8 1092.5 32.8Q1088.8 32.8 1088.8 28.5Q1092.5 26.4 1093.6 29.6M1098.0 32.8Q1098.0 22.2 1100.6 22.2Q1101.7 22.2 1101.7 27.5Q1101.7 22.2 1103.2 22.2Q1105.4 22.2 1105.4 32.8M1107.3 22.2H1114.6M1108.4 22.2V29.1A2.6 3.7 0 0 0 1114.6 29.1V25.9M1120.2 25.4V32.8H1123.9M1119.9 21.1h.6M1129.4 25.4V32.8H1133.1M1129.1 21.1h.6M1142.3 26.4A3.7 4.2 0 1 0 1142.3 28.8V35.4M1144.2 32.8Q1144.2 22.2 1146.8 22.2Q1147.9 22.2 1147.9 27.5Q1147.9 22.2 1149.3 22.2Q1151.6 22.2 1151.6 32.8M1160.8 26.4A3.7 4.2 0 1 0 1160.8 28.8V35.4M1162.6 24.3Q1166.3 20.1 1170.0 24.8Q1170.0 32.8 1166.3 32.8Q1162.6 32.8 1162.6 28.5Q1166.3 26.4 1167.4 29.6M1179.3 26.4A3.7 4.2 0 1 0 1179.3 28.8V35.4" fill="none" stroke="#5b6167" stroke-width="1.55" stroke-linejoin="round" stroke-linecap="round"/>
<text x="892.9" y="96.9" font-size="11.5" text-anchor="middle" fill="#5b6167" font-weight="normal" letter-spacing="0.2" stroke="#fff" stroke-width="2.4" stroke-linejoin="round" paint-order="stroke" stroke-opacity=".9">Perundurai</text>
<path d="M854.6 108.4Q854.6 100.3 856.6 100.3Q857.5 100.3 857.5 104.4Q857.5 100.3 858.6 100.3Q860.3 100.3 860.3 108.4M861.7 102.0Q864.6 98.7 867.4 102.4Q867.4 108.4 864.6 108.4Q861.7 108.4 861.7 105.2Q864.6 103.6 865.4 106.0M868.8 100.3H874.5M869.7 100.3V105.6A2.0 2.8 0 0 0 874.5 105.6V103.2M878.8 102.8V108.4H881.6M878.5 99.5h.6M885.8 104.4A1.3 1.8 0 1 1 887.3 105.2A2.8 4.0 0 1 1 888.7 103.2M890.1 100.3H895.8M891.0 100.3V105.6A2.0 2.8 0 0 0 895.8 105.6V103.2M897.2 100.3H902.9M898.0 100.3V105.6A2.0 2.8 0 0 0 902.9 105.6V103.2M910.0 103.6A2.8 3.2 0 1 0 910.0 105.4V110.5M911.4 102.0Q914.2 98.7 917.0 102.4Q917.0 108.4 914.2 108.4Q911.4 108.4 911.4 105.2Q914.2 103.6 915.1 106.0M921.3 102.8V108.4H924.1M921.0 99.5h.6M925.6 102.0Q928.4 98.7 931.2 102.4Q931.2 108.4 928.4 108.4Q925.6 108.4 925.6 105.2Q928.4 103.6 929.2 106.0" fill="none" stroke="#fff" stroke-width="2.85" stroke-linejoin="round" stroke-linecap="round" opacity=".85"/><path d="M854.6 108.4Q854.6 100.3 856.6 100.3Q857.5 100.3 857.5 104.4Q857.5 100.3 858.6 100.3Q860.3 100.3 860.3 108.4M861.7 102.0Q864.6 98.7 867.4 102.4Q867.4 108.4 864.6 108.4Q861.7 108.4 861.7 105.2Q864.6 103.6 865.4 106.0M868.8 100.3H874.5M869.7 100.3V105.6A2.0 2.8 0 0 0 874.5 105.6V103.2M878.8 102.8V108.4H881.6M878.5 99.5h.6M885.8 104.4A1.3 1.8 0 1 1 887.3 105.2A2.8 4.0 0 1 1 888.7 103.2M890.1 100.3H895.8M891.0 100.3V105.6A2.0 2.8 0 0 0 895.8 105.6V103.2M897.2 100.3H902.9M898.0 100.3V105.6A2.0 2.8 0 0 0 902.9 105.6V103.2M910.0 103.6A2.8 3.2 0 1 0 910.0 105.4V110.5M911.4 102.0Q914.2 98.7 917.0 102.4Q917.0 108.4 914.2 108.4Q911.4 108.4 911.4 105.2Q914.2 103.6 915.1 106.0M921.3 102.8V108.4H924.1M921.0 99.5h.6M925.6 102.0Q928.4 98.7 931.2 102.4Q931.2 108.4 928.4 108.4Q925.6 108.4 925.6 105.2Q928.4 103.6 929.2 106.0" fill="none" stroke="#5b6167" stroke-width="1.25" stroke-linejoin="round" stroke-linecap="round"/>
<text x="908.9" y="176.3" font-size="11.5" text-anchor="middle" fill="#5b6167" font-weight="normal" letter-spacing="0.2" stroke="#fff" stroke-width="2.4" stroke-linejoin="round" paint-order="stroke" stroke-opacity=".9">Chennimalai</text>
<path d="M865.7 181.3Q868.6 178.1 871.5 181.7Q871.5 187.8 868.6 187.8Q865.7 187.8 865.7 184.6Q868.6 183.0 869.5 185.4M875.9 183.8A1.3 1.8 0 1 1 877.4 184.6A2.9 4.0 0 1 1 878.9 182.6M880.3 187.8Q880.3 179.7 882.4 179.7Q883.3 179.7 883.3 183.8Q883.3 179.7 884.5 179.7Q886.2 179.7 886.2 187.8M887.7 179.7H893.5M888.6 179.7V185.0A2.1 2.8 0 0 0 893.5 185.0V182.6M895.0 179.7H900.9M895.9 179.7V185.0A2.1 2.8 0 0 0 900.9 185.0V182.6M905.3 182.2V187.8H908.2M905.0 178.9h.6M912.6 183.8A1.3 1.8 0 1 1 914.1 184.6A2.9 4.0 0 1 1 915.5 182.6M919.9 183.8A1.3 1.8 0 1 1 921.4 184.6A2.9 4.0 0 1 1 922.9 182.6M924.3 187.8Q924.3 179.7 926.4 179.7Q927.3 179.7 927.3 183.8Q927.3 179.7 928.5 179.7Q930.2 179.7 930.2 187.8M937.5 183.0A2.9 3.2 0 1 0 937.5 184.7V189.8M944.9 183.0A2.9 3.2 0 1 0 944.9 184.7V189.8M946.3 179.7H952.2M947.2 179.7V185.0A2.1 2.8 0 0 0 952.2 185.0V182.6" fill="none" stroke="#fff" stroke-width="2.85" stroke-linejoin="round" stroke-linecap="round" opacity=".85"/><path d="M865.7 181.3Q868.6 178.1 871.5 181.7Q871.5 187.8 868.6 187.8Q865.7 187.8 865.7 184.6Q868.6 183.0 869.5 185.4M875.9 183.8A1.3 1.8 0 1 1 877.4 184.6A2.9 4.0 0 1 1 878.9 182.6M880.3 187.8Q880.3 179.7 882.4 179.7Q883.3 179.7 883.3 183.8Q883.3 179.7 884.5 179.7Q886.2 179.7 886.2 187.8M887.7 179.7H893.5M888.6 179.7V185.0A2.1 2.8 0 0 0 893.5 185.0V182.6M895.0 179.7H900.9M895.9 179.7V185.0A2.1 2.8 0 0 0 900.9 185.0V182.6M905.3 182.2V187.8H908.2M905.0 178.9h.6M912.6 183.8A1.3 1.8 0 1 1 914.1 184.6A2.9 4.0 0 1 1 915.5 182.6M919.9 183.8A1.3 1.8 0 1 1 921.4 184.6A2.9 4.0 0 1 1 922.9 182.6M924.3 187.8Q924.3 179.7 926.4 179.7Q927.3 179.7 927.3 183.8Q927.3 179.7 928.5 179.7Q930.2 179.7 930.2 187.8M937.5 183.0A2.9 3.2 0 1 0 937.5 184.7V189.8M944.9 183.0A2.9 3.2 0 1 0 944.9 184.7V189.8M946.3 179.7H952.2M947.2 179.7V185.0A2.1 2.8 0 0 0 952.2 185.0V182.6" fill="none" stroke="#5b6167" stroke-width="1.25" stroke-linejoin="round" stroke-linecap="round"/>
<text x="1042.4" y="213.0" font-size="11.5" text-anchor="middle" fill="#5b6167" font-weight="normal" letter-spacing="0.2" stroke="#fff" stroke-width="2.4" stroke-linejoin="round" paint-order="stroke" stroke-opacity=".9">Sivagiri</text>
<path d="M1023.2 220.5A1.4 1.8 0 1 1 1024.7 221.3A3.1 4.0 0 1 1 1026.3 219.2M1030.9 220.5A1.4 1.8 0 1 1 1032.4 221.3A3.1 4.0 0 1 1 1033.9 219.2M1035.5 216.4H1041.6M1036.4 216.4V221.7A2.1 2.8 0 0 0 1041.6 221.7V219.2M1043.1 224.5Q1043.1 216.4 1045.3 216.4Q1046.2 216.4 1046.2 220.5Q1046.2 216.4 1047.4 216.4Q1049.3 216.4 1049.3 224.5M1050.8 224.5Q1050.8 216.4 1052.9 216.4Q1053.9 216.4 1053.9 220.5Q1053.9 216.4 1055.1 216.4Q1056.9 216.4 1056.9 224.5M1058.5 218.0Q1061.5 214.8 1064.6 218.4Q1064.6 224.5 1061.5 224.5Q1058.5 224.5 1058.5 221.3Q1061.5 219.6 1062.4 222.1" fill="none" stroke="#fff" stroke-width="2.85" stroke-linejoin="round" stroke-linecap="round" opacity=".85"/><path d="M1023.2 220.5A1.4 1.8 0 1 1 1024.7 221.3A3.1 4.0 0 1 1 1026.3 219.2M1030.9 220.5A1.4 1.8 0 1 1 1032.4 221.3A3.1 4.0 0 1 1 1033.9 219.2M1035.5 216.4H1041.6M1036.4 216.4V221.7A2.1 2.8 0 0 0 1041.6 221.7V219.2M1043.1 224.5Q1043.1 216.4 1045.3 216.4Q1046.2 216.4 1046.2 220.5Q1046.2 216.4 1047.4 216.4Q1049.3 216.4 1049.3 224.5M1050.8 224.5Q1050.8 216.4 1052.9 216.4Q1053.9 216.4 1053.9 220.5Q1053.9 216.4 1055.1 216.4Q1056.9 216.4 1056.9 224.5M1058.5 218.0Q1061.5 214.8 1064.6 218.4Q1064.6 224.5 1061.5 224.5Q1058.5 224.5 1058.5 221.3Q1061.5 219.6 1062.4 222.1" fill="none" stroke="#5b6167" stroke-width="1.25" stroke-linejoin="round" stroke-linecap="round"/>
<text x="1114.2" y="241.9" font-size="11.5" text-anchor="middle" fill="#5b6167" font-weight="normal" letter-spacing="0.2" stroke="#fff" stroke-width="2.4" stroke-linejoin="round" paint-order="stroke" stroke-opacity=".9">Kodumudi</text>
<path d="M1083.9 246.9Q1086.6 243.7 1089.4 247.3Q1089.4 253.4 1086.6 253.4Q1083.9 253.4 1083.9 250.2Q1086.6 248.6 1087.4 251.0M1090.8 245.3H1096.3M1091.6 245.3V250.6A1.9 2.8 0 0 0 1096.3 250.6V248.1M1100.4 249.4A1.2 1.8 0 1 1 1101.8 250.2A2.8 4.0 0 1 1 1103.2 248.1M1104.5 253.4Q1104.5 245.3 1106.5 245.3Q1107.3 245.3 1107.3 249.4Q1107.3 245.3 1108.4 245.3Q1110.0 245.3 1110.0 253.4M1111.4 245.3H1116.9M1112.2 245.3V250.6A1.9 2.8 0 0 0 1116.9 250.6V248.1M1123.8 248.6A2.8 3.2 0 1 0 1123.8 250.3V255.4M1125.2 253.4Q1125.2 245.3 1127.1 245.3Q1128.0 245.3 1128.0 249.4Q1128.0 245.3 1129.1 245.3Q1130.7 245.3 1130.7 253.4M1134.8 247.7V253.4H1137.6M1134.5 244.5h.6M1141.7 247.7V253.4H1144.5M1141.4 244.5h.6" fill="none" stroke="#fff" stroke-width="2.85" stroke-linejoin="round" stroke-linecap="round" opacity=".85"/><path d="M1083.9 246.9Q1086.6 243.7 1089.4 247.3Q1089.4 253.4 1086.6 253.4Q1083.9 253.4 1083.9 250.2Q1086.6 248.6 1087.4 251.0M1090.8 245.3H1096.3M1091.6 245.3V250.6A1.9 2.8 0 0 0 1096.3 250.6V248.1M1100.4 249.4A1.2 1.8 0 1 1 1101.8 250.2A2.8 4.0 0 1 1 1103.2 248.1M1104.5 253.4Q1104.5 245.3 1106.5 245.3Q1107.3 245.3 1107.3 249.4Q1107.3 245.3 1108.4 245.3Q1110.0 245.3 1110.0 253.4M1111.4 245.3H1116.9M1112.2 245.3V250.6A1.9 2.8 0 0 0 1116.9 250.6V248.1M1123.8 248.6A2.8 3.2 0 1 0 1123.8 250.3V255.4M1125.2 253.4Q1125.2 245.3 1127.1 245.3Q1128.0 245.3 1128.0 249.4Q1128.0 245.3 1129.1 245.3Q1130.7 245.3 1130.7 253.4M1134.8 247.7V253.4H1137.6M1134.5 244.5h.6M1141.7 247.7V253.4H1144.5M1141.4 244.5h.6" fill="none" stroke="#5b6167" stroke-width="1.25" stroke-linejoin="round" stroke-linecap="round"/>
<text x="1004.1" y="267.5" font-size="11.5" text-anchor="middle" fill="#5b6167" font-weight="normal" letter-spacing="0.2" stroke="#fff" stroke-width="2.4" stroke-linejoin="round" paint-order="stroke" stroke-opacity=".9">Muthur</text>
<path d="M984.9 273.3V279.0H988.0M984.6 270.1h.6M989.5 272.5Q992.6 269.3 995.7 272.9Q995.7 279.0 992.6 279.0Q989.5 279.0 989.5 275.7Q992.6 274.1 993.5 276.6M997.2 272.5Q1000.3 269.3 1003.3 272.9Q1003.3 279.0 1000.3 279.0Q997.2 279.0 997.2 275.7Q1000.3 274.1 1001.2 276.6M1004.9 270.9H1011.0M1005.8 270.9V276.1A2.1 2.8 0 0 0 1011.0 276.1V273.7M1012.5 272.5Q1015.6 269.3 1018.7 272.9Q1018.7 279.0 1015.6 279.0Q1012.5 279.0 1012.5 275.7Q1015.6 274.1 1016.5 276.6M1023.3 274.9A1.4 1.8 0 1 1 1024.8 275.7A3.1 4.0 0 1 1 1026.3 273.7" fill="none" stroke="#fff" stroke-width="2.85" stroke-linejoin="round" stroke-linecap="round" opacity=".85"/><path d="M984.9 273.3V279.0H988.0M984.6 270.1h.6M989.5 272.5Q992.6 269.3 995.7 272.9Q995.7 279.0 992.6 279.0Q989.5 279.0 989.5 275.7Q992.6 274.1 993.5 276.6M997.2 272.5Q1000.3 269.3 1003.3 272.9Q1003.3 279.0 1000.3 279.0Q997.2 279.0 997.2 275.7Q1000.3 274.1 1001.2 276.6M1004.9 270.9H1011.0M1005.8 270.9V276.1A2.1 2.8 0 0 0 1011.0 276.1V273.7M1012.5 272.5Q1015.6 269.3 1018.7 272.9Q1018.7 279.0 1015.6 279.0Q1012.5 279.0 1012.5 275.7Q1015.6 274.1 1016.5 276.6M1023.3 274.9A1.4 1.8 0 1 1 1024.8 275.7A3.1 4.0 0 1 1 1026.3 273.7" fill="none" stroke="#5b6167" stroke-width="1.25" stroke-linejoin="round" stroke-linecap="round"/>
<text x="877.8" y="299.7" font-size="11.5" text-anchor="middle" fill="#5b6167" font-weight="normal" letter-spacing="0.2" stroke="#fff" stroke-width="2.4" stroke-linejoin="round" paint-order="stroke" stroke-opacity=".9">Kangeyam</text>
<text x="1368.9" y="92.5" font-size="11.5" text-anchor="middle" fill="#5b6167" font-weight="normal" letter-spacing="0.2" stroke="#fff" stroke-width="2.4" stroke-linejoin="round" paint-order="stroke" stroke-opacity=".9">Senthamangalam</text>
<path d="M1327.6 99.9A1.4 1.8 0 1 1 1329.1 100.8A3.0 4.0 0 1 1 1330.6 98.7M1338.1 99.1A3.0 3.2 0 1 0 1338.1 100.9V106.0M1339.6 104.0Q1339.6 95.9 1341.7 95.9Q1342.6 95.9 1342.6 99.9Q1342.6 95.9 1343.8 95.9Q1345.6 95.9 1345.6 104.0M1350.1 98.3V104.0H1353.1M1349.8 95.1h.6M1354.6 104.0Q1354.6 95.9 1356.7 95.9Q1357.6 95.9 1357.6 99.9Q1357.6 95.9 1358.8 95.9Q1360.6 95.9 1360.6 104.0M1365.1 99.9A1.4 1.8 0 1 1 1366.6 100.8A3.0 4.0 0 1 1 1368.1 98.7M1372.6 99.9A1.4 1.8 0 1 1 1374.1 100.8A3.0 4.0 0 1 1 1375.6 98.7M1377.1 97.5Q1380.1 94.3 1383.1 97.9Q1383.1 104.0 1380.1 104.0Q1377.1 104.0 1377.1 100.8Q1380.1 99.1 1381.0 101.6M1387.6 98.3V104.0H1390.6M1387.3 95.1h.6M1395.1 99.9A1.4 1.8 0 1 1 1396.6 100.8A3.0 4.0 0 1 1 1398.1 98.7M1405.6 99.1A3.0 3.2 0 1 0 1405.6 100.9V106.0M1410.1 99.9A1.4 1.8 0 1 1 1411.6 100.8A3.0 4.0 0 1 1 1413.1 98.7" fill="none" stroke="#fff" stroke-width="2.85" stroke-linejoin="round" stroke-linecap="round" opacity=".85"/><path d="M1327.6 99.9A1.4 1.8 0 1 1 1329.1 100.8A3.0 4.0 0 1 1 1330.6 98.7M1338.1 99.1A3.0 3.2 0 1 0 1338.1 100.9V106.0M1339.6 104.0Q1339.6 95.9 1341.7 95.9Q1342.6 95.9 1342.6 99.9Q1342.6 95.9 1343.8 95.9Q1345.6 95.9 1345.6 104.0M1350.1 98.3V104.0H1353.1M1349.8 95.1h.6M1354.6 104.0Q1354.6 95.9 1356.7 95.9Q1357.6 95.9 1357.6 99.9Q1357.6 95.9 1358.8 95.9Q1360.6 95.9 1360.6 104.0M1365.1 99.9A1.4 1.8 0 1 1 1366.6 100.8A3.0 4.0 0 1 1 1368.1 98.7M1372.6 99.9A1.4 1.8 0 1 1 1374.1 100.8A3.0 4.0 0 1 1 1375.6 98.7M1377.1 97.5Q1380.1 94.3 1383.1 97.9Q1383.1 104.0 1380.1 104.0Q1377.1 104.0 1377.1 100.8Q1380.1 99.1 1381.0 101.6M1387.6 98.3V104.0H1390.6M1387.3 95.1h.6M1395.1 99.9A1.4 1.8 0 1 1 1396.6 100.8A3.0 4.0 0 1 1 1398.1 98.7M1405.6 99.1A3.0 3.2 0 1 0 1405.6 100.9V106.0M1410.1 99.9A1.4 1.8 0 1 1 1411.6 100.8A3.0 4.0 0 1 1 1413.1 98.7" fill="none" stroke="#5b6167" stroke-width="1.25" stroke-linejoin="round" stroke-linecap="round"/>
<text x="1319.1" y="138.3" font-size="15.5" text-anchor="middle" fill="#3b4046" font-weight="normal" letter-spacing="0.2" stroke="#fff" stroke-width="2.4" stroke-linejoin="round" paint-order="stroke" stroke-opacity=".9">Namakkal</text>
<path d="M1289.9 145.7V152.8H1293.8M1289.6 141.7h.6M1295.8 152.8Q1295.8 142.7 1298.5 142.7Q1299.7 142.7 1299.7 147.7Q1299.7 142.7 1301.2 142.7Q1303.5 142.7 1303.5 152.8M1305.5 152.8Q1305.5 142.7 1308.2 142.7Q1309.4 142.7 1309.4 147.7Q1309.4 142.7 1310.9 142.7Q1313.3 142.7 1313.3 152.8M1315.2 142.7H1323.0M1316.4 142.7V149.3A2.7 3.5 0 0 0 1323.0 149.3V146.2M1328.8 147.7A1.7 2.2 0 1 1 1330.7 148.8A3.9 5.0 0 1 1 1332.7 146.2M1338.5 147.7A1.7 2.2 0 1 1 1340.5 148.8A3.9 5.0 0 1 1 1342.4 146.2M1352.1 146.7A3.9 4.0 0 1 0 1352.1 149.0V155.3" fill="none" stroke="#fff" stroke-width="3.1500000000000004" stroke-linejoin="round" stroke-linecap="round" opacity=".85"/><path d="M1289.9 145.7V152.8H1293.8M1289.6 141.7h.6M1295.8 152.8Q1295.8 142.7 1298.5 142.7Q1299.7 142.7 1299.7 147.7Q1299.7 142.7 1301.2 142.7Q1303.5 142.7 1303.5 152.8M1305.5 152.8Q1305.5 142.7 1308.2 142.7Q1309.4 142.7 1309.4 147.7Q1309.4 142.7 1310.9 142.7Q1313.3 142.7 1313.3 152.8M1315.2 142.7H1323.0M1316.4 142.7V149.3A2.7 3.5 0 0 0 1323.0 149.3V146.2M1328.8 147.7A1.7 2.2 0 1 1 1330.7 148.8A3.9 5.0 0 1 1 1332.7 146.2M1338.5 147.7A1.7 2.2 0 1 1 1340.5 148.8A3.9 5.0 0 1 1 1342.4 146.2M1352.1 146.7A3.9 4.0 0 1 0 1352.1 149.0V155.3" fill="none" stroke="#3b4046" stroke-width="1.55" stroke-linejoin="round" stroke-linecap="round"/>
<text x="1215.7" y="187.0" font-size="11.5" text-anchor="middle" fill="#5b6167" font-weight="normal" letter-spacing="0.2" stroke="#fff" stroke-width="2.4" stroke-linejoin="round" paint-order="stroke" stroke-opacity=".9">Paramathi</text>
<path d="M1192.4 192.0Q1195.1 188.8 1197.9 192.4Q1197.9 198.5 1195.1 198.5Q1192.4 198.5 1192.4 195.3Q1195.1 193.6 1195.9 196.1M1199.2 198.5Q1199.2 190.4 1201.2 190.4Q1202.0 190.4 1202.0 194.4Q1202.0 190.4 1203.1 190.4Q1204.7 190.4 1204.7 198.5M1208.8 192.8V198.5H1211.6M1208.5 189.6h.6M1215.7 194.4A1.2 1.8 0 1 1 1217.1 195.3A2.7 4.0 0 1 1 1218.4 193.2M1222.6 192.8V198.5H1225.3M1222.3 189.6h.6M1229.4 192.8V198.5H1232.2M1229.1 189.6h.6M1236.3 192.8V198.5H1239.0M1236.0 189.6h.6" fill="none" stroke="#fff" stroke-width="2.85" stroke-linejoin="round" stroke-linecap="round" opacity=".85"/><path d="M1192.4 192.0Q1195.1 188.8 1197.9 192.4Q1197.9 198.5 1195.1 198.5Q1192.4 198.5 1192.4 195.3Q1195.1 193.6 1195.9 196.1M1199.2 198.5Q1199.2 190.4 1201.2 190.4Q1202.0 190.4 1202.0 194.4Q1202.0 190.4 1203.1 190.4Q1204.7 190.4 1204.7 198.5M1208.8 192.8V198.5H1211.6M1208.5 189.6h.6M1215.7 194.4A1.2 1.8 0 1 1 1217.1 195.3A2.7 4.0 0 1 1 1218.4 193.2M1222.6 192.8V198.5H1225.3M1222.3 189.6h.6M1229.4 192.8V198.5H1232.2M1229.1 189.6h.6M1236.3 192.8V198.5H1239.0M1236.0 189.6h.6" fill="none" stroke="#5b6167" stroke-width="1.25" stroke-linejoin="round" stroke-linecap="round"/>
<text x="1199.9" y="217.0" font-size="11.5" text-anchor="middle" fill="#5b6167" font-weight="normal" letter-spacing="0.2" stroke="#fff" stroke-width="2.4" stroke-linejoin="round" paint-order="stroke" stroke-opacity=".9">Velur</text>
<text x="1414.0" y="187.0" font-size="11.5" text-anchor="middle" fill="#5b6167" font-weight="normal" letter-spacing="0.2" stroke="#fff" stroke-width="2.4" stroke-linejoin="round" paint-order="stroke" stroke-opacity=".9">Erumapatti</text>
<path d="M1385.8 190.4H1391.6M1386.6 190.4V195.7A2.0 2.8 0 0 0 1391.6 195.7V193.2M1393.0 198.5Q1393.0 190.4 1395.0 190.4Q1395.9 190.4 1395.9 194.4Q1395.9 190.4 1397.1 190.4Q1398.8 190.4 1398.8 198.5M1400.3 198.5Q1400.3 190.4 1402.3 190.4Q1403.2 190.4 1403.2 194.4Q1403.2 190.4 1404.3 190.4Q1406.1 190.4 1406.1 198.5M1410.4 194.4A1.3 1.8 0 1 1 1411.9 195.3A2.9 4.0 0 1 1 1413.3 193.2M1417.7 192.8V198.5H1420.6M1417.4 189.6h.6M1427.8 193.6A2.9 3.2 0 1 0 1427.8 195.4V200.5M1432.2 194.4A1.3 1.8 0 1 1 1433.6 195.3A2.9 4.0 0 1 1 1435.1 193.2M1442.3 193.6A2.9 3.2 0 1 0 1442.3 195.4V200.5" fill="none" stroke="#fff" stroke-width="2.85" stroke-linejoin="round" stroke-linecap="round" opacity=".85"/><path d="M1385.8 190.4H1391.6M1386.6 190.4V195.7A2.0 2.8 0 0 0 1391.6 195.7V193.2M1393.0 198.5Q1393.0 190.4 1395.0 190.4Q1395.9 190.4 1395.9 194.4Q1395.9 190.4 1397.1 190.4Q1398.8 190.4 1398.8 198.5M1400.3 198.5Q1400.3 190.4 1402.3 190.4Q1403.2 190.4 1403.2 194.4Q1403.2 190.4 1404.3 190.4Q1406.1 190.4 1406.1 198.5M1410.4 194.4A1.3 1.8 0 1 1 1411.9 195.3A2.9 4.0 0 1 1 1413.3 193.2M1417.7 192.8V198.5H1420.6M1417.4 189.6h.6M1427.8 193.6A2.9 3.2 0 1 0 1427.8 195.4V200.5M1432.2 194.4A1.3 1.8 0 1 1 1433.6 195.3A2.9 4.0 0 1 1 1435.1 193.2M1442.3 193.6A2.9 3.2 0 1 0 1442.3 195.4V200.5" fill="none" stroke="#5b6167" stroke-width="1.25" stroke-linejoin="round" stroke-linecap="round"/>
<text x="1300.6" y="256.4" font-size="11.5" text-anchor="middle" fill="#5b6167" font-weight="normal" letter-spacing="0.2" stroke="#fff" stroke-width="2.4" stroke-linejoin="round" paint-order="stroke" stroke-opacity=".9">Mohanur</text>
<path d="M1272.2 263.8A1.3 1.8 0 1 1 1273.6 264.6A2.8 4.0 0 1 1 1275.0 262.6M1282.1 263.0A2.8 3.2 0 1 0 1282.1 264.8V269.9M1283.6 261.4Q1286.4 258.1 1289.3 261.8Q1289.3 267.9 1286.4 267.9Q1283.6 267.9 1283.6 264.6Q1286.4 263.0 1287.3 265.4M1293.5 263.8A1.3 1.8 0 1 1 1294.9 264.6A2.8 4.0 0 1 1 1296.4 262.6M1297.8 261.4Q1300.6 258.1 1303.5 261.8Q1303.5 267.9 1300.6 267.9Q1297.8 267.9 1297.8 264.6Q1300.6 263.0 1301.5 265.4M1307.7 262.2V267.9H1310.6M1307.4 259.0h.6M1317.7 263.0A2.8 3.2 0 1 0 1317.7 264.8V269.9M1324.8 263.0A2.8 3.2 0 1 0 1324.8 264.8V269.9M1326.2 261.4Q1329.1 258.1 1331.9 261.8Q1331.9 267.9 1329.1 267.9Q1326.2 267.9 1326.2 264.6Q1329.1 263.0 1329.9 265.4" fill="none" stroke="#fff" stroke-width="2.85" stroke-linejoin="round" stroke-linecap="round" opacity=".85"/><path d="M1272.2 263.8A1.3 1.8 0 1 1 1273.6 264.6A2.8 4.0 0 1 1 1275.0 262.6M1282.1 263.0A2.8 3.2 0 1 0 1282.1 264.8V269.9M1283.6 261.4Q1286.4 258.1 1289.3 261.8Q1289.3 267.9 1286.4 267.9Q1283.6 267.9 1283.6 264.6Q1286.4 263.0 1287.3 265.4M1293.5 263.8A1.3 1.8 0 1 1 1294.9 264.6A2.8 4.0 0 1 1 1296.4 262.6M1297.8 261.4Q1300.6 258.1 1303.5 261.8Q1303.5 267.9 1300.6 267.9Q1297.8 267.9 1297.8 264.6Q1300.6 263.0 1301.5 265.4M1307.7 262.2V267.9H1310.6M1307.4 259.0h.6M1317.7 263.0A2.8 3.2 0 1 0 1317.7 264.8V269.9M1324.8 263.0A2.8 3.2 0 1 0 1324.8 264.8V269.9M1326.2 261.4Q1329.1 258.1 1331.9 261.8Q1331.9 267.9 1329.1 267.9Q1326.2 267.9 1326.2 264.6Q1329.1 263.0 1329.9 265.4" fill="none" stroke="#5b6167" stroke-width="1.25" stroke-linejoin="round" stroke-linecap="round"/>
<text x="1553.0" y="110.1" font-size="11.5" text-anchor="middle" fill="#5b6167" font-weight="normal" letter-spacing="0.2" stroke="#fff" stroke-width="2.4" stroke-linejoin="round" paint-order="stroke" stroke-opacity=".9">Uooiliy</text>
<text x="1354.0" y="301.9" font-size="11" text-anchor="middle" fill="#5b6167" font-weight="normal" letter-spacing="0.2" stroke="#fff" stroke-width="2.4" stroke-linejoin="round" paint-order="stroke" stroke-opacity=".9">Kattuputhur</text>
<path d="M254.9 7.0A1.4 1.9 0 1 1 256.4 7.8A3.1 4.2 0 1 1 257.9 5.7M259.5 4.5Q262.6 1.0 265.7 4.9Q265.7 11.2 262.6 11.2Q259.5 11.2 259.5 7.8Q262.6 6.2 263.5 8.7M270.3 7.0A1.4 1.9 0 1 1 271.8 7.8A3.1 4.2 0 1 1 273.4 5.7M278.0 7.0A1.4 1.9 0 1 1 279.5 7.8A3.1 4.2 0 1 1 281.1 5.7M285.7 7.0A1.4 1.9 0 1 1 287.3 7.8A3.1 4.2 0 1 1 288.8 5.7M293.4 5.3V11.2H296.5M293.1 1.9h.6M301.1 7.0A1.4 1.9 0 1 1 302.7 7.8A3.1 4.2 0 1 1 304.2 5.7M305.8 11.2Q305.8 2.8 307.9 2.8Q308.9 2.8 308.9 7.0Q308.9 2.8 310.1 2.8Q311.9 2.8 311.9 11.2M319.7 6.2A3.1 3.4 0 1 0 319.7 8.0V13.4M324.3 5.3V11.2H327.4M324.0 1.9h.6M328.9 11.2Q328.9 2.8 331.1 2.8Q332.0 2.8 332.0 7.0Q332.0 2.8 333.2 2.8Q335.1 2.8 335.1 11.2M342.8 6.2A3.1 3.4 0 1 0 342.8 8.0V13.4M347.4 5.3V11.2H350.5M347.1 1.9h.6M355.1 5.3V11.2H358.2M354.8 1.9h.6" fill="none" stroke="#fff" stroke-width="2.8" stroke-linejoin="round" stroke-linecap="round" opacity=".85"/><path d="M254.9 7.0A1.4 1.9 0 1 1 256.4 7.8A3.1 4.2 0 1 1 257.9 5.7M259.5 4.5Q262.6 1.0 265.7 4.9Q265.7 11.2 262.6 11.2Q259.5 11.2 259.5 7.8Q262.6 6.2 263.5 8.7M270.3 7.0A1.4 1.9 0 1 1 271.8 7.8A3.1 4.2 0 1 1 273.4 5.7M278.0 7.0A1.4 1.9 0 1 1 279.5 7.8A3.1 4.2 0 1 1 281.1 5.7M285.7 7.0A1.4 1.9 0 1 1 287.3 7.8A3.1 4.2 0 1 1 288.8 5.7M293.4 5.3V11.2H296.5M293.1 1.9h.6M301.1 7.0A1.4 1.9 0 1 1 302.7 7.8A3.1 4.2 0 1 1 304.2 5.7M305.8 11.2Q305.8 2.8 307.9 2.8Q308.9 2.8 308.9 7.0Q308.9 2.8 310.1 2.8Q311.9 2.8 311.9 11.2M319.7 6.2A3.1 3.4 0 1 0 319.7 8.0V13.4M324.3 5.3V11.2H327.4M324.0 1.9h.6M328.9 11.2Q328.9 2.8 331.1 2.8Q332.0 2.8 332.0 7.0Q332.0 2.8 333.2 2.8Q335.1 2.8 335.1 11.2M342.8 6.2A3.1 3.4 0 1 0 342.8 8.0V13.4M347.4 5.3V11.2H350.5M347.1 1.9h.6M355.1 5.3V11.2H358.2M354.8 1.9h.6" fill="none" stroke="#5b6167" stroke-width="1.2" stroke-linejoin="round" stroke-linecap="round"/>
<path d="M9.6 260.9Q12.1 258.1 14.5 261.2Q14.5 266.5 12.1 266.5Q9.6 266.5 9.6 263.7Q12.1 262.3 12.8 264.4M20.7 262.3A2.5 2.8 0 1 0 20.7 263.8V268.2M26.8 262.3A2.5 2.8 0 1 0 26.8 263.8V268.2M33.0 262.3A2.5 2.8 0 1 0 33.0 263.8V268.2M34.2 260.9Q36.6 258.1 39.1 261.2Q39.1 266.5 36.6 266.5Q34.2 266.5 34.2 263.7Q36.6 262.3 37.4 264.4M42.8 263.0A1.1 1.5 0 1 1 44.0 263.7A2.5 3.5 0 1 1 45.2 261.9M46.5 260.9Q48.9 258.1 51.4 261.2Q51.4 266.5 48.9 266.5Q46.5 266.5 46.5 263.7Q48.9 262.3 49.7 264.4M52.6 260.9Q55.1 258.1 57.5 261.2Q57.5 266.5 55.1 266.5Q52.6 266.5 52.6 263.7Q55.1 262.3 55.8 264.4M61.2 263.0A1.1 1.5 0 1 1 62.4 263.7A2.5 3.5 0 1 1 63.7 261.9M64.9 266.5Q64.9 259.5 66.6 259.5Q67.4 259.5 67.4 263.0Q67.4 259.5 68.3 259.5Q69.8 259.5 69.8 266.5M71.0 260.9Q73.5 258.1 76.0 261.2Q76.0 266.5 73.5 266.5Q71.0 266.5 71.0 263.7Q73.5 262.3 74.2 264.4M79.6 263.0A1.1 1.5 0 1 1 80.9 263.7A2.5 3.5 0 1 1 82.1 261.9M88.2 262.3A2.5 2.8 0 1 0 88.2 263.8V268.2M91.9 263.0A1.1 1.5 0 1 1 93.2 263.7A2.5 3.5 0 1 1 94.4 261.9" fill="none" stroke="#fff" stroke-width="2.6" stroke-linejoin="round" stroke-linecap="round" opacity=".85"/><path d="M9.6 260.9Q12.1 258.1 14.5 261.2Q14.5 266.5 12.1 266.5Q9.6 266.5 9.6 263.7Q12.1 262.3 12.8 264.4M20.7 262.3A2.5 2.8 0 1 0 20.7 263.8V268.2M26.8 262.3A2.5 2.8 0 1 0 26.8 263.8V268.2M33.0 262.3A2.5 2.8 0 1 0 33.0 263.8V268.2M34.2 260.9Q36.6 258.1 39.1 261.2Q39.1 266.5 36.6 266.5Q34.2 266.5 34.2 263.7Q36.6 262.3 37.4 264.4M42.8 263.0A1.1 1.5 0 1 1 44.0 263.7A2.5 3.5 0 1 1 45.2 261.9M46.5 260.9Q48.9 258.1 51.4 261.2Q51.4 266.5 48.9 266.5Q46.5 266.5 46.5 263.7Q48.9 262.3 49.7 264.4M52.6 260.9Q55.1 258.1 57.5 261.2Q57.5 266.5 55.1 266.5Q52.6 266.5 52.6 263.7Q55.1 262.3 55.8 264.4M61.2 263.0A1.1 1.5 0 1 1 62.4 263.7A2.5 3.5 0 1 1 63.7 261.9M64.9 266.5Q64.9 259.5 66.6 259.5Q67.4 259.5 67.4 263.0Q67.4 259.5 68.3 259.5Q69.8 259.5 69.8 266.5M71.0 260.9Q73.5 258.1 76.0 261.2Q76.0 266.5 73.5 266.5Q71.0 266.5 71.0 263.7Q73.5 262.3 74.2 264.4M79.6 263.0A1.1 1.5 0 1 1 80.9 263.7A2.5 3.5 0 1 1 82.1 261.9M88.2 262.3A2.5 2.8 0 1 0 88.2 263.8V268.2M91.9 263.0A1.1 1.5 0 1 1 93.2 263.7A2.5 3.5 0 1 1 94.4 261.9" fill="none" stroke="#3c8a44" stroke-width="1.0" stroke-linejoin="round" stroke-linecap="round"/>
<path d="M12.6 270.5H17.5M13.4 270.5V275.1A1.7 2.4 0 0 0 17.5 275.1V272.9M21.2 272.6V277.5H23.7M20.9 269.8h.6M27.4 274.0A1.1 1.5 0 1 1 28.6 274.7A2.5 3.5 0 1 1 29.8 272.9M36.0 273.3A2.5 2.8 0 1 0 36.0 274.8V279.2M37.2 271.9Q39.7 269.1 42.2 272.2Q42.2 277.5 39.7 277.5Q37.2 277.5 37.2 274.7Q39.7 273.3 40.4 275.4M45.8 272.6V277.5H48.3M45.5 269.8h.6M54.5 273.3A2.5 2.8 0 1 0 54.5 274.8V279.2M55.7 277.5Q55.7 270.5 57.4 270.5Q58.2 270.5 58.2 274.0Q58.2 270.5 59.1 270.5Q60.6 270.5 60.6 277.5M64.3 274.0A1.1 1.5 0 1 1 65.5 274.7A2.5 3.5 0 1 1 66.8 272.9M68.0 277.5Q68.0 270.5 69.7 270.5Q70.5 270.5 70.5 274.0Q70.5 270.5 71.4 270.5Q72.9 270.5 72.9 277.5M74.2 277.5Q74.2 270.5 75.9 270.5Q76.6 270.5 76.6 274.0Q76.6 270.5 77.6 270.5Q79.1 270.5 79.1 277.5M80.3 270.5H85.2M81.0 270.5V275.1A1.7 2.4 0 0 0 85.2 275.1V272.9M88.9 272.6V277.5H91.4M88.6 269.8h.6" fill="none" stroke="#fff" stroke-width="2.6" stroke-linejoin="round" stroke-linecap="round" opacity=".85"/><path d="M12.6 270.5H17.5M13.4 270.5V275.1A1.7 2.4 0 0 0 17.5 275.1V272.9M21.2 272.6V277.5H23.7M20.9 269.8h.6M27.4 274.0A1.1 1.5 0 1 1 28.6 274.7A2.5 3.5 0 1 1 29.8 272.9M36.0 273.3A2.5 2.8 0 1 0 36.0 274.8V279.2M37.2 271.9Q39.7 269.1 42.2 272.2Q42.2 277.5 39.7 277.5Q37.2 277.5 37.2 274.7Q39.7 273.3 40.4 275.4M45.8 272.6V277.5H48.3M45.5 269.8h.6M54.5 273.3A2.5 2.8 0 1 0 54.5 274.8V279.2M55.7 277.5Q55.7 270.5 57.4 270.5Q58.2 270.5 58.2 274.0Q58.2 270.5 59.1 270.5Q60.6 270.5 60.6 277.5M64.3 274.0A1.1 1.5 0 1 1 65.5 274.7A2.5 3.5 0 1 1 66.8 272.9M68.0 277.5Q68.0 270.5 69.7 270.5Q70.5 270.5 70.5 274.0Q70.5 270.5 71.4 270.5Q72.9 270.5 72.9 277.5M74.2 277.5Q74.2 270.5 75.9 270.5Q76.6 270.5 76.6 274.0Q76.6 270.5 77.6 270.5Q79.1 270.5 79.1 277.5M80.3 270.5H85.2M81.0 270.5V275.1A1.7 2.4 0 0 0 85.2 275.1V272.9M88.9 272.6V277.5H91.4M88.6 269.8h.6" fill="none" stroke="#3c8a44" stroke-width="1.0" stroke-linejoin="round" stroke-linecap="round"/>
<path d="M377.1 298.4Q381.5 293.6 385.8 299.0Q385.8 308.0 381.5 308.0Q377.1 308.0 377.1 303.2Q381.5 300.8 382.8 304.4M388.0 296.0H396.7M389.3 296.0V303.8A3.1 4.2 0 0 0 396.7 303.8V300.2M398.9 298.4Q403.3 293.6 407.6 299.0Q407.6 308.0 403.3 308.0Q398.9 308.0 398.9 303.2Q403.3 300.8 404.6 304.4M409.8 296.0H418.5M411.1 296.0V303.8A3.1 4.2 0 0 0 418.5 303.8V300.2M420.7 308.0Q420.7 296.0 423.8 296.0Q425.1 296.0 425.1 302.0Q425.1 296.0 426.8 296.0Q429.5 296.0 429.5 308.0M436.0 299.6V308.0H440.4M435.7 294.8h.6M451.3 300.8A4.4 4.8 0 1 0 451.3 303.4V311.0M462.2 300.8A4.4 4.8 0 1 0 462.2 303.4V311.0M464.4 296.0H473.1M465.7 296.0V303.8A3.1 4.2 0 0 0 473.1 303.8V300.2M475.3 308.0Q475.3 296.0 478.3 296.0Q479.6 296.0 479.6 302.0Q479.6 296.0 481.4 296.0Q484.0 296.0 484.0 308.0M494.9 300.8A4.4 4.8 0 1 0 494.9 303.4V311.0" fill="none" stroke="#fff" stroke-width="3.4000000000000004" stroke-linejoin="round" stroke-linecap="round" opacity=".85"/><path d="M377.1 298.4Q381.5 293.6 385.8 299.0Q385.8 308.0 381.5 308.0Q377.1 308.0 377.1 303.2Q381.5 300.8 382.8 304.4M388.0 296.0H396.7M389.3 296.0V303.8A3.1 4.2 0 0 0 396.7 303.8V300.2M398.9 298.4Q403.3 293.6 407.6 299.0Q407.6 308.0 403.3 308.0Q398.9 308.0 398.9 303.2Q403.3 300.8 404.6 304.4M409.8 296.0H418.5M411.1 296.0V303.8A3.1 4.2 0 0 0 418.5 303.8V300.2M420.7 308.0Q420.7 296.0 423.8 296.0Q425.1 296.0 425.1 302.0Q425.1 296.0 426.8 296.0Q429.5 296.0 429.5 308.0M436.0 299.6V308.0H440.4M435.7 294.8h.6M451.3 300.8A4.4 4.8 0 1 0 451.3 303.4V311.0M462.2 300.8A4.4 4.8 0 1 0 462.2 303.4V311.0M464.4 296.0H473.1M465.7 296.0V303.8A3.1 4.2 0 0 0 473.1 303.8V300.2M475.3 308.0Q475.3 296.0 478.3 296.0Q479.6 296.0 479.6 302.0Q479.6 296.0 481.4 296.0Q484.0 296.0 484.0 308.0M494.9 300.8A4.4 4.8 0 1 0 494.9 303.4V311.0" fill="none" stroke="#2c3035" stroke-width="1.8" stroke-linejoin="round" stroke-linecap="round"/>
<path d="M1230.6 227.5V232.8H1233.4M1230.3 224.5h.6M1234.8 232.8Q1234.8 225.2 1236.8 225.2Q1237.7 225.2 1237.7 229.0Q1237.7 225.2 1238.8 225.2Q1240.5 225.2 1240.5 232.8M1241.9 225.2H1247.6M1242.8 225.2V230.1A2.0 2.6 0 0 0 1247.6 230.1V227.9M1251.9 227.5V232.8H1254.7M1251.6 224.5h.6M1261.8 228.2A2.8 3.0 0 1 0 1261.8 229.9V234.6M1263.3 225.2H1269.0M1264.1 225.2V230.1A2.0 2.6 0 0 0 1269.0 230.1V227.9M1270.4 225.2H1276.1M1271.2 225.2V230.1A2.0 2.6 0 0 0 1276.1 230.1V227.9M1283.2 228.2A2.8 3.0 0 1 0 1283.2 229.9V234.6M1284.6 225.2H1290.3M1285.5 225.2V230.1A2.0 2.6 0 0 0 1290.3 230.1V227.9" fill="none" stroke="#fff" stroke-width="2.6500000000000004" stroke-linejoin="round" stroke-linecap="round" opacity=".85"/><path d="M1230.6 227.5V232.8H1233.4M1230.3 224.5h.6M1234.8 232.8Q1234.8 225.2 1236.8 225.2Q1237.7 225.2 1237.7 229.0Q1237.7 225.2 1238.8 225.2Q1240.5 225.2 1240.5 232.8M1241.9 225.2H1247.6M1242.8 225.2V230.1A2.0 2.6 0 0 0 1247.6 230.1V227.9M1251.9 227.5V232.8H1254.7M1251.6 224.5h.6M1261.8 228.2A2.8 3.0 0 1 0 1261.8 229.9V234.6M1263.3 225.2H1269.0M1264.1 225.2V230.1A2.0 2.6 0 0 0 1269.0 230.1V227.9M1270.4 225.2H1276.1M1271.2 225.2V230.1A2.0 2.6 0 0 0 1276.1 230.1V227.9M1283.2 228.2A2.8 3.0 0 1 0 1283.2 229.9V234.6M1284.6 225.2H1290.3M1285.5 225.2V230.1A2.0 2.6 0 0 0 1290.3 230.1V227.9" fill="none" stroke="#5b6167" stroke-width="1.05" stroke-linejoin="round" stroke-linecap="round"/>
<path d="M1528.7 219.8Q1531.3 216.8 1534.0 220.1Q1534.0 225.8 1531.3 225.8Q1528.7 225.8 1528.7 222.8Q1531.3 221.2 1532.1 223.5M1535.3 225.8Q1535.3 218.2 1537.2 218.2Q1538.0 218.2 1538.0 222.0Q1538.0 218.2 1539.1 218.2Q1540.7 218.2 1540.7 225.8M1542.0 218.2H1547.3M1542.8 218.2V223.1A1.9 2.6 0 0 0 1547.3 223.1V220.9M1548.7 218.2H1554.0M1549.5 218.2V223.1A1.9 2.6 0 0 0 1554.0 223.1V220.9M1555.3 218.2H1560.7M1556.1 218.2V223.1A1.9 2.6 0 0 0 1560.7 223.1V220.9M1567.3 221.2A2.7 3.0 0 1 0 1567.3 222.9V227.6" fill="none" stroke="#fff" stroke-width="2.6500000000000004" stroke-linejoin="round" stroke-linecap="round" opacity=".85"/><path d="M1528.7 219.8Q1531.3 216.8 1534.0 220.1Q1534.0 225.8 1531.3 225.8Q1528.7 225.8 1528.7 222.8Q1531.3 221.2 1532.1 223.5M1535.3 225.8Q1535.3 218.2 1537.2 218.2Q1538.0 218.2 1538.0 222.0Q1538.0 218.2 1539.1 218.2Q1540.7 218.2 1540.7 225.8M1542.0 218.2H1547.3M1542.8 218.2V223.1A1.9 2.6 0 0 0 1547.3 223.1V220.9M1548.7 218.2H1554.0M1549.5 218.2V223.1A1.9 2.6 0 0 0 1554.0 223.1V220.9M1555.3 218.2H1560.7M1556.1 218.2V223.1A1.9 2.6 0 0 0 1560.7 223.1V220.9M1567.3 221.2A2.7 3.0 0 1 0 1567.3 222.9V227.6" fill="none" stroke="#5b6167" stroke-width="1.05" stroke-linejoin="round" stroke-linecap="round"/>
<text x="1511.9" y="201.2" font-size="11.5" text-anchor="middle" fill="#5b6167" font-weight="normal" letter-spacing="0.2" stroke="#fff" stroke-width="2.4" stroke-linejoin="round" paint-order="stroke" stroke-opacity=".9">N K</text>
</g>
<g font-family="&quot;Liberation Sans&quot;,sans-serif">
<path d="M357.3 43.5H373.4Q375.6 43.5 375.6 45.7V54.7Q375.6 56.7 365.3 58.7Q355.1 56.7 355.1 54.7V45.7Q355.1 43.5 357.3 43.5Z" fill="#fbd23a" stroke="#e8b923" stroke-width=".8"/><text x="365.3" y="54.5" font-size="8.6" font-weight="bold" text-anchor="middle" fill="#4a3b06">181</text>
<path d="M531.2 10.3H546.7Q548.0 13.1 548.2 16.1Q548.2 21.8 539.0 24.3Q529.7 21.8 529.7 16.1Q529.9 13.1 531.2 10.3Z" fill="#fff" stroke="#6b6f72" stroke-width=".9"/><path d="M531.3 10.0H546.6L547.2 12.2H530.7Z" fill="#5e9e45"/><text x="539.0" y="20.9" font-size="8.4" text-anchor="middle" fill="#2f3337" stroke="#2f3337" stroke-width=".25">15</text>
<path d="M512.9 44.3H530.4Q531.7 47.1 531.9 50.1Q531.9 55.8 521.6 58.3Q511.4 55.8 511.4 50.1Q511.6 47.1 512.9 44.3Z" fill="#fff" stroke="#6b6f72" stroke-width=".9"/><path d="M513.0 44.0H530.3L530.9 46.2H512.4Z" fill="#5e9e45"/><text x="521.6" y="54.9" font-size="8.4" text-anchor="middle" fill="#2f3337" stroke="#2f3337" stroke-width=".25">170</text>
<path d="M659.2 74.1H676.7Q678.0 76.9 678.2 79.9Q678.2 85.6 667.9 88.1Q657.7 85.6 657.7 79.9Q657.9 76.9 659.2 74.1Z" fill="#fff" stroke="#6b6f72" stroke-width=".9"/><path d="M659.3 73.8H676.6L677.2 76.0H658.7Z" fill="#5e9e45"/><text x="667.9" y="84.7" font-size="8.4" text-anchor="middle" fill="#2f3337" stroke="#2f3337" stroke-width=".25">15A</text>
<path d="M600.6 139.2H616.1Q617.4 142.0 617.6 145.0Q617.6 150.7 608.3 153.2Q599.1 150.7 599.1 145.0Q599.3 142.0 600.6 139.2Z" fill="#fff" stroke="#6b6f72" stroke-width=".9"/><path d="M600.7 138.9H616.0L616.6 141.1H600.1Z" fill="#5e9e45"/><text x="608.3" y="149.8" font-size="8.4" text-anchor="middle" fill="#2f3337" stroke="#2f3337" stroke-width=".25">80</text>
<path d="M558.7 154.1H576.2Q577.5 156.9 577.7 159.9Q577.7 165.6 567.4 168.1Q557.2 165.6 557.2 159.9Q557.4 156.9 558.7 154.1Z" fill="#fff" stroke="#6b6f72" stroke-width=".9"/><path d="M558.8 153.8H576.1L576.7 156.0H558.2Z" fill="#5e9e45"/><text x="567.4" y="164.7" font-size="8.4" text-anchor="middle" fill="#2f3337" stroke="#2f3337" stroke-width=".25">165</text>
<path d="M576.9 189.3H594.4Q595.7 192.1 595.9 195.1Q595.9 200.8 585.7 203.3Q575.4 200.8 575.4 195.1Q575.6 192.1 576.9 189.3Z" fill="#fff" stroke="#6b6f72" stroke-width=".9"/><path d="M577.0 189.0H594.3L594.9 191.2H576.4Z" fill="#5e9e45"/><text x="585.7" y="199.9" font-size="8.4" text-anchor="middle" fill="#2f3337" stroke="#2f3337" stroke-width=".25">165</text>
<path d="M712.5 183.3H730.0Q731.3 186.1 731.5 189.1Q731.5 194.8 721.3 197.3Q711.0 194.8 711.0 189.1Q711.2 186.1 712.5 183.3Z" fill="#fff" stroke="#6b6f72" stroke-width=".9"/><path d="M712.6 183.0H729.9L730.5 185.2H712.0Z" fill="#5e9e45"/><text x="721.3" y="193.9" font-size="8.4" text-anchor="middle" fill="#2f3337" stroke="#2f3337" stroke-width=".25">196</text>
<path d="M780.8 232.0H798.3Q799.6 234.8 799.8 237.8Q799.8 243.5 789.5 246.0Q779.3 243.5 779.3 237.8Q779.5 234.8 780.8 232.0Z" fill="#fff" stroke="#6b6f72" stroke-width=".9"/><path d="M780.9 231.7H798.2L798.8 233.9H780.3Z" fill="#5e9e45"/><text x="789.5" y="242.6" font-size="8.4" text-anchor="middle" fill="#2f3337" stroke="#2f3337" stroke-width=".25">172</text>
<path d="M668.7 271.1H686.2Q687.5 273.9 687.7 276.9Q687.7 282.6 677.5 285.1Q667.2 282.6 667.2 276.9Q667.4 273.9 668.7 271.1Z" fill="#fff" stroke="#6b6f72" stroke-width=".9"/><path d="M668.8 270.8H686.1L686.7 273.0H668.2Z" fill="#5e9e45"/><text x="677.5" y="281.7" font-size="8.4" text-anchor="middle" fill="#2f3337" stroke="#2f3337" stroke-width=".25">166</text>
<path d="M614.9 289.9H629.0Q631.2 289.9 631.2 292.1V301.1Q631.2 303.1 621.9 305.1Q612.7 303.1 612.7 301.1V292.1Q612.7 289.9 614.9 289.9Z" fill="#fbd23a" stroke="#e8b923" stroke-width=".8"/><text x="621.9" y="300.9" font-size="8.6" font-weight="bold" text-anchor="middle" fill="#4a3b06">81</text>
<path d="M754.8 289.0H770.9Q773.1 289.0 773.1 291.2V300.2Q773.1 302.2 762.9 304.2Q752.6 302.2 752.6 300.2V291.2Q752.6 289.0 754.8 289.0Z" fill="#fbd23a" stroke="#e8b923" stroke-width=".8"/><text x="762.9" y="300.0" font-size="8.6" font-weight="bold" text-anchor="middle" fill="#4a3b06">381</text>
<path d="M943.1 -6.9H959.2Q961.4 -6.9 961.4 -4.7V4.3Q961.4 6.3 951.2 8.3Q940.9 6.3 940.9 4.3V-4.7Q940.9 -6.9 943.1 -6.9Z" fill="#fbd23a" stroke="#e8b923" stroke-width=".8"/><text x="951.2" y="4.1" font-size="8.6" font-weight="bold" text-anchor="middle" fill="#4a3b06">544</text>
<path d="M986.9 -0.4H1004.4Q1005.7 2.4 1005.9 5.4Q1005.9 11.1 995.7 13.6Q985.4 11.1 985.4 5.4Q985.6 2.4 986.9 -0.4Z" fill="#fff" stroke="#6b6f72" stroke-width=".9"/><path d="M987.0 -0.7H1004.3L1004.9 1.5H986.4Z" fill="#5e9e45"/><text x="995.7" y="10.2" font-size="8.4" text-anchor="middle" fill="#2f3337" stroke="#2f3337" stroke-width=".25">198</text>
<path d="M959.7 15.8H975.2Q976.5 18.6 976.7 21.6Q976.7 27.3 967.4 29.8Q958.2 27.3 958.2 21.6Q958.4 18.6 959.7 15.8Z" fill="#fff" stroke="#6b6f72" stroke-width=".9"/><path d="M959.8 15.5H975.1L975.7 17.7H959.2Z" fill="#5e9e45"/><text x="967.4" y="26.4" font-size="8.4" text-anchor="middle" fill="#2f3337" stroke="#2f3337" stroke-width=".25">15</text>
<path d="M852.8 42.1H870.3Q871.6 44.9 871.8 47.9Q871.8 53.6 861.6 56.1Q851.3 53.6 851.3 47.9Q851.5 44.9 852.8 42.1Z" fill="#fff" stroke="#6b6f72" stroke-width=".9"/><path d="M852.9 41.8H870.2L870.8 44.0H852.3Z" fill="#5e9e45"/><text x="861.6" y="52.7" font-size="8.4" text-anchor="middle" fill="#2f3337" stroke="#2f3337" stroke-width=".25">173</text>
<path d="M816.4 83.2H833.9Q835.2 86.0 835.4 89.0Q835.4 94.7 825.1 97.2Q814.9 94.7 814.9 89.0Q815.1 86.0 816.4 83.2Z" fill="#fff" stroke="#6b6f72" stroke-width=".9"/><path d="M816.5 82.9H833.8L834.4 85.1H815.9Z" fill="#5e9e45"/><text x="825.1" y="93.8" font-size="8.4" text-anchor="middle" fill="#2f3337" stroke="#2f3337" stroke-width=".25">196</text>
<path d="M1010.9 75.1H1031.5Q1033.7 75.1 1033.7 77.3V86.3Q1033.7 88.3 1021.2 90.3Q1008.7 88.3 1008.7 86.3V77.3Q1008.7 75.1 1010.9 75.1Z" fill="#fbd23a" stroke="#e8b923" stroke-width=".8"/><text x="1021.2" y="86.1" font-size="8.6" font-weight="bold" text-anchor="middle" fill="#4a3b06">381A</text>
<path d="M1034.6 94.3H1050.1Q1051.4 97.1 1051.6 100.1Q1051.6 105.8 1042.4 108.3Q1033.1 105.8 1033.1 100.1Q1033.3 97.1 1034.6 94.3Z" fill="#fff" stroke="#6b6f72" stroke-width=".9"/><path d="M1034.7 94.0H1050.0L1050.6 96.2H1034.1Z" fill="#5e9e45"/><text x="1042.4" y="104.9" font-size="8.4" text-anchor="middle" fill="#2f3337" stroke="#2f3337" stroke-width=".25">84</text>
<path d="M803.5 124.3H819.6Q821.8 124.3 821.8 126.5V135.5Q821.8 137.5 811.6 139.5Q801.3 137.5 801.3 135.5V126.5Q801.3 124.3 803.5 124.3Z" fill="#fbd23a" stroke="#e8b923" stroke-width=".8"/><text x="811.6" y="135.3" font-size="8.6" font-weight="bold" text-anchor="middle" fill="#4a3b06">544</text>
<path d="M810.1 145.5H827.6Q828.9 148.3 829.1 151.3Q829.1 157.0 818.9 159.5Q808.6 157.0 808.6 151.3Q808.8 148.3 810.1 145.5Z" fill="#fff" stroke="#6b6f72" stroke-width=".9"/><path d="M810.2 145.2H827.5L828.1 147.4H809.6Z" fill="#5e9e45"/><text x="818.9" y="156.1" font-size="8.4" text-anchor="middle" fill="#2f3337" stroke="#2f3337" stroke-width=".25">19A</text>
<path d="M891.6 145.2H907.1Q908.4 148.0 908.6 151.0Q908.6 156.7 899.4 159.2Q890.1 156.7 890.1 151.0Q890.3 148.0 891.6 145.2Z" fill="#fff" stroke="#6b6f72" stroke-width=".9"/><path d="M891.7 144.9H907.0L907.6 147.1H891.1Z" fill="#5e9e45"/><text x="899.4" y="155.8" font-size="8.4" text-anchor="middle" fill="#2f3337" stroke="#2f3337" stroke-width=".25">96</text>
<path d="M975.1 145.5H992.6Q993.9 148.3 994.1 151.3Q994.1 157.0 983.9 159.5Q973.6 157.0 973.6 151.3Q973.8 148.3 975.1 145.5Z" fill="#fff" stroke="#6b6f72" stroke-width=".9"/><path d="M975.2 145.2H992.5L993.1 147.4H974.6Z" fill="#5e9e45"/><text x="983.9" y="156.1" font-size="8.4" text-anchor="middle" fill="#2f3337" stroke="#2f3337" stroke-width=".25">83A</text>
<path d="M1100.8 137.0H1118.3Q1119.6 139.8 1119.8 142.8Q1119.8 148.5 1109.5 151.0Q1099.3 148.5 1099.3 142.8Q1099.5 139.8 1100.8 137.0Z" fill="#fff" stroke="#6b6f72" stroke-width=".9"/><path d="M1100.9 136.7H1118.2L1118.8 138.9H1100.3Z" fill="#5e9e45"/><text x="1109.5" y="147.6" font-size="8.4" text-anchor="middle" fill="#2f3337" stroke="#2f3337" stroke-width=".25">198</text>
<path d="M1097.4 209.9H1119.4Q1120.7 212.7 1120.9 215.7Q1120.9 221.4 1108.4 223.9Q1095.9 221.4 1095.9 215.7Q1096.1 212.7 1097.4 209.9Z" fill="#fff" stroke="#6b6f72" stroke-width=".9"/><path d="M1097.5 209.6H1119.3L1119.9 211.8H1096.9Z" fill="#5e9e45"/><text x="1108.4" y="220.5" font-size="8.4" text-anchor="middle" fill="#2f3337" stroke="#2f3337" stroke-width=".25">172A</text>
<path d="M806.3 229.3H821.8Q823.1 232.1 823.3 235.1Q823.3 240.8 814.0 243.3Q804.8 240.8 804.8 235.1Q805.0 232.1 806.3 229.3Z" fill="#fff" stroke="#6b6f72" stroke-width=".9"/><path d="M806.4 229.0H821.7L822.3 231.2H805.8Z" fill="#5e9e45"/><text x="814.0" y="239.9" font-size="8.4" text-anchor="middle" fill="#2f3337" stroke="#2f3337" stroke-width=".25">81</text>
<path d="M879.6 249.3H895.1Q896.4 252.1 896.6 255.1Q896.6 260.8 887.4 263.3Q878.1 260.8 878.1 255.1Q878.3 252.1 879.6 249.3Z" fill="#fff" stroke="#6b6f72" stroke-width=".9"/><path d="M879.7 249.0H895.0L895.6 251.2H879.1Z" fill="#5e9e45"/><text x="887.4" y="259.9" font-size="8.4" text-anchor="middle" fill="#2f3337" stroke="#2f3337" stroke-width=".25">96</text>
<path d="M987.6 289.9H1008.2Q1010.4 289.9 1010.4 292.1V301.1Q1010.4 303.1 997.9 305.1Q985.4 303.1 985.4 301.1V292.1Q985.4 289.9 987.6 289.9Z" fill="#fbd23a" stroke="#e8b923" stroke-width=".8"/><text x="997.9" y="300.9" font-size="8.6" font-weight="bold" text-anchor="middle" fill="#4a3b06">381A</text>
<path d="M1239.5 -3.7H1255.0Q1256.3 -0.9 1256.5 2.1Q1256.5 7.8 1247.3 10.3Q1238.0 7.8 1238.0 2.1Q1238.2 -0.9 1239.5 -3.7Z" fill="#fff" stroke="#6b6f72" stroke-width=".9"/><path d="M1239.6 -4.0H1254.9L1255.5 -1.8H1239.0Z" fill="#5e9e45"/><text x="1247.3" y="6.9" font-size="8.4" text-anchor="middle" fill="#2f3337" stroke="#2f3337" stroke-width=".25">79</text>
<path d="M1367.4 -0.8H1382.9Q1384.2 2.0 1384.4 5.0Q1384.4 10.7 1375.1 13.2Q1365.9 10.7 1365.9 5.0Q1366.1 2.0 1367.4 -0.8Z" fill="#fff" stroke="#6b6f72" stroke-width=".9"/><path d="M1367.5 -1.1H1382.8L1383.4 1.1H1366.9Z" fill="#5e9e45"/><text x="1375.1" y="9.8" font-size="8.4" text-anchor="middle" fill="#2f3337" stroke="#2f3337" stroke-width=".25">95</text>
<path d="M1312.9 38.0H1327.0Q1329.2 38.0 1329.2 40.2V49.2Q1329.2 51.2 1320.0 53.2Q1310.7 51.2 1310.7 49.2V40.2Q1310.7 38.0 1312.9 38.0Z" fill="#fbd23a" stroke="#e8b923" stroke-width=".8"/><text x="1320.0" y="49.0" font-size="8.6" font-weight="bold" text-anchor="middle" fill="#4a3b06">44</text>
<path d="M1244.0 88.5H1259.5Q1260.8 91.3 1261.0 94.3Q1261.0 100.0 1251.7 102.5Q1242.5 100.0 1242.5 94.3Q1242.7 91.3 1244.0 88.5Z" fill="#fff" stroke="#6b6f72" stroke-width=".9"/><path d="M1244.1 88.2H1259.4L1260.0 90.4H1243.5Z" fill="#5e9e45"/><text x="1251.7" y="99.1" font-size="8.4" text-anchor="middle" fill="#2f3337" stroke="#2f3337" stroke-width=".25">94</text>
<path d="M1365.7 150.4H1383.2Q1384.5 153.2 1384.7 156.2Q1384.7 161.9 1374.4 164.4Q1364.2 161.9 1364.2 156.2Q1364.4 153.2 1365.7 150.4Z" fill="#fff" stroke="#6b6f72" stroke-width=".9"/><path d="M1365.8 150.1H1383.1L1383.7 152.3H1365.2Z" fill="#5e9e45"/><text x="1374.4" y="161.0" font-size="8.4" text-anchor="middle" fill="#2f3337" stroke="#2f3337" stroke-width=".25">161</text>
<path d="M1331.8 161.0H1347.3Q1348.6 163.8 1348.8 166.8Q1348.8 172.5 1339.5 175.0Q1330.3 172.5 1330.3 166.8Q1330.5 163.8 1331.8 161.0Z" fill="#fff" stroke="#6b6f72" stroke-width=".9"/><path d="M1331.9 160.7H1347.2L1347.8 162.9H1331.3Z" fill="#5e9e45"/><text x="1339.5" y="171.6" font-size="8.4" text-anchor="middle" fill="#2f3337" stroke="#2f3337" stroke-width=".25">25</text>
<path d="M1450.4 189.3H1467.9Q1469.2 192.1 1469.4 195.1Q1469.4 200.8 1459.2 203.3Q1448.9 200.8 1448.9 195.1Q1449.1 192.1 1450.4 189.3Z" fill="#fff" stroke="#6b6f72" stroke-width=".9"/><path d="M1450.5 189.0H1467.8L1468.4 191.2H1449.9Z" fill="#5e9e45"/><text x="1459.2" y="199.9" font-size="8.4" text-anchor="middle" fill="#2f3337" stroke="#2f3337" stroke-width=".25">161</text>
<path d="M1303.6 194.4H1319.1Q1320.4 197.2 1320.6 200.2Q1320.6 205.9 1311.3 208.4Q1302.1 205.9 1302.1 200.2Q1302.3 197.2 1303.6 194.4Z" fill="#fff" stroke="#6b6f72" stroke-width=".9"/><path d="M1303.7 194.1H1319.0L1319.6 196.3H1303.1Z" fill="#5e9e45"/><text x="1311.3" y="205.0" font-size="8.4" text-anchor="middle" fill="#2f3337" stroke="#2f3337" stroke-width=".25">95</text>
<path d="M1221.8 255.2H1235.9Q1238.1 255.2 1238.1 257.4V266.4Q1238.1 268.4 1228.8 270.4Q1219.6 268.4 1219.6 266.4V257.4Q1219.6 255.2 1221.8 255.2Z" fill="#fbd23a" stroke="#e8b923" stroke-width=".8"/><text x="1228.8" y="266.2" font-size="8.6" font-weight="bold" text-anchor="middle" fill="#4a3b06">44</text>
<path d="M1401.8 280.9H1417.3Q1418.6 283.7 1418.8 286.7Q1418.8 292.4 1409.6 294.9Q1400.3 292.4 1400.3 286.7Q1400.5 283.7 1401.8 280.9Z" fill="#fff" stroke="#6b6f72" stroke-width=".9"/><path d="M1401.9 280.6H1417.2L1417.8 282.8H1401.3Z" fill="#5e9e45"/><text x="1409.6" y="291.5" font-size="8.4" text-anchor="middle" fill="#2f3337" stroke="#2f3337" stroke-width=".25">25</text>
<path d="M-4.2 7.4H7.8Q9.1 10.2 9.3 13.2Q9.3 18.9 1.8 21.4Q-5.7 18.9 -5.7 13.2Q-5.5 10.2 -4.2 7.4Z" fill="#fff" stroke="#6b6f72" stroke-width=".9"/><path d="M-4.1 7.1H7.7L8.3 9.3H-4.7Z" fill="#5e9e45"/><text x="1.8" y="18.0" font-size="8.4" text-anchor="middle" fill="#2f3337" stroke="#2f3337" stroke-width=".25">8</text>
</g>
<polygon points="770.9,126.3 778.0,123.6 782.9,125.0 788.7,121.4 794.9,129.4 788.7,133.4 782.9,131.2 776.2,136.1" fill="#4f9d4c"/>
<path d="M768.6 124.5L781.5 148.5" stroke="#3f8a40" stroke-width="1.1"/><circle cx="781.5" cy="148.5" r="1.1" fill="#3f8a40"/>
</svg>
<div style="position:absolute;left:10px;top:10px;width:168px;height:40px;background:#fff;border-radius:2px;box-shadow:0 1px 4px -1px rgba(0,0,0,.3)"><div style="position:absolute;left:0;top:0;width:68px;height:40px;line-height:40px;text-align:center;font-size:18px;font-weight:bold;color:#000;letter-spacing:-.2px">Map</div><div style="position:absolute;left:68px;top:0;width:1px;height:40px;background:#e6e6e6"></div><div style="position:absolute;left:69px;top:0;width:99px;height:40px;line-height:40px;text-align:center;font-size:18px;color:#565656;letter-spacing:.05px">Satellite</div></div>
<div style="position:absolute;left:1515px;top:10px;width:40px;height:40px;background:#fff;border-radius:2px;box-shadow:0 1px 4px -1px rgba(0,0,0,.3)"><svg width="40" height="40" viewBox="0 0 40 40" style="position:absolute;left:0;top:0"><path d="M11.5 17V11.5H17M23 11.5H28.5V17M28.5 23V28.5H23M17 28.5H11.5V23" fill="none" stroke="#666" stroke-width="2.6"/></svg></div>
<div style="position:absolute;left:1515px;top:123px;width:40px;height:40px;background:#fff;border-radius:2px;box-shadow:0 1px 4px -1px rgba(0,0,0,.3)"><svg width="40" height="40" viewBox="0 0 40 40" style="position:absolute;left:0;top:0"><circle cx="20" cy="10.6" r="5.2" fill="#f5b32a"/><path d="M13.6 18.2Q14 16.2 16 16.2H24Q26 16.2 26.4 18.2L27.6 26Q27.7 27 26.8 27.1Q26 27.1 25.8 26.2L24.8 21.2L24.2 33.4Q24.1 34.6 22.9 34.6H21.2V27.4H18.8V34.6H17.1Q15.9 34.6 15.8 33.4L15.2 21.2L14.2 26.2Q14 27.1 13.2 27.1Q12.3 27 12.4 26Z" fill="#f2a823"/><path d="M17.2 16.2L20 20.4L22.8 16.2Z" fill="#e0762a"/></svg></div>
<div style="position:absolute;left:1515px;top:196px;width:40px;height:80px;background:#fff;border-radius:2px;box-shadow:0 1px 4px -1px rgba(0,0,0,.3)"><svg width="40" height="80" viewBox="0 0 40 80" style="position:absolute;left:0;top:0"><path d="M11 20.2H29M20 11.2V29.2M11 60H29" stroke="#666" stroke-width="3.2" fill="none"/><path d="M5 40H35" stroke="#e6e6e6" stroke-width="1"/></svg></div>
<div style="position:absolute;left:1214px;top:286px;width:351px;height:14px;background:rgba(245,245,245,.72)"></div>
<div style="position:absolute;left:1219px;top:286px;height:14px;line-height:14px;font-size:10px;color:#111;white-space:nowrap;letter-spacing:.1px;font-family:&quot;Liberation Sans&quot;,sans-serif">Keyboard shortcuts</div>
<div style="position:absolute;left:1317.5px;top:286px;height:14px;line-height:14px;font-size:10px;color:#111;white-space:nowrap;letter-spacing:.1px;font-family:&quot;Liberation Sans&quot;,sans-serif">Map data ©2022</div>
<div style="position:absolute;left:1405px;top:286px;height:14px;line-height:14px;font-size:10px;color:#111;white-space:nowrap;letter-spacing:.1px;font-family:&quot;Liberation Sans&quot;,sans-serif">Terms of Use</div>
<div style="position:absolute;left:1475.5px;top:286px;height:14px;line-height:14px;font-size:10px;color:#111;white-space:nowrap;letter-spacing:.1px;font-family:&quot;Liberation Sans&quot;,sans-serif">Report a map error</div>
<svg width="66" height="26" viewBox="0 0 66 26" style="position:absolute;left:5px;top:274px"><g font-family="&quot;Liberation Sans&quot;,sans-serif" font-size="21" stroke="#fff" stroke-width="2.2" paint-order="stroke" stroke-linejoin="round" letter-spacing="-.6"><text x="1.5" y="20"><tspan fill="#4285f4">G</tspan><tspan fill="#ea4335">o</tspan><tspan fill="#fbbc05">o</tspan><tspan fill="#4285f4">g</tspan><tspan fill="#34a853">l</tspan><tspan fill="#ea4335">e</tspan></text></g></svg></div></div><div class="card" style="top:531.8px;height:189.9px"><div class="ct" style="top:13.7px;letter-spacing:0.62px;">Trip Location</div><div class="cl" style="top:53.0px"></div><div class="th" style="left:18px;width:782.5px;top:72.20px;letter-spacing:0.43px;">Pick Location</div><div class="th" style="left:800.5px;width:782.5px;top:72.20px;letter-spacing:0.54px;">Drop Location</div><div class="hb" style="top:120.40px"></div><div class="td" style="left:18px;width:782.5px;top:123.00px;letter-spacing:0.22px;">NH 544, Uthukuli, Tiruppur, 638812, Tamil Nadu, India</div><div class="td" style="left:800.5px;width:782.5px;top:123.00px;letter-spacing:0.22px;">NH 544, Uthukuli, Tiruppur, 638812, Tamil Nadu, India</div></div><div class="card" style="top:752px;height:188.5px"><div class="ct" style="top:12.5px;letter-spacing:0.55px;">Request</div><div class="cl" style="top:51.8px"></div><div class="th" style="left:18px;width:297px;top:72.20px;letter-spacing:0.35px;">Zone</div><div class="th" style="left:315px;width:516px;top:72.20px;letter-spacing:0.64px;">Vehicle Type</div><div class="th" style="left:831px;width:752px;top:72.20px;letter-spacing:0.55px;">Trip Time</div><div class="hb" style="top:120.40px"></div><div class="td" style="left:18px;width:297px;top:123.00px;letter-spacing:0.63px;">World</div><div class="td" style="left:315px;width:516px;top:123.00px;letter-spacing:0.57px;">Sedan</div><div class="td" style="left:831px;width:752px;top:123.00px;letter-spacing:0.50px;">2022-02-04 05:39:34</div></div><div class="card" style="top:969.8px;height:190.0px"><div class="ct" style="top:13.7px;letter-spacing:0.32px;">User Details</div><div class="cl" style="top:53.0px"></div><div class="th" style="left:18px;width:347px;top:72.20px;letter-spacing:1.02px;">Name</div><div class="th" style="left:365px;width:677px;top:72.20px;letter-spacing:0.50px;">Email</div><div class="th" style="left:1042px;width:541px;top:72.20px;letter-spacing:0.68px;">Mobile</div><div class="hb" style="top:120.40px"></div><div class="td" style="left:18px;width:347px;top:123.00px;letter-spacing:0.49px;">user</div><div class="td" style="left:365px;width:677px;top:123.00px;letter-spacing:0.58px;">user@user.com</div><div class="td" style="left:1042px;width:541px;top:123.00px;letter-spacing:0.07px;">9876543210</div></div><div class="card" style="top:1190px;height:188.7px"><div class="ct" style="top:12.5px;letter-spacing:0.45px;">Driver Details</div><div class="cl" style="top:51.8px"></div><div class="th" style="left:18px;width:291px;top:72.20px;letter-spacing:1.02px;">Name</div><div class="th" style="left:309px;width:603.5px;top:72.20px;letter-spacing:0.50px;">Email</div><div class="th" style="left:912.5px;width:398.5px;top:72.20px;letter-spacing:0.68px;">Mobile</div><div class="th" style="left:1311px;width:272px;top:72.20px;letter-spacing:0.65px;">Rating</div><div class="hb" style="top:120.40px"></div><div class="td" style="left:18px;width:291px;top:123.00px;letter-spacing:0.42px;">driver 2</div><div class="td" style="left:309px;width:603.5px;top:123.00px;letter-spacing:0.61px;">driver2@driver.com</div><div class="td" style="left:912.5px;width:398.5px;top:123.00px;letter-spacing:-0.00px;">9876543212</div><div class="td" style="left:1311px;width:272px;top:123.00px;">0</div></div><div class="card" style="top:1409px;height:643.6px"><div class="ct" style="top:12.5px;letter-spacing:0.27px;">Bill Details</div><div class="cl" style="top:51.8px"></div><div class="th" style="left:18px;width:861px;top:72.20px;letter-spacing:0.46px;">Title</div><div class="th" style="left:879px;width:497.5px;top:72.20px;letter-spacing:0.67px;">Description</div><div class="th" style="left:1376.5px;width:206.5px;top:72.20px;letter-spacing:0.28px;">Price</div><div class="hb" style="top:120.40px"></div><div class="td" style="left:18px;width:861px;top:123.00px;letter-spacing:0.16px;">Base Price</div><div class="td" style="left:879px;width:497.5px;top:123.00px;letter-spacing:0.17px;">For first 6 Miles</div><div class="td" style="left:1376.5px;width:206.5px;top:123.00px;">6</div><div class="rb" style="top:171.90px"></div><div class="td" style="left:18px;width:861px;top:172.85px;letter-spacing:0.43px;">Additional Disatance Price Per Km</div><div class="td" style="left:879px;width:497.5px;top:172.85px;letter-spacing:0.32px;">0 Miles * <svg class="tk" width="8" height="12" viewBox="0 0 8 12"><path d="M0.3 1.2H7M0.3 3.7H7M0.3 1.2H2.6Q5 1.3 5 3.7Q5 6.2 2.4 6.2H0.6L5.2 11.3" fill="none" stroke="#727981" stroke-width="1.05"/></svg>6 / Miles</div><div class="td" style="left:1376.5px;width:206.5px;top:172.85px;">0</div><div class="rb" style="top:221.75px"></div><div class="td" style="left:18px;width:861px;top:222.70px;letter-spacing:0.36px;">Additional Time Price Per Min</div><div class="td" style="left:879px;width:497.5px;top:222.70px;letter-spacing:0.36px;">0 Mins * <svg class="tk" width="8" height="12" viewBox="0 0 8 12"><path d="M0.3 1.2H7M0.3 3.7H7M0.3 1.2H2.6Q5 1.3 5 3.7Q5 6.2 2.4 6.2H0.6L5.2 11.3" fill="none" stroke="#727981" stroke-width="1.05"/></svg>6 / Mins</div><div class="td" style="left:1376.5px;width:206.5px;top:222.70px;">0</div><div class="rb" style="top:271.60px"></div><div class="td" style="left:18px;width:861px;top:272.55px;letter-spacing:0.75px;">Waiting Charge</div><div class="td" style="left:879px;width:497.5px;top:272.55px;"><span class="ds"></span></div><div class="td" style="left:1376.5px;width:206.5px;top:272.55px;">0</div><div class="rb" style="top:321.45px"></div><div class="td" style="left:18px;width:861px;top:322.40px;letter-spacing:0.54px;">Cancellation Fee</div><div class="td" style="left:879px;width:497.5px;top:322.40px;"><span class="ds"></span></div><div class="td" style="left:1376.5px;width:206.5px;top:322.40px;">0</div><div class="rb" style="top:371.30px"></div><div class="td" style="left:18px;width:861px;top:372.25px;letter-spacing:0.31px;">Service Tax</div><div class="td" style="left:879px;width:497.5px;top:372.25px;"><span class="ds"></span></div><div class="td" style="left:1376.5px;width:206.5px;top:372.25px;letter-spacing:-1.30px;">1.8</div><div class="rb" style="top:421.15px"></div><div class="td" style="left:18px;width:861px;top:422.10px;letter-spacing:0.53px;">Promo Discount</div><div class="td" style="left:879px;width:497.5px;top:422.10px;"><span class="ds"></span></div><div class="td" style="left:1376.5px;width:206.5px;top:422.10px;">0</div><div class="rb" style="top:471.00px"></div><div class="td" style="left:18px;width:861px;top:471.95px;letter-spacing:0.79px;">Admin Commission</div><div class="td" style="left:879px;width:497.5px;top:471.95px;"><span class="ds"></span></div><div class="td" style="left:1376.5px;width:206.5px;top:471.95px;letter-spacing:-1.30px;">1.8</div><div class="rb" style="top:520.85px"></div><div class="td" style="left:18px;width:861px;top:521.80px;letter-spacing:0.57px;">Driver Commission</div><div class="td" style="left:879px;width:497.5px;top:521.80px;"><span class="ds"></span></div><div class="td" style="left:1376.5px;width:206.5px;top:521.80px;">6</div><div class="rb" style="top:570.70px"></div><div class="tt" style="left:18px;width:861px;top:573.30px;letter-spacing:0.82px;">Total Amount</div><div class="tt" style="left:879px;width:497.5px;top:573.30px;"><span class="dt"></span></div><div class="tt" style="left:1376.5px;width:206.5px;top:573.30px;letter-spacing:0.63px;">9.6</div></div>
<div style="position:absolute;left:1768px;top:80px;width:77px;height:30px;border-radius:4px;background:#e6506e;color:#fff;font-size:13.5px;line-height:30px;white-space:nowrap"><svg style="position:absolute;left:14px;top:10.5px" width="10" height="9" viewBox="0 0 10 9"><path d="M9.4 4.5 H1 M4.2 1.2 L0.9 4.5 L4.2 7.8" stroke="#fff" stroke-width="1.1" fill="none"/></svg><span style="position:absolute;left:35px;top:0;letter-spacing:-.1px">Back</span></div>

<div id="hd">
<div style="position:absolute;left:19.7px;top:23.7px;width:20px;height:3.3px;background:#fff;border-radius:1.5px"></div>
<div style="position:absolute;left:19.7px;top:30.3px;width:20px;height:3.3px;background:#fff;border-radius:1.5px"></div>
<div style="position:absolute;left:19.7px;top:36.9px;width:20px;height:3.3px;background:#fff;border-radius:1.5px"></div>
<div style="position:absolute;left:60px;top:0;width:1px;height:64px;background:rgba(255,255,255,.18)"></div>
<div style="position:absolute;left:1414px;top:22px;width:90px;height:25px;border-radius:5px;background:#e64404;color:#fff;font-weight:bold;font-size:13px;line-height:25px;text-align:center;white-space:nowrap;letter-spacing:.05px">SOS Request</div>
<svg style="position:absolute;left:1534px;top:21px" width="21" height="21" viewBox="0 0 21 21"><path d="M11.6 4.9H18.1Q19.3 4.9 19.3 6.1V17.7Q19.3 18.9 18.1 18.9H11.4" fill="none" stroke="#fff" stroke-width="1.6" stroke-linecap="round"/><path d="M2 0.8H7.2Q7.9 0.8 8.1 1.5L12.8 16.1H2Q1 16.1 1 15.1V1.8Q1 0.8 2 0.8Z" fill="#fff"/><path d="M8.5 7A2.9 2.9 0 1 0 9 8.8H6.3" fill="none" stroke="#1452d9" stroke-width="1.25"/><path d="M13.4 8.3H17.8M15.6 6.9V8.3M17.2 9.4Q16.2 12.2 13.8 13.4M14.2 10.6Q15.4 13 17.2 15.2" fill="none" stroke="#fff" stroke-width="1.05" stroke-linecap="round"/></svg>
<!--avatar--><div style="position:absolute;left:1585px;top:18px;width:30px;height:30px;border-radius:50%;background:#e9edf0;overflow:hidden"><div style="position:absolute;left:8.4px;top:3.6px;width:13.2px;height:15px;border-radius:48% 48% 44% 44%;background:#47585f"></div><div style="position:absolute;left:2.6px;top:18.6px;width:24.8px;height:20px;border-radius:50% 50% 0 0/38% 38% 0 0;background:#47585f"></div></div>
</div>

<div id="sb"><div class="seg" style="top:0px;height:948px"><div class="segin" style="top:0px"><svg style="position:absolute;left:78.5px;top:14.5px" width="22" height="23" viewBox="0 0 22 23"><path d="M0.6 10.2 L8.6 1.2 Q10.2 -0.2 12.6 0.5 L16.3 2.6 Q14.5 3.9 12.4 3.9 Q11 4.2 10 5.8 L7.6 8.6 Q7.8 10 9.6 9.6 L12.8 8.4 Q14.3 8 15.6 9 L21 13.4 Q21.8 14.3 21 15.2 L13 22 Q11.2 23 9.6 21.8 L0.8 13 Q-0.3 11.6 0.6 10.2 Z" fill="#ea5a1f"/><path d="M13.4 11.6 L18.6 16 M11.2 13.8 L16.4 18.2 M9 16 L14.2 20.4" stroke="#c24412" stroke-width=".7" fill="none"/></svg>
<div class="logot">Tagxi</div>
<div class="logoline"></div>
<div class="act"></div><div class="subbg"></div><div class="mi" style="top:99px;letter-spacing:0.81px;">Dashboard</div><div class="ic" style="top:99px"><svg width="19" height="15" viewBox="0 0 19 15" style="top:5.9px;left:.1px"><path d="M9.5 0.2 A9.3 9.3 0 0 1 18.7 9.6 Q18.7 12.3 17.6 14 Q17.3 14.5 16.6 14.5 L2.4 14.5 Q1.7 14.5 1.4 14 Q0.3 12.3 0.3 9.6 A9.3 9.3 0 0 1 9.5 0.2 Z" fill="currentColor"/><g fill="#292d42"><circle cx="9.5" cy="2.9" r="1"/><circle cx="4.7" cy="4.9" r="1"/><circle cx="14.3" cy="4.9" r="1"/><circle cx="2.9" cy="9.5" r="1"/><circle cx="16.1" cy="9.5" r="1"/><circle cx="9.2" cy="11.5" r="1.7"/><path d="M8.7 10.6 L10.6 4.9 L11.7 5.2 L10.4 11.1 Z"/></g></svg></div><div class="mi" style="top:150px;letter-spacing:0.73px;">Configurations</div><div class="ic" style="top:150px"><svg width="21" height="19" viewBox="0 0 21 19" style="top:3.4px;left:.1px"><circle cx="6.3" cy="9.2" r="4.7" fill="currentColor"/><circle cx="6.3" cy="9.2" r="5.4" fill="none" stroke="currentColor" stroke-width="2.0" stroke-dasharray="2.12 2.12" stroke-dashoffset="1.06"/><circle cx="6.3" cy="9.2" r="2.2" fill="#292d42"/><circle cx="16.2" cy="4.0" r="2.5" fill="currentColor"/><circle cx="16.2" cy="4.0" r="3.0" fill="none" stroke="currentColor" stroke-width="1.5" stroke-dasharray="1.35 1.35" stroke-dashoffset="0.67"/><circle cx="16.2" cy="4.0" r="1.15" fill="#292d42"/><circle cx="16.2" cy="14.4" r="2.5" fill="currentColor"/><circle cx="16.2" cy="14.4" r="3.0" fill="none" stroke="currentColor" stroke-width="1.5" stroke-dasharray="1.35 1.35" stroke-dashoffset="0.67"/><circle cx="16.2" cy="14.4" r="1.15" fill="#292d42"/></svg></div><svg class="chev" style="top:158.7px;left:194.3px" width="6" height="9" viewBox="0 0 6 9"><path d="M0.9 0.8 L4.6 4.5 L0.9 8.2" fill="none" stroke="#a3a7b7" stroke-width="1.2"/></svg><div class="mi" style="top:201px;letter-spacing:0.59px;">Master Data</div><div class="ic" style="top:201px"><svg width="12" height="16" viewBox="0 0 12 16" style="top:5px;left:.1px"><g fill="none" stroke="currentColor" stroke-width="1.15"><circle cx="2.3" cy="2.2" r="1.6"/><circle cx="2.3" cy="12.9" r="1.6"/><circle cx="8.6" cy="3.4" r="1.6"/><path d="M2.3 3.8 V11.3 M8.6 5 V5.8 Q8.6 7.8 6.4 8.4 L4.2 9 Q2.3 9.6 2.3 11.2"/></g></svg></div><svg class="chev" style="top:209.7px;left:194.3px" width="6" height="9" viewBox="0 0 6 9"><path d="M0.9 0.8 L4.6 4.5 L0.9 8.2" fill="none" stroke="#a3a7b7" stroke-width="1.2"/></svg><div class="mi" style="top:252px;letter-spacing:0.39px;">Service Locations</div><div class="ic" style="top:252px"><svg width="11" height="16" viewBox="0 0 11 16" style="top:4.8px;left:.1px"><path d="M5.4 0 A5.35 5.35 0 0 1 10.75 5.35 C10.75 7.2 9.9 8.4 9 10 L6.2 15 Q5.4 15.9 4.6 15 L1.8 10 C0.9 8.4 0.05 7.2 0.05 5.35 A5.35 5.35 0 0 1 5.4 0 Z M5.4 2.7 A2.6 2.6 0 0 0 5.4 7.9 A2.6 2.6 0 0 0 5.4 2.7 Z" fill="currentColor" fill-rule="evenodd"/></svg></div><div class="mi" style="top:303px;letter-spacing:0.62px;">Manage Owners</div><div class="ic" style="top:303px"><svg width="12" height="16" viewBox="0 0 12 16" style="top:5px;left:.1px"><g fill="none" stroke="currentColor" stroke-width="1.15"><circle cx="2.3" cy="2.2" r="1.6"/><circle cx="2.3" cy="12.9" r="1.6"/><circle cx="8.6" cy="3.4" r="1.6"/><path d="M2.3 3.8 V11.3 M8.6 5 V5.8 Q8.6 7.8 6.4 8.4 L4.2 9 Q2.3 9.6 2.3 11.2"/></g></svg></div><svg class="chev" style="top:311.7px;left:194.3px" width="6" height="9" viewBox="0 0 6 9"><path d="M0.9 0.8 L4.6 4.5 L0.9 8.2" fill="none" stroke="#a3a7b7" stroke-width="1.2"/></svg><div class="mi" style="top:354px;letter-spacing:0.51px;">Manage Fleet</div><div class="ic" style="top:354px"><svg width="17" height="19" viewBox="0 0 17 19" style="top:3.3px;left:.1px"><path d="M0.2 6 Q0.2 0.2 5 0.2 H11.2 Q16 0.2 16 6 V15 Q16 16 15 16 H1.2 Q0.2 16 0.2 15 Z" fill="currentColor"/><rect x="1.6" y="16" width="3" height="2.3" rx=".6" fill="currentColor"/><rect x="11.6" y="16" width="3" height="2.3" rx=".6" fill="currentColor"/><g fill="#292d42"><rect x="4.3" y="1.7" width="7.6" height="1.1" rx=".5"/><path d="M2.3 4.3 H13.9 Q14.5 4.3 14.5 5 V9.6 Q14.5 10.2 13.9 10.2 H2.3 Q1.7 10.2 1.7 9.6 V5 Q1.7 4.3 2.3 4.3 Z"/><circle cx="3.3" cy="12.9" r="1.15"/><circle cx="12.9" cy="12.9" r="1.15"/></g></svg></div><div class="mi" style="top:405px;letter-spacing:0.78px;">Admins</div><div class="ic" style="top:405px"><svg width="19" height="19" viewBox="0 0 19 19" style="top:3.4px;left:.1px"><defs><clipPath id="ucX"><circle cx="9.3" cy="9.3" r="7.6"/></clipPath></defs><circle cx="9.3" cy="9.3" r="8.55" fill="none" stroke="currentColor" stroke-width="1.3"/><circle cx="9.3" cy="7.2" r="3.3" fill="currentColor"/><ellipse cx="9.3" cy="16.6" rx="6.4" ry="5.2" fill="currentColor" clip-path="url(#ucX)"/></svg></div><div class="mi on" style="top:456px;letter-spacing:0.29px;">Trip Requests</div><div class="ic on" style="top:456px"><svg width="19" height="19" viewBox="0 0 19 19" style="top:3.2px;left:.1px"><path d="M0 2.3 L5.8 0 V16.3 L0 18.6 Z M6.35 0 L12.15 2.3 V18.6 L6.35 16.3 Z M12.7 2.3 L18.5 0 V16.3 L12.7 18.6 Z" fill="currentColor"/></svg></div><svg class="chev" style="top:465px;left:192.5px" width="9" height="6" viewBox="0 0 9 6"><path d="M0.8 0.9 L4.5 4.6 L8.2 0.9" fill="none" stroke="#fff" stroke-width="1.3"/></svg><div class="mi" style="top:626px;letter-spacing:0.51px;">Vehicle Types</div><div class="ic" style="top:626px"><svg width="22" height="19" viewBox="0 0 22 19" style="top:3.3px;left:.1px"><g fill="currentColor"><rect x="7.6" y="0" width="6.2" height="3.2" rx=".6"/><path d="M3.4 8.6 L5.1 3.9 Q5.5 2.7 6.8 2.7 H14.6 Q15.9 2.7 16.3 3.9 L18 8.6 Z"/><rect x="0.1" y="7.6" width="21.2" height="7.8" rx="2.4"/><rect x="1.3" y="13" width="4.2" height="5" rx="1"/><rect x="15.9" y="13" width="4.2" height="5" rx="1"/></g><g fill="#292d42"><path d="M5.6 8 L6.8 4.9 Q7 4.4 7.5 4.4 H13.9 Q14.4 4.4 14.6 4.9 L15.8 8 Z"/><circle cx="3.7" cy="11.4" r="1.35"/><circle cx="17.7" cy="11.4" r="1.35"/></g></svg></div><div class="mi" style="top:677px;letter-spacing:0.70px;">Geofencing</div><div class="ic" style="top:677px"><svg width="19" height="19" viewBox="0 0 19 19" style="top:3.2px;left:.1px"><path d="M0 2.3 L5.8 0 V16.3 L0 18.6 Z M6.35 0 L12.15 2.3 V18.6 L6.35 16.3 Z M12.7 2.3 L18.5 0 V16.3 L12.7 18.6 Z" fill="currentColor"/></svg></div><svg class="chev" style="top:685.7px;left:194.3px" width="6" height="9" viewBox="0 0 6 9"><path d="M0.9 0.8 L4.6 4.5 L0.9 8.2" fill="none" stroke="#a3a7b7" stroke-width="1.2"/></svg><div class="mi" style="top:728px;letter-spacing:0.24px;">Drivers</div><div class="ic" style="top:728px"><svg width="20" height="19" viewBox="0 0 20 19" style="top:3.7px;left:.1px"><g fill="currentColor"><circle cx="3.7" cy="2.6" r="2.4"/><circle cx="16" cy="2.6" r="2.4"/><path d="M0.1 10.6 V8 Q0.1 5.6 2.4 5.6 H4.6 Q5.4 5.6 6 6 Q5.2 8.2 6.4 10 Q4.4 10.2 3.6 11.6 H1.1 Q0.1 11.6 0.1 10.6 Z"/><path d="M19.6 10.6 V8 Q19.6 5.6 17.3 5.6 H15.1 Q14.3 5.6 13.7 6 Q14.5 8.2 13.3 10 Q15.3 10.2 16.1 11.6 H18.6 Q19.6 11.6 19.6 10.6 Z"/><circle cx="9.85" cy="6.6" r="3.5"/><path d="M3.6 16 V14.4 Q3.6 10.8 7.2 10.8 H12.5 Q16.1 10.8 16.1 14.4 V16 Q16.1 18.3 13.8 18.3 H5.9 Q3.6 18.3 3.6 16 Z"/></g></svg></div><svg class="chev" style="top:736.7px;left:194.3px" width="6" height="9" viewBox="0 0 6 9"><path d="M0.9 0.8 L4.6 4.5 L0.9 8.2" fill="none" stroke="#a3a7b7" stroke-width="1.2"/></svg><div class="mi" style="top:779px;letter-spacing:0.01px;">User</div><div class="ic" style="top:779px"><svg width="14" height="16" viewBox="0 0 14 16" style="top:4.7px;left:.1px"><g fill="currentColor"><circle cx="6.65" cy="3.7" r="3.7"/><path d="M0 13 V11.6 Q0 7.6 3.6 7.4 Q5 8.6 6.65 8.6 Q8.3 8.6 9.7 7.4 Q13.3 7.6 13.3 11.6 V13 Q13.3 15.3 11 15.3 H2.3 Q0 15.3 0 13 Z"/></g></svg></div><svg class="chev" style="top:787.7px;left:194.3px" width="6" height="9" viewBox="0 0 6 9"><path d="M0.9 0.8 L4.6 4.5 L0.9 8.2" fill="none" stroke="#a3a7b7" stroke-width="1.2"/></svg><div class="mi" style="top:830px;letter-spacing:0.65px;">Emergency Number</div><div class="ic" style="top:830px"><svg width="19" height="16" viewBox="0 0 19 16" style="top:4.6px;left:.1px"><path d="M9.3 2.2 C10.6 0.4 12.4 0 13.8 0 C16.6 0 18.6 2 18.6 4.8 C18.6 8 15.6 10.4 9.3 15.5 C3 10.4 0 8 0 4.8 C0 2 2 0 4.8 0 C6.2 0 8 0.4 9.3 2.2 Z" fill="currentColor"/><path d="M0 7.9 H5.2 L6.7 4.6 L9 11.2 L10.9 6.4 L11.9 7.9 H18.6" fill="none" stroke="#292d42" stroke-width="1.2" stroke-linejoin="round"/></svg></div><div class="mi" style="top:881px;letter-spacing:0.59px;">Promo Code</div><div class="ic" style="top:881px"><svg width="16" height="14" viewBox="0 0 16 14" style="top:5.3px;left:.1px"><g fill="currentColor"><rect x="0" y="3.8" width="15.9" height="3.6" rx=".6"/><rect x="1.1" y="7.4" width="13.7" height="6.3" rx=".8"/></g><rect x="6.5" y="5.2" width="2.9" height="7.2" fill="#292d42"/><g fill="none" stroke="currentColor" stroke-width="1.2"><path d="M7.6 3.8 C5 3.8 3.4 3 3.7 1.6 C4 0.2 6 0.3 6.7 1.6 Z"/><path d="M8.3 3.8 C10.9 3.8 12.5 3 12.2 1.6 C11.9 0.2 9.9 0.3 9.2 1.6 Z"/></g></svg></div><div class="mi" style="top:932px;letter-spacing:0.70px;">Custom Notification</div><div class="ic" style="top:932px"><svg width="19" height="19" viewBox="0 0 19 19" style="top:3.7px;left:.1px"><path d="M18.6 0 L15.9 16.6 L10.6 14.4 L7.8 18 V13.6 L16.2 2.8 L5.6 12.2 L0 9.9 Z" fill="currentColor"/></svg></div><svg class="chev" style="top:940.7px;left:194.3px" width="6" height="9" viewBox="0 0 6 9"><path d="M0.9 0.8 L4.6 4.5 L0.9 8.2" fill="none" stroke="#a3a7b7" stroke-width="1.2"/></svg><div class="si on" style="top:508.5px;letter-spacing:0.04px;">Rides</div><div class="circ" style="top:513.0px;border-color:#fff"></div><div class="si" style="top:543.5px;letter-spacing:0.35px;">Scheduled Rides</div><div class="circ" style="top:548.0px;border-color:#a9acb9"></div><div class="si" style="top:578.5px;letter-spacing:0.47px;">Cancellation Rides</div><div class="circ" style="top:583.0px;border-color:#a9acb9"></div></div></div><div class="seg" style="top:948px;height:748px"><div class="segin" style="top:-200px"><div class="act"></div><div class="subbg"></div><div class="mi" style="top:99px;letter-spacing:0.81px;">Dashboard</div><div class="ic" style="top:99px"><svg width="19" height="15" viewBox="0 0 19 15" style="top:5.9px;left:.1px"><path d="M9.5 0.2 A9.3 9.3 0 0 1 18.7 9.6 Q18.7 12.3 17.6 14 Q17.3 14.5 16.6 14.5 L2.4 14.5 Q1.7 14.5 1.4 14 Q0.3 12.3 0.3 9.6 A9.3 9.3 0 0 1 9.5 0.2 Z" fill="currentColor"/><g fill="#292d42"><circle cx="9.5" cy="2.9" r="1"/><circle cx="4.7" cy="4.9" r="1"/><circle cx="14.3" cy="4.9" r="1"/><circle cx="2.9" cy="9.5" r="1"/><circle cx="16.1" cy="9.5" r="1"/><circle cx="9.2" cy="11.5" r="1.7"/><path d="M8.7 10.6 L10.6 4.9 L11.7 5.2 L10.4 11.1 Z"/></g></svg></div><div class="mi" style="top:150px;letter-spacing:0.73px;">Configurations</div><div class="ic" style="top:150px"><svg width="21" height="19" viewBox="0 0 21 19" style="top:3.4px;left:.1px"><circle cx="6.3" cy="9.2" r="4.7" fill="currentColor"/><circle cx="6.3" cy="9.2" r="5.4" fill="none" stroke="currentColor" stroke-width="2.0" stroke-dasharray="2.12 2.12" stroke-dashoffset="1.06"/><circle cx="6.3" cy="9.2" r="2.2" fill="#292d42"/><circle cx="16.2" cy="4.0" r="2.5" fill="currentColor"/><circle cx="16.2" cy="4.0" r="3.0" fill="none" stroke="currentColor" stroke-width="1.5" stroke-dasharray="1.35 1.35" stroke-dashoffset="0.67"/><circle cx="16.2" cy="4.0" r="1.15" fill="#292d42"/><circle cx="16.2" cy="14.4" r="2.5" fill="currentColor"/><circle cx="16.2" cy="14.4" r="3.0" fill="none" stroke="currentColor" stroke-width="1.5" stroke-dasharray="1.35 1.35" stroke-dashoffset="0.67"/><circle cx="16.2" cy="14.4" r="1.15" fill="#292d42"/></svg></div><svg class="chev" style="top:158.7px;left:194.3px" width="6" height="9" viewBox="0 0 6 9"><path d="M0.9 0.8 L4.6 4.5 L0.9 8.2" fill="none" stroke="#a3a7b7" stroke-width="1.2"/></svg><div class="mi" style="top:201px;letter-spacing:0.59px;">Master Data</div><div class="ic" style="top:201px"><svg width="12" height="16" viewBox="0 0 12 16" style="top:5px;left:.1px"><g fill="none" stroke="currentColor" stroke-width="1.15"><circle cx="2.3" cy="2.2" r="1.6"/><circle cx="2.3" cy="12.9" r="1.6"/><circle cx="8.6" cy="3.4" r="1.6"/><path d="M2.3 3.8 V11.3 M8.6 5 V5.8 Q8.6 7.8 6.4 8.4 L4.2 9 Q2.3 9.6 2.3 11.2"/></g></svg></div><svg class="chev" style="top:209.7px;left:194.3px" width="6" height="9" viewBox="0 0 6 9"><path d="M0.9 0.8 L4.6 4.5 L0.9 8.2" fill="none" stroke="#a3a7b7" stroke-width="1.2"/></svg><div class="mi" style="top:252px;letter-spacing:0.39px;">Service Locations</div><div class="ic" style="top:252px"><svg width="11" height="16" viewBox="0 0 11 16" style="top:4.8px;left:.1px"><path d="M5.4 0 A5.35 5.35 0 0 1 10.75 5.35 C10.75 7.2 9.9 8.4 9 10 L6.2 15 Q5.4 15.9 4.6 15 L1.8 10 C0.9 8.4 0.05 7.2 0.05 5.35 A5.35 5.35 0 0 1 5.4 0 Z M5.4 2.7 A2.6 2.6 0 0 0 5.4 7.9 A2.6 2.6 0 0 0 5.4 2.7 Z" fill="currentColor" fill-rule="evenodd"/></svg></div><div class="mi" style="top:303px;letter-spacing:0.62px;">Manage Owners</div><div class="ic" style="top:303px"><svg width="12" height="16" viewBox="0 0 12 16" style="top:5px;left:.1px"><g fill="none" stroke="currentColor" stroke-width="1.15"><circle cx="2.3" cy="2.2" r="1.6"/><circle cx="2.3" cy="12.9" r="1.6"/><circle cx="8.6" cy="3.4" r="1.6"/><path d="M2.3 3.8 V11.3 M8.6 5 V5.8 Q8.6 7.8 6.4 8.4 L4.2 9 Q2.3 9.6 2.3 11.2"/></g></svg></div><svg class="chev" style="top:311.7px;left:194.3px" width="6" height="9" viewBox="0 0 6 9"><path d="M0.9 0.8 L4.6 4.5 L0.9 8.2" fill="none" stroke="#a3a7b7" stroke-width="1.2"/></svg><div class="mi" style="top:354px;letter-spacing:0.51px;">Manage Fleet</div><div class="ic" style="top:354px"><svg width="17" height="19" viewBox="0 0 17 19" style="top:3.3px;left:.1px"><path d="M0.2 6 Q0.2 0.2 5 0.2 H11.2 Q16 0.2 16 6 V15 Q16 16 15 16 H1.2 Q0.2 16 0.2 15 Z" fill="currentColor"/><rect x="1.6" y="16" width="3" height="2.3" rx=".6" fill="currentColor"/><rect x="11.6" y="16" width="3" height="2.3" rx=".6" fill="currentColor"/><g fill="#292d42"><rect x="4.3" y="1.7" width="7.6" height="1.1" rx=".5"/><path d="M2.3 4.3 H13.9 Q14.5 4.3 14.5 5 V9.6 Q14.5 10.2 13.9 10.2 H2.3 Q1.7 10.2 1.7 9.6 V5 Q1.7 4.3 2.3 4.3 Z"/><circle cx="3.3" cy="12.9" r="1.15"/><circle cx="12.9" cy="12.9" r="1.15"/></g></svg></div><div class="mi" style="top:405px;letter-spacing:0.78px;">Admins</div><div class="ic" style="top:405px"><svg width="19" height="19" viewBox="0 0 19 19" style="top:3.4px;left:.1px"><defs><clipPath id="ucX"><circle cx="9.3" cy="9.3" r="7.6"/></clipPath></defs><circle cx="9.3" cy="9.3" r="8.55" fill="none" stroke="currentColor" stroke-width="1.3"/><circle cx="9.3" cy="7.2" r="3.3" fill="currentColor"/><ellipse cx="9.3" cy="16.6" rx="6.4" ry="5.2" fill="currentColor" clip-path="url(#ucX)"/></svg></div><div class="mi on" style="top:456px;letter-spacing:0.29px;">Trip Requests</div><div class="ic on" style="top:456px"><svg width="19" height="19" viewBox="0 0 19 19" style="top:3.2px;left:.1px"><path d="M0 2.3 L5.8 0 V16.3 L0 18.6 Z M6.35 0 L12.15 2.3 V18.6 L6.35 16.3 Z M12.7 2.3 L18.5 0 V16.3 L12.7 18.6 Z" fill="currentColor"/></svg></div><svg class="chev" style="top:465px;left:192.5px" width="9" height="6" viewBox="0 0 9 6"><path d="M0.8 0.9 L4.5 4.6 L8.2 0.9" fill="none" stroke="#fff" stroke-width="1.3"/></svg><div class="mi" style="top:626px;letter-spacing:0.51px;">Vehicle Types</div><div class="ic" style="top:626px"><svg width="22" height="19" viewBox="0 0 22 19" style="top:3.3px;left:.1px"><g fill="currentColor"><rect x="7.6" y="0" width="6.2" height="3.2" rx=".6"/><path d="M3.4 8.6 L5.1 3.9 Q5.5 2.7 6.8 2.7 H14.6 Q15.9 2.7 16.3 3.9 L18 8.6 Z"/><rect x="0.1" y="7.6" width="21.2" height="7.8" rx="2.4"/><rect x="1.3" y="13" width="4.2" height="5" rx="1"/><rect x="15.9" y="13" width="4.2" height="5" rx="1"/></g><g fill="#292d42"><path d="M5.6 8 L6.8 4.9 Q7 4.4 7.5 4.4 H13.9 Q14.4 4.4 14.6 4.9 L15.8 8 Z"/><circle cx="3.7" cy="11.4" r="1.35"/><circle cx="17.7" cy="11.4" r="1.35"/></g></svg></div><div class="mi" style="top:677px;letter-spacing:0.70px;">Geofencing</div><div class="ic" style="top:677px"><svg width="19" height="19" viewBox="0 0 19 19" style="top:3.2px;left:.1px"><path d="M0 2.3 L5.8 0 V16.3 L0 18.6 Z M6.35 0 L12.15 2.3 V18.6 L6.35 16.3 Z M12.7 2.3 L18.5 0 V16.3 L12.7 18.6 Z" fill="currentColor"/></svg></div><svg class="chev" style="top:685.7px;left:194.3px" width="6" height="9" viewBox="0 0 6 9"><path d="M0.9 0.8 L4.6 4.5 L0.9 8.2" fill="none" stroke="#a3a7b7" stroke-width="1.2"/></svg><div class="mi" style="top:728px;letter-spacing:0.24px;">Drivers</div><div class="ic" style="top:728px"><svg width="20" height="19" viewBox="0 0 20 19" style="top:3.7px;left:.1px"><g fill="currentColor"><circle cx="3.7" cy="2.6" r="2.4"/><circle cx="16" cy="2.6" r="2.4"/><path d="M0.1 10.6 V8 Q0.1 5.6 2.4 5.6 H4.6 Q5.4 5.6 6 6 Q5.2 8.2 6.4 10 Q4.4 10.2 3.6 11.6 H1.1 Q0.1 11.6 0.1 10.6 Z"/><path d="M19.6 10.6 V8 Q19.6 5.6 17.3 5.6 H15.1 Q14.3 5.6 13.7 6 Q14.5 8.2 13.3 10 Q15.3 10.2 16.1 11.6 H18.6 Q19.6 11.6 19.6 10.6 Z"/><circle cx="9.85" cy="6.6" r="3.5"/><path d="M3.6 16 V14.4 Q3.6 10.8 7.2 10.8 H12.5 Q16.1 10.8 16.1 14.4 V16 Q16.1 18.3 13.8 18.3 H5.9 Q3.6 18.3 3.6 16 Z"/></g></svg></div><svg class="chev" style="top:736.7px;left:194.3px" width="6" height="9" viewBox="0 0 6 9"><path d="M0.9 0.8 L4.6 4.5 L0.9 8.2" fill="none" stroke="#a3a7b7" stroke-width="1.2"/></svg><div class="mi" style="top:779px;letter-spacing:0.01px;">User</div><div class="ic" style="top:779px"><svg width="14" height="16" viewBox="0 0 14 16" style="top:4.7px;left:.1px"><g fill="currentColor"><circle cx="6.65" cy="3.7" r="3.7"/><path d="M0 13 V11.6 Q0 7.6 3.6 7.4 Q5 8.6 6.65 8.6 Q8.3 8.6 9.7 7.4 Q13.3 7.6 13.3 11.6 V13 Q13.3 15.3 11 15.3 H2.3 Q0 15.3 0 13 Z"/></g></svg></div><svg class="chev" style="top:787.7px;left:194.3px" width="6" height="9" viewBox="0 0 6 9"><path d="M0.9 0.8 L4.6 4.5 L0.9 8.2" fill="none" stroke="#a3a7b7" stroke-width="1.2"/></svg><div class="mi" style="top:830px;letter-spacing:0.65px;">Emergency Number</div><div class="ic" style="top:830px"><svg width="19" height="16" viewBox="0 0 19 16" style="top:4.6px;left:.1px"><path d="M9.3 2.2 C10.6 0.4 12.4 0 13.8 0 C16.6 0 18.6 2 18.6 4.8 C18.6 8 15.6 10.4 9.3 15.5 C3 10.4 0 8 0 4.8 C0 2 2 0 4.8 0 C6.2 0 8 0.4 9.3 2.2 Z" fill="currentColor"/><path d="M0 7.9 H5.2 L6.7 4.6 L9 11.2 L10.9 6.4 L11.9 7.9 H18.6" fill="none" stroke="#292d42" stroke-width="1.2" stroke-linejoin="round"/></svg></div><div class="mi" style="top:881px;letter-spacing:0.59px;">Promo Code</div><div class="ic" style="top:881px"><svg width="16" height="14" viewBox="0 0 16 14" style="top:5.3px;left:.1px"><g fill="currentColor"><rect x="0" y="3.8" width="15.9" height="3.6" rx=".6"/><rect x="1.1" y="7.4" width="13.7" height="6.3" rx=".8"/></g><rect x="6.5" y="5.2" width="2.9" height="7.2" fill="#292d42"/><g fill="none" stroke="currentColor" stroke-width="1.2"><path d="M7.6 3.8 C5 3.8 3.4 3 3.7 1.6 C4 0.2 6 0.3 6.7 1.6 Z"/><path d="M8.3 3.8 C10.9 3.8 12.5 3 12.2 1.6 C11.9 0.2 9.9 0.3 9.2 1.6 Z"/></g></svg></div><div class="mi" style="top:932px;letter-spacing:0.70px;">Custom Notification</div><div class="ic" style="top:932px"><svg width="19" height="19" viewBox="0 0 19 19" style="top:3.7px;left:.1px"><path d="M18.6 0 L15.9 16.6 L10.6 14.4 L7.8 18 V13.6 L16.2 2.8 L5.6 12.2 L0 9.9 Z" fill="currentColor"/></svg></div><svg class="chev" style="top:940.7px;left:194.3px" width="6" height="9" viewBox="0 0 6 9"><path d="M0.9 0.8 L4.6 4.5 L0.9 8.2" fill="none" stroke="#a3a7b7" stroke-width="1.2"/></svg><div class="si on" style="top:508.5px;letter-spacing:0.04px;">Rides</div><div class="circ" style="top:513.0px;border-color:#fff"></div><div class="si" style="top:543.5px;letter-spacing:0.35px;">Scheduled Rides</div><div class="circ" style="top:548.0px;border-color:#a9acb9"></div><div class="si" style="top:578.5px;letter-spacing:0.47px;">Cancellation Rides</div><div class="circ" style="top:583.0px;border-color:#a9acb9"></div></div></div><div class="seg" style="top:1696px;height:417px"><div class="segin" style="top:-532px"><div class="act"></div><div class="subbg"></div><div class="mi" style="top:99px;letter-spacing:0.81px;">Dashboard</div><div class="ic" style="top:99px"><svg width="19" height="15" viewBox="0 0 19 15" style="top:5.9px;left:.1px"><path d="M9.5 0.2 A9.3 9.3 0 0 1 18.7 9.6 Q18.7 12.3 17.6 14 Q17.3 14.5 16.6 14.5 L2.4 14.5 Q1.7 14.5 1.4 14 Q0.3 12.3 0.3 9.6 A9.3 9.3 0 0 1 9.5 0.2 Z" fill="currentColor"/><g fill="#292d42"><circle cx="9.5" cy="2.9" r="1"/><circle cx="4.7" cy="4.9" r="1"/><circle cx="14.3" cy="4.9" r="1"/><circle cx="2.9" cy="9.5" r="1"/><circle cx="16.1" cy="9.5" r="1"/><circle cx="9.2" cy="11.5" r="1.7"/><path d="M8.7 10.6 L10.6 4.9 L11.7 5.2 L10.4 11.1 Z"/></g></svg></div><div class="mi" style="top:150px;letter-spacing:0.73px;">Configurations</div><div class="ic" style="top:150px"><svg width="21" height="19" viewBox="0 0 21 19" style="top:3.4px;left:.1px"><circle cx="6.3" cy="9.2" r="4.7" fill="currentColor"/><circle cx="6.3" cy="9.2" r="5.4" fill="none" stroke="currentColor" stroke-width="2.0" stroke-dasharray="2.12 2.12" stroke-dashoffset="1.06"/><circle cx="6.3" cy="9.2" r="2.2" fill="#292d42"/><circle cx="16.2" cy="4.0" r="2.5" fill="currentColor"/><circle cx="16.2" cy="4.0" r="3.0" fill="none" stroke="currentColor" stroke-width="1.5" stroke-dasharray="1.35 1.35" stroke-dashoffset="0.67"/><circle cx="16.2" cy="4.0" r="1.15" fill="#292d42"/><circle cx="16.2" cy="14.4" r="2.5" fill="currentColor"/><circle cx="16.2" cy="14.4" r="3.0" fill="none" stroke="currentColor" stroke-width="1.5" stroke-dasharray="1.35 1.35" stroke-dashoffset="0.67"/><circle cx="16.2" cy="14.4" r="1.15" fill="#292d42"/></svg></div><svg class="chev" style="top:158.7px;left:194.3px" width="6" height="9" viewBox="0 0 6 9"><path d="M0.9 0.8 L4.6 4.5 L0.9 8.2" fill="none" stroke="#a3a7b7" stroke-width="1.2"/></svg><div class="mi" style="top:201px;letter-spacing:0.59px;">Master Data</div><div class="ic" style="top:201px"><svg width="12" height="16" viewBox="0 0 12 16" style="top:5px;left:.1px"><g fill="none" stroke="currentColor" stroke-width="1.15"><circle cx="2.3" cy="2.2" r="1.6"/><circle cx="2.3" cy="12.9" r="1.6"/><circle cx="8.6" cy="3.4" r="1.6"/><path d="M2.3 3.8 V11.3 M8.6 5 V5.8 Q8.6 7.8 6.4 8.4 L4.2 9 Q2.3 9.6 2.3 11.2"/></g></svg></div><svg class="chev" style="top:209.7px;left:194.3px" width="6" height="9" viewBox="0 0 6 9"><path d="M0.9 0.8 L4.6 4.5 L0.9 8.2" fill="none" stroke="#a3a7b7" stroke-width="1.2"/></svg><div class="mi" style="top:252px;letter-spacing:0.39px;">Service Locations</div><div class="ic" style="top:252px"><svg width="11" height="16" viewBox="0 0 11 16" style="top:4.8px;left:.1px"><path d="M5.4 0 A5.35 5.35 0 0 1 10.75 5.35 C10.75 7.2 9.9 8.4 9 10 L6.2 15 Q5.4 15.9 4.6 15 L1.8 10 C0.9 8.4 0.05 7.2 0.05 5.35 A5.35 5.35 0 0 1 5.4 0 Z M5.4 2.7 A2.6 2.6 0 0 0 5.4 7.9 A2.6 2.6 0 0 0 5.4 2.7 Z" fill="currentColor" fill-rule="evenodd"/></svg></div><div class="mi" style="top:303px;letter-spacing:0.62px;">Manage Owners</div><div class="ic" style="top:303px"><svg width="12" height="16" viewBox="0 0 12 16" style="top:5px;left:.1px"><g fill="none" stroke="currentColor" stroke-width="1.15"><circle cx="2.3" cy="2.2" r="1.6"/><circle cx="2.3" cy="12.9" r="1.6"/><circle cx="8.6" cy="3.4" r="1.6"/><path d="M2.3 3.8 V11.3 M8.6 5 V5.8 Q8.6 7.8 6.4 8.4 L4.2 9 Q2.3 9.6 2.3 11.2"/></g></svg></div><svg class="chev" style="top:311.7px;left:194.3px" width="6" height="9" viewBox="0 0 6 9"><path d="M0.9 0.8 L4.6 4.5 L0.9 8.2" fill="none" stroke="#a3a7b7" stroke-width="1.2"/></svg><div class="mi" style="top:354px;letter-spacing:0.51px;">Manage Fleet</div><div class="ic" style="top:354px"><svg width="17" height="19" viewBox="0 0 17 19" style="top:3.3px;left:.1px"><path d="M0.2 6 Q0.2 0.2 5 0.2 H11.2 Q16 0.2 16 6 V15 Q16 16 15 16 H1.2 Q0.2 16 0.2 15 Z" fill="currentColor"/><rect x="1.6" y="16" width="3" height="2.3" rx=".6" fill="currentColor"/><rect x="11.6" y="16" width="3" height="2.3" rx=".6" fill="currentColor"/><g fill="#292d42"><rect x="4.3" y="1.7" width="7.6" height="1.1" rx=".5"/><path d="M2.3 4.3 H13.9 Q14.5 4.3 14.5 5 V9.6 Q14.5 10.2 13.9 10.2 H2.3 Q1.7 10.2 1.7 9.6 V5 Q1.7 4.3 2.3 4.3 Z"/><circle cx="3.3" cy="12.9" r="1.15"/><circle cx="12.9" cy="12.9" r="1.15"/></g></svg></div><div class="mi" style="top:405px;letter-spacing:0.78px;">Admins</div><div class="ic" style="top:405px"><svg width="19" height="19" viewBox="0 0 19 19" style="top:3.4px;left:.1px"><defs><clipPath id="ucX"><circle cx="9.3" cy="9.3" r="7.6"/></clipPath></defs><circle cx="9.3" cy="9.3" r="8.55" fill="none" stroke="currentColor" stroke-width="1.3"/><circle cx="9.3" cy="7.2" r="3.3" fill="currentColor"/><ellipse cx="9.3" cy="16.6" rx="6.4" ry="5.2" fill="currentColor" clip-path="url(#ucX)"/></svg></div><div class="mi on" style="top:456px;letter-spacing:0.29px;">Trip Requests</div><div class="ic on" style="top:456px"><svg width="19" height="19" viewBox="0 0 19 19" style="top:3.2px;left:.1px"><path d="M0 2.3 L5.8 0 V16.3 L0 18.6 Z M6.35 0 L12.15 2.3 V18.6 L6.35 16.3 Z M12.7 2.3 L18.5 0 V16.3 L12.7 18.6 Z" fill="currentColor"/></svg></div><svg class="chev" style="top:465px;left:192.5px" width="9" height="6" viewBox="0 0 9 6"><path d="M0.8 0.9 L4.5 4.6 L8.2 0.9" fill="none" stroke="#fff" stroke-width="1.3"/></svg><div class="mi" style="top:626px;letter-spacing:0.51px;">Vehicle Types</div><div class="ic" style="top:626px"><svg width="22" height="19" viewBox="0 0 22 19" style="top:3.3px;left:.1px"><g fill="currentColor"><rect x="7.6" y="0" width="6.2" height="3.2" rx=".6"/><path d="M3.4 8.6 L5.1 3.9 Q5.5 2.7 6.8 2.7 H14.6 Q15.9 2.7 16.3 3.9 L18 8.6 Z"/><rect x="0.1" y="7.6" width="21.2" height="7.8" rx="2.4"/><rect x="1.3" y="13" width="4.2" height="5" rx="1"/><rect x="15.9" y="13" width="4.2" height="5" rx="1"/></g><g fill="#292d42"><path d="M5.6 8 L6.8 4.9 Q7 4.4 7.5 4.4 H13.9 Q14.4 4.4 14.6 4.9 L15.8 8 Z"/><circle cx="3.7" cy="11.4" r="1.35"/><circle cx="17.7" cy="11.4" r="1.35"/></g></svg></div><div class="mi" style="top:677px;letter-spacing:0.70px;">Geofencing</div><div class="ic" style="top:677px"><svg width="19" height="19" viewBox="0 0 19 19" style="top:3.2px;left:.1px"><path d="M0 2.3 L5.8 0 V16.3 L0 18.6 Z M6.35 0 L12.15 2.3 V18.6 L6.35 16.3 Z M12.7 2.3 L18.5 0 V16.3 L12.7 18.6 Z" fill="currentColor"/></svg></div><svg class="chev" style="top:685.7px;left:194.3px" width="6" height="9" viewBox="0 0 6 9"><path d="M0.9 0.8 L4.6 4.5 L0.9 8.2" fill="none" stroke="#a3a7b7" stroke-width="1.2"/></svg><div class="mi" style="top:728px;letter-spacing:0.24px;">Drivers</div><div class="ic" style="top:728px"><svg width="20" height="19" viewBox="0 0 20 19" style="top:3.7px;left:.1px"><g fill="currentColor"><circle cx="3.7" cy="2.6" r="2.4"/><circle cx="16" cy="2.6" r="2.4"/><path d="M0.1 10.6 V8 Q0.1 5.6 2.4 5.6 H4.6 Q5.4 5.6 6 6 Q5.2 8.2 6.4 10 Q4.4 10.2 3.6 11.6 H1.1 Q0.1 11.6 0.1 10.6 Z"/><path d="M19.6 10.6 V8 Q19.6 5.6 17.3 5.6 H15.1 Q14.3 5.6 13.7 6 Q14.5 8.2 13.3 10 Q15.3 10.2 16.1 11.6 H18.6 Q19.6 11.6 19.6 10.6 Z"/><circle cx="9.85" cy="6.6" r="3.5"/><path d="M3.6 16 V14.4 Q3.6 10.8 7.2 10.8 H12.5 Q16.1 10.8 16.1 14.4 V16 Q16.1 18.3 13.8 18.3 H5.9 Q3.6 18.3 3.6 16 Z"/></g></svg></div><svg class="chev" style="top:736.7px;left:194.3px" width="6" height="9" viewBox="0 0 6 9"><path d="M0.9 0.8 L4.6 4.5 L0.9 8.2" fill="none" stroke="#a3a7b7" stroke-width="1.2"/></svg><div class="mi" style="top:779px;letter-spacing:0.01px;">User</div><div class="ic" style="top:779px"><svg width="14" height="16" viewBox="0 0 14 16" style="top:4.7px;left:.1px"><g fill="currentColor"><circle cx="6.65" cy="3.7" r="3.7"/><path d="M0 13 V11.6 Q0 7.6 3.6 7.4 Q5 8.6 6.65 8.6 Q8.3 8.6 9.7 7.4 Q13.3 7.6 13.3 11.6 V13 Q13.3 15.3 11 15.3 H2.3 Q0 15.3 0 13 Z"/></g></svg></div><svg class="chev" style="top:787.7px;left:194.3px" width="6" height="9" viewBox="0 0 6 9"><path d="M0.9 0.8 L4.6 4.5 L0.9 8.2" fill="none" stroke="#a3a7b7" stroke-width="1.2"/></svg><div class="mi" style="top:830px;letter-spacing:0.65px;">Emergency Number</div><div class="ic" style="top:830px"><svg width="19" height="16" viewBox="0 0 19 16" style="top:4.6px;left:.1px"><path d="M9.3 2.2 C10.6 0.4 12.4 0 13.8 0 C16.6 0 18.6 2 18.6 4.8 C18.6 8 15.6 10.4 9.3 15.5 C3 10.4 0 8 0 4.8 C0 2 2 0 4.8 0 C6.2 0 8 0.4 9.3 2.2 Z" fill="currentColor"/><path d="M0 7.9 H5.2 L6.7 4.6 L9 11.2 L10.9 6.4 L11.9 7.9 H18.6" fill="none" stroke="#292d42" stroke-width="1.2" stroke-linejoin="round"/></svg></div><div class="mi" style="top:881px;letter-spacing:0.59px;">Promo Code</div><div class="ic" style="top:881px"><svg width="16" height="14" viewBox="0 0 16 14" style="top:5.3px;left:.1px"><g fill="currentColor"><rect x="0" y="3.8" width="15.9" height="3.6" rx=".6"/><rect x="1.1" y="7.4" width="13.7" height="6.3" rx=".8"/></g><rect x="6.5" y="5.2" width="2.9" height="7.2" fill="#292d42"/><g fill="none" stroke="currentColor" stroke-width="1.2"><path d="M7.6 3.8 C5 3.8 3.4 3 3.7 1.6 C4 0.2 6 0.3 6.7 1.6 Z"/><path d="M8.3 3.8 C10.9 3.8 12.5 3 12.2 1.6 C11.9 0.2 9.9 0.3 9.2 1.6 Z"/></g></svg></div><div class="mi" style="top:932px;letter-spacing:0.70px;">Custom Notification</div><div class="ic" style="top:932px"><svg width="19" height="19" viewBox="0 0 19 19" style="top:3.7px;left:.1px"><path d="M18.6 0 L15.9 16.6 L10.6 14.4 L7.8 18 V13.6 L16.2 2.8 L5.6 12.2 L0 9.9 Z" fill="currentColor"/></svg></div><svg class="chev" style="top:940.7px;left:194.3px" width="6" height="9" viewBox="0 0 6 9"><path d="M0.9 0.8 L4.6 4.5 L0.9 8.2" fill="none" stroke="#a3a7b7" stroke-width="1.2"/></svg><div class="si on" style="top:508.5px;letter-spacing:0.04px;">Rides</div><div class="circ" style="top:513.0px;border-color:#fff"></div><div class="si" style="top:543.5px;letter-spacing:0.35px;">Scheduled Rides</div><div class="circ" style="top:548.0px;border-color:#a9acb9"></div><div class="si" style="top:578.5px;letter-spacing:0.47px;">Cancellation Rides</div><div class="circ" style="top:583.0px;border-color:#a9acb9"></div></div></div></div>
</div>
</body></html>
